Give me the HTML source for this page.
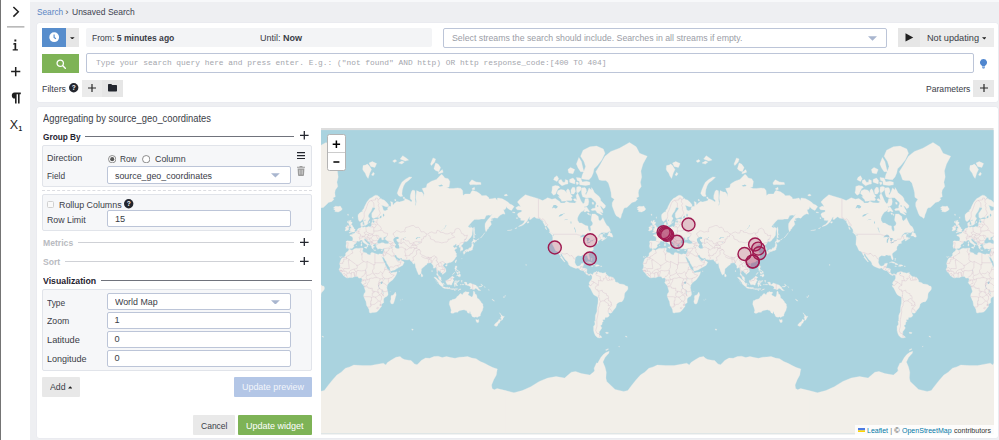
<!DOCTYPE html>
<html lang="en"><head><meta charset="utf-8"><title>Unsaved Search</title>
<style>
*{box-sizing:border-box;margin:0;padding:0}
html,body{width:999px;height:440px;overflow:hidden;background:#eeeff2;font-family:"Liberation Sans",sans-serif;color:#252d47}
.a{position:absolute}
.t{position:absolute;white-space:nowrap;line-height:1;font-size:9.6px;color:#3a3d47}
.b{font-weight:bold}
.panel{position:absolute;background:#fff;border-radius:2.500px;box-shadow:0 0 0 0.500px #e6e8ed}
.box{position:absolute;background:#f6f7f9;border:1px solid #e1e4ea;border-radius:2px}
.inp{position:absolute;background:#fff;border:1px solid #bcc5d8;border-radius:2px}
.btn{position:absolute;background:#e8e8e8;border-radius:1px}
.hr{position:absolute;height:1px;background:#70737c}
.hrl{position:absolute;height:1px;background:#cfd1d6}
</style></head>
<body>
<div class="a" style="left:0;top:0;width:1px;height:440px;background:#747474"></div>
<div class="a" style="left:1px;top:0;width:29.100px;height:440px;background:#fff"></div>
<div class="a" style="left:30.2px;top:0;width:969px;height:1.6px;background:#f7f8fa"></div>
<svg class="a" style="left:0;top:0" width="31" height="130" viewBox="0 0 31 130"><path d="M13.4 7 L18.3 11.8 L13.4 16.6" fill="none" stroke="#1f1f1f" stroke-width="1.5"/><rect x="7" y="26.4" width="17.4" height="1" fill="#8d8d8d"/><path d="M13.8 43h2.4v6.2h1.7v1.4h-5.2v-1.4h1.8v-4.8h-1.6z M14.4 39.6h1.9v2h-1.9z" fill="#1f1f1f"/><path d="M11.1 71.6h9.200 M15.7 67v9.200" stroke="#1f1f1f" stroke-width="1.5" fill="none"/><path d="M14.6 92.600h6.200v1.600h-1.200v9.200h-1.600v-9.200h-1.400v9.200h-1.600v-4.800a3 3 0 0 1-.4-6z" fill="#1f1f1f"/></svg>
<div class="t " style="left:9.8px;top:119.12px;font-size:12.5px;color:#1f1f1f;">X</div>
<div class="t b" style="left:18.4px;top:125.60px;font-size:6.5px;color:#1f1f1f;">1</div>
<div class="t " style="left:36.8px;top:7.40px;font-size:9.8px;color:#5b86c4;transform:scaleX(0.844);transform-origin:0 0;">Search</div>
<div class="t " style="left:65.2px;top:7.00px;font-size:9.8px;color:#555;">&rsaquo;</div>
<div class="t " style="left:71.7px;top:7.40px;font-size:9.8px;color:#3d4250;transform:scaleX(0.867);transform-origin:0 0;">Unsaved Search</div>
<div class="panel" style="left:36.600px;top:22.700px;width:961px;height:79.500px"></div>
<div class="a" style="left:42px;top:28px;width:24.2px;height:19px;background:#578dcc"></div>
<svg class="a" style="left:49px;top:32.4px" width="10.4" height="10.4" viewBox="0 0 20 20"><circle cx="10" cy="10" r="9.4" fill="#fff"/><path d="M9.8 4.6v5.9l3.6 2.6" stroke="#578dcc" stroke-width="2.2" fill="none"/></svg>
<div class="a" style="left:66.2px;top:28px;width:12.8px;height:19px;background:#e6e6e6"></div>
<svg class="a" style="left:70.3px;top:36.6px" width="4.6" height="2.6" viewBox="0 0 10 5"><path d="M0 0h10l-5 5z" fill="#1f1f1f"/></svg>
<div class="a" style="left:86.4px;top:28px;width:345.6px;height:19px;background:#f3f4f6;border-radius:2px"></div>
<div class="t " style="left:92px;top:33.37px;font-size:9.6px;transform:scaleX(0.893);transform-origin:0 0;">From: <b>5 minutes ago</b></div>
<div class="t " style="left:259.5px;top:33.37px;font-size:9.6px;transform:scaleX(0.938);transform-origin:0 0;">Until: <b>Now</b></div>
<div class="inp" style="left:442.8px;top:28px;width:444px;height:20px"></div>
<div class="t " style="left:451.8px;top:33.83px;font-size:9.3px;color:#9a9da6;transform:scaleX(0.942);transform-origin:0 0;">Select streams the search should include. Searches in all streams if empty.</div>
<svg class="a" style="left:868px;top:36px" width="9" height="4.8" viewBox="0 0 10 5"><path d="M0 0h10l-5 5z" fill="#a9b6cf"/></svg>
<div class="a" style="left:898px;top:28px;width:22px;height:19.4px;background:#e6e6e6"></div>
<svg class="a" style="left:905px;top:33.2px" width="8.6" height="8.8" viewBox="0 0 10 10"><path d="M0.6 0.2L9.6 5L0.6 9.8z" fill="#1f1f1f"/></svg>
<div class="a" style="left:920px;top:28px;width:73.8px;height:19.4px;background:#ececec"></div>
<div class="t " style="left:927.4px;top:33.37px;font-size:9.6px;transform:scaleX(0.956);transform-origin:0 0;">Not updating</div>
<svg class="a" style="left:981.6px;top:37px" width="4.6" height="2.6" viewBox="0 0 10 5"><path d="M0 0h10l-5 5z" fill="#1f1f1f"/></svg>
<div class="a" style="left:42px;top:54.2px;width:37px;height:19.2px;background:#7eb356"></div>
<svg class="a" style="left:55.6px;top:58.8px" width="10.6" height="10.6" viewBox="0 0 20 20"><circle cx="8" cy="8" r="6" fill="none" stroke="#fff" stroke-width="2.4"/><path d="M12.4 12.4L18.6 18.6" stroke="#fff" stroke-width="2.6"/></svg>
<div class="inp" style="left:86.4px;top:53.4px;width:887.2px;height:20px"></div>
<div class="t " style="left:96.3px;top:59.07px;font-size:7.87px;color:#a4a6ad;font-family:'Liberation Mono',monospace;transform:scaleX(1.002);transform-origin:0 0;">Type your search query here and press enter. E.g.: ("not found" AND http) OR http response_code:[400 TO 404]</div>
<svg class="a" style="left:979.6px;top:58.8px" width="7" height="10.4" viewBox="0 0 14 21"><path d="M7 0a7 7 0 0 0-4.2 12.6c.8.8 1.2 1.6 1.3 2.8h5.8c.1-1.2.5-2 1.3-2.8A7 7 0 0 0 7 0z M4.2 16.6h5.6v1.6H4.2z M5.2 19h3.6v1.6H5.2z" fill="#4f86cf"/></svg>
<div class="t " style="left:42.4px;top:83.57px;font-size:9.6px;transform:scaleX(0.919);transform-origin:0 0;">Filters</div>
<svg class="a" style="left:69.2px;top:83.4px" width="9.4" height="9.4" viewBox="0 0 20 20"><circle cx="10" cy="10" r="10" fill="#23262e"/><text x="10" y="15.2" font-size="14" font-weight="bold" text-anchor="middle" fill="#fff" font-family="Liberation Sans">?</text></svg>
<div class="a" style="left:82px;top:80px;width:20.4px;height:16.6px;background:#ebebeb"></div>
<div class="a" style="left:102.4px;top:80px;width:20.2px;height:16.6px;background:#e6e6e6"></div>
<svg class="a" style="left:88px;top:84px" width="8" height="8" viewBox="0 0 10 10"><path d="M0 5h10M5 0v10" stroke="#2a2a2a" stroke-width="1.5"/></svg>
<svg class="a" style="left:108px;top:84.2px" width="9" height="7.6" viewBox="0 0 18 15"><path d="M0 1.5A1.5 1.5 0 0 1 1.5 0h5l2 2h8A1.5 1.5 0 0 1 18 3.5v10A1.5 1.5 0 0 1 16.500 15h-15A1.500 1.500 0 0 1 0 13.500z" fill="#23262e"/></svg>
<div class="t " style="left:925.6px;top:83.57px;font-size:9.6px;transform:scaleX(0.895);transform-origin:0 0;">Parameters</div>
<div class="a" style="left:973.3px;top:80px;width:20.5px;height:16.8px;background:#e8e8e8"></div>
<svg class="a" style="left:979.6px;top:84.2px" width="8" height="8" viewBox="0 0 10 10"><path d="M0 5h10M5 0v10" stroke="#2a2a2a" stroke-width="1.5"/></svg>
<div class="panel" style="left:36.600px;top:107.300px;width:961px;height:331px"></div>
<div class="t " style="left:43px;top:114.10px;font-size:10.4px;transform:scaleX(0.900);transform-origin:0 0;">Aggregating by source_geo_coordinates</div>
<div class="t b" style="left:42.6px;top:132.00px;font-size:9.8px;color:#1f2330;transform:scaleX(0.842);transform-origin:0 0;">Group By</div>
<div class="hr" style="left:85.3px;top:135.9px;width:208.5px"></div>
<svg class="a" style="left:300px;top:131.4px" width="8.6" height="8.6" viewBox="0 0 10 10"><path d="M0 5h10M5 0v10" stroke="#23262e" stroke-width="1.5"/></svg>
<div class="box" style="left:42.4px;top:144.6px;width:269.4px;height:42.2px"></div>
<div class="t " style="left:47.3px;top:153.37px;font-size:9.6px;transform:scaleX(0.930);transform-origin:0 0;">Direction</div>
<svg class="a" style="left:107.6px;top:154.8px" width="8.4" height="8.4" viewBox="0 0 16 16"><circle cx="8" cy="8" r="7" fill="#fff" stroke="#767676" stroke-width="1.6"/><circle cx="8" cy="8" r="4" fill="#5a5a5a"/></svg>
<div class="t " style="left:119.7px;top:153.77px;font-size:9.6px;transform:scaleX(0.864);transform-origin:0 0;">Row</div>
<svg class="a" style="left:142px;top:154.8px" width="8.4" height="8.4" viewBox="0 0 16 16"><circle cx="8" cy="8" r="7" fill="#fff" stroke="#767676" stroke-width="1.6"/></svg>
<div class="t " style="left:154.6px;top:153.77px;font-size:9.6px;transform:scaleX(0.926);transform-origin:0 0;">Column</div>
<svg class="a" style="left:296.6px;top:152px" width="8.4" height="7.4" viewBox="0 0 16 14"><path d="M0 1.300h16M0 7h16M0 12.700h16" stroke="#23262e" stroke-width="2.4"/></svg>
<svg class="a" style="left:297px;top:165.600px" width="8" height="10" viewBox="0 0 16 20"><path d="M5.500 0h5l.8 1.600H16v2H0v-2h4.700z M1.200 5h13.600l-.9 13.400a1.700 1.700 0 0 1-1.700 1.600H3.800a1.700 1.700 0 0 1-1.700-1.600z" fill="#9b9b9b"/><path d="M5 7.500v9.500M8 7.500v9.500M11 7.500v9.500" stroke="#ddd" stroke-width="1.200"/></svg>
<div class="t " style="left:47.3px;top:170.77px;font-size:9.6px;transform:scaleX(0.866);transform-origin:0 0;">Field</div>
<div class="inp" style="left:107.2px;top:166.4px;width:183.4px;height:17.2px"></div>
<div class="t " style="left:114.6px;top:170.57px;font-size:9.6px;transform:scaleX(0.923);transform-origin:0 0;">source_geo_coordinates</div>
<svg class="a" style="left:271.4px;top:173.4px" width="8.800" height="4.800" viewBox="0 0 10 5"><path d="M0 0h10l-5 5z" fill="#a9b6cf"/></svg>
<div class="a" style="left:42.4px;top:190px;width:269.4px;height:0;border-top:1px dashed #dcdde2"></div>
<div class="box" style="left:42.4px;top:194.4px;width:269.4px;height:36.2px"></div>
<div class="a" style="left:47.3px;top:200.800px;width:7.200px;height:7.200px;border:1px solid #d0d0d0;border-radius:1.500px;background:#fafafa"></div>
<div class="t " style="left:58.8px;top:199.97px;font-size:9.6px;transform:scaleX(0.924);transform-origin:0 0;">Rollup Columns</div>
<svg class="a" style="left:124.2px;top:199.300px" width="9.400" height="9.400" viewBox="0 0 20 20"><circle cx="10" cy="10" r="10" fill="#23262e"/><text x="10" y="15.200" font-size="14" font-weight="bold" text-anchor="middle" fill="#fff" font-family="Liberation Sans">?</text></svg>
<div class="t " style="left:47.3px;top:214.57px;font-size:9.6px;transform:scaleX(0.916);transform-origin:0 0;">Row Limit</div>
<div class="inp" style="left:107.2px;top:210.200px;width:183.4px;height:16.400px"></div>
<div class="t " style="left:115px;top:214.51px;font-size:9.2px;">15</div>
<div class="t b" style="left:42.6px;top:237.80px;font-size:9.8px;color:#b9bbc1;transform:scaleX(0.880);transform-origin:0 0;">Metrics</div>
<div class="hrl" style="left:77.800px;top:241.900px;width:216px"></div>
<svg class="a" style="left:300px;top:237.600px" width="8.600" height="8.600" viewBox="0 0 10 10"><path d="M0 5h10M5 0v10" stroke="#23262e" stroke-width="1.500"/></svg>
<div class="t b" style="left:42.6px;top:256.70px;font-size:9.8px;color:#b9bbc1;transform:scaleX(0.877);transform-origin:0 0;">Sort</div>
<div class="hrl" style="left:65.300px;top:261.200px;width:228.500px"></div>
<svg class="a" style="left:300px;top:256.800px" width="8.600" height="8.600" viewBox="0 0 10 10"><path d="M0 5h10M5 0v10" stroke="#23262e" stroke-width="1.500"/></svg>
<div class="t b" style="left:42.6px;top:276.00px;font-size:9.8px;color:#1f2330;transform:scaleX(0.891);transform-origin:0 0;">Visualization</div>
<div class="hr" style="left:100.800px;top:280.100px;width:210.800px"></div>
<div class="box" style="left:42.4px;top:288.800px;width:269.400px;height:81.800px"></div>
<div class="t " style="left:47.3px;top:297.67px;font-size:9.6px;transform:scaleX(0.874);transform-origin:0 0;">Type</div>
<div class="inp" style="left:107.2px;top:292.8px;width:183.400px;height:17px"></div>
<div class="t " style="left:114.6px;top:297.37px;font-size:9.6px;transform:scaleX(0.922);transform-origin:0 0;">World Map</div>
<div class="t " style="left:47.3px;top:316.37px;font-size:9.6px;transform:scaleX(0.905);transform-origin:0 0;">Zoom</div>
<div class="inp" style="left:107.2px;top:311.7px;width:183.400px;height:17px"></div>
<div class="t " style="left:114.6px;top:316.41px;font-size:9.2px;">1</div>
<div class="t " style="left:47.3px;top:335.17px;font-size:9.6px;transform:scaleX(0.961);transform-origin:0 0;">Latitude</div>
<div class="inp" style="left:107.2px;top:330.5px;width:183.400px;height:17px"></div>
<div class="t " style="left:114.6px;top:335.21px;font-size:9.2px;">0</div>
<div class="t " style="left:47.3px;top:354.37px;font-size:9.6px;transform:scaleX(0.939);transform-origin:0 0;">Longitude</div>
<div class="inp" style="left:107.2px;top:349.5px;width:183.400px;height:17px"></div>
<div class="t " style="left:114.6px;top:354.41px;font-size:9.2px;">0</div>
<svg class="a" style="left:271.400px;top:299.600px" width="8.800" height="4.800" viewBox="0 0 10 5"><path d="M0 0h10l-5 5z" fill="#a9b6cf"/></svg>
<div class="btn" style="left:42px;top:376.800px;width:38px;height:20px;background:#e8e8e8"></div>
<div class="t " style="left:50px;top:382.37px;font-size:9.6px;transform:scaleX(0.913);transform-origin:0 0;">Add</div>
<svg class="a" style="left:68px;top:386px" width="4.400" height="2.600" viewBox="0 0 10 5"><path d="M0 5h10l-5-5z" fill="#1f1f1f"/></svg>
<div class="btn" style="left:233.600px;top:376.800px;width:78.200px;height:20px;background:#b3c6e6"></div>
<div class="t " style="left:241.6px;top:382.37px;font-size:9.6px;color:#f2f5fb;transform:scaleX(0.930);transform-origin:0 0;">Update preview</div>
<div class="btn" style="left:193.400px;top:415.200px;width:42.100px;height:19.800px;background:#e9e9e9"></div>
<div class="t " style="left:201px;top:420.97px;font-size:9.6px;transform:scaleX(0.887);transform-origin:0 0;">Cancel</div>
<div class="btn" style="left:238.200px;top:415.200px;width:73.600px;height:19.800px;background:#7eb356"></div>
<div class="t " style="left:246px;top:420.97px;font-size:9.6px;color:#fff;transform:scaleX(0.939);transform-origin:0 0;">Update widget</div>
<svg class="a" style="left:321.0px;top:128.2px" width="672.6" height="306.4" viewBox="0 0 672.6 306.4">
<rect x="0" y="0" width="672.6" height="306.4" fill="#ddd"/>
<rect x="0" y="2.1" width="672.6" height="303.5" fill="#aad3df"/>
<path fill="#f2efe9" stroke="#f2efe9" stroke-width="0.3" stroke-linejoin="round" d="M-4.3 90.5L-6.0 89.0L-8.1 87.9L-9.4 85.8L-10.6 82.6L-12.3 78.0L-12.3 74.7L-10.2 71.2L-13.1 69.2L-13.4 64.8L-14.4 60.5L-16.1 54.9L-18.6 52.5L-22.8 52.5L-25.4 51.8L-27.1 47.0L-28.7 43.7L-24.5 37.1L-22.0 32.6L-19.5 28.2L-13.6 23.4L-5.1 20.2L5.0 14.5L11.7 18.8L15.1 25.3L22.7 28.2L18.5 36.1L16.4 42.9L17.2 48.9L15.9 54.2L16.8 58.4L14.3 62.0L13.8 64.8L14.3 68.7L11.7 70.0L13.0 71.2L10.9 73.5L7.5 74.5L5.0 76.9L2.4 79.4L0.3 79.8L-0.9 81.0L-1.8 83.9L-3.0 86.7L-3.5 89.3ZM12.3 80.0L14.3 78.2L17.6 78.6L19.3 78.0L20.5 80.0L21.3 81.0L20.2 82.4L17.2 84.1L15.5 83.8L13.7 83.4L14.3 82.2L12.6 81.2L14.3 80.2ZM-32.4 146.6L-31.9 147.0L-30.9 144.8L-30.3 144.4L-28.7 144.0L-27.5 143.3L-27.6 144.5L-26.2 143.6L-24.8 144.6L-22.8 144.8L-21.6 145.2L-19.5 144.7L-18.6 145.8L-17.8 146.6L-16.5 147.9L-15.3 148.7L-13.6 148.8L-11.5 149.4L-10.6 150.2L-9.4 152.3L-9.4 153.8L-8.1 154.2L-6.8 154.4L-4.7 155.9L-2.2 156.2L-0.1 156.8L1.4 157.9L3.0 158.3L3.5 160.1L3.1 161.8L1.6 163.6L0.3 164.9L-0.1 167.0L-0.2 169.2L-0.9 171.3L-1.8 172.8L-2.6 173.7L-4.7 173.9L-6.4 174.7L-7.9 176.2L-8.2 177.9L-8.9 179.7L-10.2 181.3L-11.3 182.6L-12.3 184.3L-13.6 185.2L-15.3 184.9L-16.4 184.3L-15.5 186.4L-15.0 186.9L-15.8 188.5L-16.9 189.2L-19.5 189.6L-19.7 191.5L-22.0 191.8L-21.2 193.5L-22.3 194.6L-22.4 196.4L-24.1 197.8L-22.8 199.4L-22.8 200.3L-24.3 202.6L-25.4 203.9L-24.9 205.8L-25.8 206.0L-24.8 207.1L-22.4 209.3L-24.9 210.0L-27.1 209.6L-29.2 207.4L-30.2 205.3L-30.9 202.6L-30.9 200.0L-31.0 198.4L-29.6 196.4L-29.6 194.6L-28.7 192.9L-29.3 191.8L-29.2 190.1L-29.2 187.6L-28.6 185.9L-27.6 183.8L-27.5 180.3L-27.1 177.5L-26.6 175.6L-26.5 174.0L-26.4 171.0L-26.6 169.5L-27.5 168.6L-29.2 167.7L-30.9 166.6L-31.5 165.5L-32.3 164.0L-33.4 161.8L-34.4 159.7L-35.5 158.9L-35.7 157.6L-34.9 156.6L-34.6 155.9L-35.5 155.7L-35.3 154.6L-34.6 153.4L-34.5 153.0L-33.6 152.5L-32.5 150.6L-32.4 149.2L-32.5 147.9L-32.9 147.6ZM27.8 121.4L28.3 121.3L30.3 122.0L31.1 122.2L32.8 121.3L33.6 120.7L35.3 120.3L37.0 120.4L39.1 120.2L41.1 119.9L42.1 120.2L41.7 120.8L41.9 121.7L41.4 123.0L42.1 123.8L43.3 124.4L45.6 124.9L46.1 126.0L48.0 126.8L49.2 126.9L49.7 125.8L49.7 125.0L50.9 124.4L52.4 124.8L53.9 125.6L55.6 126.0L57.2 126.4L58.9 125.8L60.0 126.1L61.6 126.0L62.2 127.8L61.6 129.4L60.9 128.7L60.3 127.4L60.4 128.2L61.0 129.4L61.5 130.6L62.3 132.5L62.9 133.9L64.0 135.2L64.2 137.0L65.3 138.4L65.9 140.5L67.4 141.7L68.6 142.7L69.3 143.2L69.3 144.0L70.3 144.9L72.4 144.3L74.1 144.2L76.0 143.7L75.8 144.9L75.4 146.2L74.5 147.9L73.3 149.8L71.6 151.9L69.5 153.5L68.2 154.6L67.4 155.5L66.5 156.8L66.1 158.0L65.7 159.3L66.1 161.0L66.5 162.7L66.9 164.4L67.1 166.6L66.1 168.2L64.0 169.2L62.7 170.8L62.6 172.8L62.7 174.7L60.6 176.0L60.5 176.5L60.5 178.4L59.4 179.8L58.1 181.6L56.8 183.1L55.6 184.0L54.5 184.3L52.6 184.4L51.3 184.5L49.7 185.1L48.4 184.6L48.2 183.1L48.1 181.8L47.4 180.3L46.7 179.0L45.6 177.5L45.3 175.6L45.0 173.6L44.2 171.9L43.3 169.7L42.7 168.5L42.7 167.0L43.3 165.3L44.2 164.3L44.4 163.1L43.9 161.4L43.2 158.9L43.1 158.4L42.7 157.6L42.1 156.9L41.0 155.7L40.2 154.4L40.8 153.4L40.8 152.8L41.1 151.9L41.0 150.8L40.8 150.4L40.1 149.9L38.7 150.1L37.9 150.2L37.0 149.1L36.6 148.5L34.9 148.4L33.8 148.6L32.6 149.1L31.1 149.7L30.1 149.5L28.6 149.4L26.5 150.1L25.0 149.4L23.7 148.5L22.3 147.5L21.7 146.6L21.3 145.8L20.2 144.6L18.7 143.3L18.6 142.4L18.0 141.3L18.9 140.1L19.1 138.4L19.1 137.2L18.5 135.7L19.3 133.2L20.2 131.1L21.8 129.4L23.1 128.9L24.4 127.8L24.6 126.8L24.5 125.8L25.0 124.8L26.1 123.8L27.1 123.3L27.7 122.1ZM74.4 164.0L75.2 167.0L75.0 167.5L74.5 168.8L73.9 171.0L73.1 173.7L72.4 175.6L71.2 176.0L69.9 175.4L69.3 173.3L70.1 171.0L69.9 169.2L70.3 167.6L71.8 167.2L72.8 166.4L73.7 165.1ZM24.8 118.4L25.4 115.8L25.0 113.6L26.1 112.8L28.2 112.9L29.8 113.0L31.3 113.1L31.8 111.8L31.9 110.0L30.9 108.6L29.0 107.7L28.8 107.0L30.3 106.5L31.5 106.8L31.4 105.4L31.8 105.8L33.0 105.6L34.1 104.7L34.2 103.8L35.8 103.1L36.3 102.0L36.8 100.9L37.9 100.2L38.7 100.1L40.0 99.8L40.2 98.3L39.7 97.3L39.7 95.0L41.1 94.3L41.7 93.9L41.6 95.8L41.9 96.6L41.2 97.8L41.1 98.3L41.9 99.5L43.1 99.1L44.2 98.8L44.9 99.6L46.3 99.1L48.2 98.3L48.6 98.9L49.5 98.9L49.7 98.2L50.5 97.6L50.5 95.3L50.9 94.3L51.8 93.9L52.4 95.0L53.0 94.9L53.4 93.6L53.3 93.0L52.6 92.3L52.6 91.5L53.6 91.0L55.6 91.0L56.4 91.0L58.3 90.4L57.0 89.3L54.7 89.5L53.8 90.0L52.2 90.5L50.9 89.3L50.8 87.6L50.8 85.3L51.8 83.9L53.5 81.6L54.2 80.8L53.5 79.6L51.5 79.6L50.8 81.6L49.9 83.6L48.4 85.4L47.4 87.2L47.3 89.0L48.4 89.8L48.6 90.9L48.1 91.4L46.9 93.8L46.6 95.5L46.0 96.4L44.9 97.3L43.8 97.5L43.6 96.6L43.3 95.2L42.8 93.9L42.2 91.8L41.7 91.4L41.8 90.4L41.1 91.8L39.7 93.3L38.7 93.5L37.6 92.2L37.2 90.2L37.0 88.5L37.1 86.7L38.3 85.3L40.0 83.9L41.6 83.4L41.2 82.6L42.9 80.4L43.6 78.4L45.0 75.8L45.9 74.0L47.1 72.4L48.8 70.5L50.9 69.5L52.6 68.2L54.5 67.2L56.4 67.4L58.1 68.7L58.9 69.2L58.1 70.7L60.2 70.5L61.0 71.4L63.1 72.1L65.3 74.0L67.4 76.5L67.6 78.4L66.5 78.8L64.8 78.8L62.3 77.7L60.6 77.3L60.2 76.7L61.5 79.0L62.3 82.0L64.0 83.0L63.6 83.2L64.8 82.4L66.5 81.8L66.9 82.0L66.5 80.0L68.2 78.2L69.9 78.6L70.1 75.8L69.5 73.5L71.6 74.2L72.0 77.3L73.3 75.6L75.8 73.5L78.3 74.0L80.9 73.3L83.4 72.4L83.8 70.5L86.8 71.7L88.4 72.4L89.7 73.5L90.5 74.0L91.0 72.4L89.3 70.7L89.3 67.4L90.5 63.4L91.8 62.0L93.9 62.8L94.2 67.4L94.0 71.2L94.6 74.7L93.9 77.7L94.8 77.1L95.4 73.5L94.8 70.0L95.6 62.6L98.6 64.0L100.7 64.0L102.4 66.1L102.8 68.7L103.2 65.3L101.1 60.5L105.3 59.6L106.1 55.9L110.4 53.2L115.4 51.4L120.5 46.2L122.2 47.7L123.8 50.0L127.2 50.7L128.9 53.5L128.1 59.0L125.5 59.3L128.5 60.5L132.3 60.5L136.5 59.9L139.9 60.5L141.6 62.6L142.0 67.4L144.1 66.1L146.6 65.9L149.1 66.1L150.8 63.1L151.7 62.6L155.9 63.7L159.3 65.9L160.9 67.7L165.2 67.4L167.7 69.5L168.1 70.9L171.1 70.7L174.4 70.0L176.1 72.4L176.5 70.0L178.6 70.2L181.2 70.7L184.5 72.6L187.1 74.2L188.8 76.0L191.3 76.9L193.2 78.8L192.1 80.0L190.5 82.4L188.3 81.4L186.2 80.0L185.4 78.6L184.5 81.0L183.3 81.8L182.4 81.6L183.7 84.9L184.1 86.2L182.0 85.8L179.5 87.1L177.8 88.5L176.4 90.2L173.6 89.7L171.9 90.2L170.6 90.5L170.2 92.7L169.4 93.5L169.8 94.3L170.4 96.3L169.2 98.0L167.7 99.5L167.5 100.6L166.4 101.1L166.0 102.6L164.9 103.7L164.3 101.6L164.0 98.8L164.1 95.8L165.2 93.8L167.3 91.0L169.0 89.3L170.2 87.6L171.5 85.8L169.4 87.4L167.7 87.1L165.2 87.6L163.5 91.0L160.1 91.0L158.0 91.4L155.5 91.4L153.4 91.4L150.8 93.9L149.1 96.1L147.0 98.5L148.3 99.5L149.1 99.8L150.4 99.2L151.9 100.5L151.4 102.7L151.2 105.0L151.1 106.9L149.6 109.4L147.9 111.2L146.6 113.0L144.9 113.8L144.1 113.3L143.0 114.3L142.2 115.3L142.1 116.1L140.4 117.2L140.3 117.8L141.1 118.9L141.9 120.2L141.9 121.7L141.6 122.2L140.5 122.6L139.4 122.9L139.4 121.5L139.6 120.2L139.2 119.4L138.4 119.3L137.9 118.9L138.4 117.6L137.7 116.9L136.1 117.5L135.1 118.3L135.4 117.5L135.7 116.4L134.8 116.0L133.5 117.2L132.3 117.8L132.0 118.6L133.0 119.3L133.3 120.0L134.6 119.3L136.1 119.8L135.9 120.3L134.4 121.1L133.4 122.3L134.2 123.1L134.7 124.6L135.5 125.5L135.6 126.4L134.6 127.0L135.7 127.5L135.4 128.7L134.6 129.4L133.7 131.1L133.1 131.8L132.4 132.6L131.4 133.4L130.6 134.0L129.2 134.5L128.5 134.6L127.2 135.1L126.0 135.5L125.8 136.3L125.4 135.3L124.3 135.1L123.4 135.4L122.8 136.0L122.0 137.5L122.6 138.6L123.6 139.7L124.1 140.1L124.7 141.4L125.0 142.9L124.7 144.0L123.4 145.0L122.8 145.6L121.5 146.5L121.2 145.5L120.9 145.0L120.1 144.8L119.5 143.8L118.8 143.3L117.9 143.0L117.9 142.4L117.4 142.3L117.1 142.7L116.9 143.8L116.4 145.1L116.5 145.9L117.1 146.6L117.4 147.7L118.4 148.1L119.2 148.7L119.9 149.6L120.1 150.4L120.0 151.4L120.6 152.6L120.1 152.7L119.0 151.9L118.2 151.3L117.5 149.7L117.4 148.7L116.9 148.1L116.3 147.2L115.7 147.0L115.8 145.5L116.0 144.5L115.8 143.2L115.6 141.9L115.2 140.6L115.2 139.7L114.6 139.3L113.9 139.7L113.1 140.3L112.3 140.1L112.5 138.8L112.2 137.7L111.6 136.8L110.6 135.7L110.2 134.5L109.1 134.8L107.8 135.1L106.1 135.2L106.0 136.1L105.6 136.7L104.5 137.3L103.2 138.5L102.1 139.6L101.1 140.3L100.4 141.0L100.4 142.7L100.1 144.0L100.1 145.1L99.4 145.9L98.7 146.4L98.1 146.9L97.3 146.2L96.9 144.9L96.2 143.6L95.7 142.3L95.4 141.0L94.7 139.7L94.3 137.6L94.1 136.1L94.0 135.2L93.9 134.6L93.5 135.5L92.5 135.9L91.1 134.6L92.0 133.9L90.8 133.7L89.7 133.1L89.3 132.2L88.9 131.6L87.2 131.8L84.9 131.9L83.0 131.6L81.3 131.4L80.9 130.3L80.3 130.0L78.7 130.5L77.5 130.1L76.2 129.3L75.6 128.2L75.0 127.1L73.9 127.0L73.3 127.8L73.7 128.9L74.4 129.9L75.1 130.5L75.1 131.5L75.6 132.2L76.0 131.0L76.3 131.8L76.2 132.5L77.1 132.8L78.6 132.7L79.4 131.7L80.1 131.0L80.3 132.0L80.9 132.9L82.2 133.3L83.2 134.3L82.4 135.9L81.5 137.5L80.9 137.7L79.6 138.5L78.3 139.3L76.8 140.1L75.0 141.1L73.7 141.9L71.6 142.6L70.7 142.9L69.5 143.0L69.2 142.3L68.9 141.0L68.8 139.7L67.5 137.9L66.5 136.3L65.8 135.2L65.3 133.4L64.2 132.2L63.8 131.1L62.7 129.7L62.3 129.0L62.2 127.8L61.6 126.0L61.9 125.7L62.3 124.5L62.7 123.4L63.1 122.1L63.1 121.2L63.3 120.5L62.6 120.6L61.5 120.9L60.2 121.1L58.6 120.4L57.7 121.0L56.4 120.5L55.8 119.7L55.1 118.6L55.6 117.5L54.9 116.9L56.0 116.4L57.2 116.2L57.3 115.6L58.9 115.6L60.6 114.7L62.3 114.7L63.6 115.5L64.8 115.8L66.5 115.8L67.9 115.2L67.8 113.9L66.5 113.0L64.8 111.8L64.0 111.0L64.8 109.4L65.9 108.6L64.4 108.8L62.7 109.4L62.3 110.0L62.7 110.9L63.5 111.1L62.3 111.5L61.2 111.9L60.3 110.7L61.1 109.9L59.8 109.4L58.8 109.4L57.8 110.9L57.0 112.2L56.4 113.2L56.2 114.1L56.6 115.2L57.2 115.6L56.4 115.8L55.6 116.2L54.9 116.6L54.7 116.0L53.5 116.0L52.9 116.7L52.1 116.4L51.9 117.5L52.4 118.0L53.0 118.9L53.0 119.4L52.4 119.2L52.2 119.8L52.2 120.7L51.8 120.8L51.1 120.4L50.7 119.3L50.8 118.8L50.3 118.1L49.8 117.4L49.2 116.5L49.2 115.3L49.0 114.7L48.4 114.3L47.1 113.6L45.9 112.5L45.3 111.2L44.8 110.9L44.3 111.3L44.3 110.6L44.3 110.4L43.3 110.7L43.2 112.1L44.2 112.9L44.8 114.1L46.1 114.8L46.3 115.4L47.1 115.7L48.4 116.7L48.3 117.2L47.1 116.4L46.8 117.3L47.2 118.0L46.7 118.8L46.0 119.1L46.3 118.4L46.3 117.5L45.7 116.8L45.0 116.2L43.8 115.5L43.1 114.9L42.1 114.3L41.7 113.6L41.4 112.5L40.3 111.9L39.1 112.6L38.0 113.5L36.8 113.1L35.8 113.2L35.4 114.1L35.5 114.8L34.7 115.4L33.5 116.1L32.5 117.5L33.0 118.3L32.2 119.4L31.1 120.4L29.1 120.5L28.2 121.1L27.6 120.7L27.0 120.0L26.1 120.2L25.3 120.2L25.4 118.7ZM28.0 104.8L29.3 103.4L30.3 103.4L30.5 103.0L30.1 103.1L29.3 102.8L28.4 102.6L29.3 101.9L29.3 101.2L28.9 101.2L29.1 100.5L30.2 100.5L30.3 99.6L29.9 98.8L29.8 98.2L28.7 98.5L28.8 97.3L28.1 97.5L28.1 96.1L27.6 95.5L27.9 94.3L28.4 93.0L28.6 92.5L30.2 92.5L29.4 93.9L31.1 93.9L31.1 94.9L30.5 96.1L30.0 96.6L31.1 96.9L31.5 98.0L31.8 98.6L32.7 99.4L32.9 100.1L33.1 100.9L33.9 101.1L34.2 101.6L33.8 102.6L33.4 103.0L34.0 103.3L33.6 103.8L33.0 104.1L31.7 104.1L30.7 104.2L29.8 104.5L29.7 104.7L29.3 104.6L28.5 105.0ZM27.4 102.0L27.7 100.5L27.6 99.5L28.2 98.9L27.9 98.5L27.7 97.8L26.6 97.6L25.8 97.9L25.6 98.8L24.4 99.2L24.5 100.4L25.2 100.6L24.8 101.3L24.0 102.2L24.2 102.7L24.8 103.0L25.8 102.6L26.9 102.2ZM152.1 115.4L152.4 116.9L152.5 117.5L152.1 118.8L151.7 120.2L151.3 120.9L151.6 121.5L150.8 122.3L150.6 122.0L150.1 122.2L149.9 122.7L149.3 122.7L148.3 122.7L148.2 122.3L148.1 123.0L147.3 123.8L146.7 123.0L145.8 122.7L144.9 123.0L144.3 123.1L143.2 123.3L143.8 123.7L144.0 124.1L143.9 125.0L143.6 125.9L143.0 126.3L142.6 126.0L142.6 124.8L142.1 124.3L142.2 123.8L142.7 123.7L143.2 123.3L143.7 122.7L144.5 121.9L145.2 121.6L146.0 121.6L146.9 121.5L147.5 121.5L147.5 120.9L148.1 119.9L148.6 119.7L148.3 120.4L149.3 120.0L149.8 119.3L150.7 118.3L150.8 117.3L150.8 116.3L151.1 115.6L151.7 116.0ZM146.3 123.1L146.4 123.5L145.9 124.0L145.3 123.8L144.9 124.6L144.4 124.3L144.4 123.7L144.8 123.3L145.3 123.3ZM150.8 115.4L151.8 114.9L151.1 114.4L151.7 114.3L152.4 114.0L153.5 114.7L154.5 113.6L155.7 113.1L155.3 112.1L154.5 112.4L153.4 111.7L152.5 110.6L152.3 111.0L152.3 112.1L151.9 113.2L151.2 113.2L151.1 113.8L150.7 114.5ZM153.1 98.9L153.6 101.6L153.5 103.7L153.6 105.8L154.8 106.8L153.4 106.0L153.3 108.4L153.8 109.0L153.7 110.0L153.1 109.3L152.5 110.1L152.5 108.2L152.7 106.3L152.5 103.7L152.3 101.6L152.3 100.4ZM135.2 131.7L135.7 132.0L135.3 132.9L135.1 134.0L134.6 134.9L134.1 134.0L134.1 133.3L134.6 132.4ZM126.1 136.5L126.4 136.9L126.0 137.7L125.2 138.2L124.4 137.8L124.4 137.2L125.1 136.7ZM100.2 145.5L101.3 146.5L101.8 147.6L101.7 148.4L100.8 148.8L100.2 148.6L100.1 147.7L100.1 146.9ZM134.5 137.9L135.8 137.9L135.9 139.3L135.3 140.1L135.3 141.0L135.5 141.7L136.5 141.9L137.3 142.7L137.4 143.1L136.7 142.7L136.1 142.3L135.4 142.0L134.6 142.1L134.5 141.6L134.7 141.4L134.1 141.2L133.8 139.9L134.2 139.6L134.3 138.8ZM138.6 145.5L139.3 146.6L139.5 147.6L139.2 148.5L138.8 148.1L138.5 149.1L137.5 148.6L137.3 147.9L136.7 147.5L135.7 148.0L135.9 147.1L136.5 146.6L137.2 146.9L137.9 146.6L138.6 146.2ZM137.6 143.2L138.4 143.2L138.9 144.3L138.4 145.2L138.0 145.2L137.7 144.2ZM135.7 143.7L136.6 144.0L136.9 144.6L136.7 145.9L136.2 145.8L136.0 145.0L135.6 144.9ZM137.3 144.3L137.4 145.2L136.8 145.8L137.0 144.9ZM131.6 146.7L132.7 145.8L133.5 144.8L133.7 144.1L133.3 144.5L132.6 145.3L131.6 146.3ZM134.3 142.3L135.0 142.4L135.2 143.1L135.0 143.4L134.6 142.9ZM125.2 152.1L125.8 152.4L126.7 151.8L128.1 151.1L128.9 150.0L129.8 149.6L130.6 148.7L131.2 148.0L132.0 148.5L132.4 148.9L133.3 149.3L132.7 150.0L132.1 150.3L131.9 150.8L132.3 151.9L133.0 153.0L132.1 153.1L131.9 154.2L131.3 154.9L131.0 155.7L130.8 156.8L129.8 157.2L129.4 156.7L128.1 156.6L127.1 156.8L125.8 156.3L125.6 155.3L124.9 154.2L124.9 153.8L124.7 153.0ZM113.1 149.1L115.0 149.4L115.7 150.3L116.7 151.1L117.5 151.9L118.4 152.3L119.6 153.2L120.1 154.2L120.9 155.1L121.3 155.7L122.2 156.3L122.2 158.0L122.0 158.7L121.6 158.7L120.9 158.6L120.1 157.9L119.0 157.1L117.9 155.9L117.4 154.6L116.4 153.4L116.0 152.4L115.0 151.5L114.2 150.7L113.3 149.7ZM121.5 159.5L122.2 158.8L122.8 159.0L124.1 159.1L124.4 159.5L126.0 159.6L126.4 159.2L127.8 159.9L129.2 160.4L129.3 161.2L128.1 160.8L126.4 160.8L125.1 160.4L123.8 160.4L122.6 160.1ZM129.4 160.7L130.3 160.7L131.2 160.8L131.9 160.7L133.0 160.8L133.1 161.1L134.0 160.8L135.7 160.8L136.5 160.7L136.3 161.2L134.8 161.3L133.8 161.2L133.0 161.3L131.4 161.4L130.6 161.3L129.9 161.2ZM133.1 161.8L134.1 161.8L134.6 162.3L134.0 162.5L133.3 162.2ZM136.9 162.5L137.8 161.6L138.6 161.1L139.9 160.9L140.1 161.0L139.4 161.4L138.2 162.0L137.3 162.5ZM133.8 153.1L134.7 152.7L136.5 153.0L138.0 152.5L138.4 152.6L137.8 153.5L136.5 153.5L134.8 153.4L134.1 153.5L134.0 154.5L134.4 154.6L135.2 154.6L136.7 154.5L136.8 154.6L135.9 155.2L135.2 155.5L135.5 156.2L136.1 156.8L136.7 157.6L136.3 157.9L136.1 157.3L135.7 157.9L135.2 157.3L134.7 156.3L134.3 156.3L134.3 157.6L134.2 158.4L133.5 158.5L133.5 158.1L133.5 156.8L133.0 156.1L133.4 155.1L133.8 154.0ZM140.3 152.0L140.7 152.5L141.3 152.5L140.7 153.1L141.3 153.5L140.6 153.6L140.9 154.5L140.5 154.1L140.3 153.1ZM140.6 156.5L141.6 156.2L143.1 156.4L142.9 156.9L141.6 156.8L140.7 156.8ZM139.0 156.5L139.9 156.4L140.0 156.8L139.4 157.1L139.0 156.8ZM143.2 154.5L144.5 154.1L145.8 154.5L145.9 155.1L146.0 156.2L147.0 156.6L148.3 155.5L149.0 155.1L150.0 155.5L151.4 156.0L153.4 156.7L154.6 157.0L155.7 158.2L156.7 158.9L157.4 159.5L156.7 159.5L157.6 160.7L158.8 161.8L159.9 162.5L158.8 162.6L157.6 162.4L156.8 161.8L155.9 160.7L154.6 160.3L153.8 160.8L153.4 161.6L151.7 161.5L150.4 160.7L149.1 160.9L149.6 159.9L149.7 159.3L149.1 158.4L147.9 157.8L146.6 157.4L145.3 157.0L144.8 157.2L144.1 156.2L145.3 155.9L144.3 155.7L143.2 155.0ZM157.8 158.5L159.3 158.4L160.5 158.0L161.1 157.3L161.3 158.0L160.1 158.9L158.8 159.1L157.8 158.8ZM159.9 156.0L160.9 156.5L161.8 157.4L161.6 157.8L160.8 156.8L159.8 156.2ZM163.5 158.4L164.3 159.3L163.9 159.5L163.2 158.7ZM167.3 161.7L168.4 162.1L167.9 162.2L167.4 161.9ZM152.9 162.9L153.8 164.4L154.0 166.0L155.3 166.6L155.9 168.3L156.1 169.9L158.0 171.2L158.7 172.2L159.8 173.5L160.1 174.5L161.8 175.9L161.9 177.8L162.3 179.1L161.8 180.8L161.4 182.6L160.3 184.2L159.4 186.4L159.3 187.9L157.6 188.4L156.1 189.6L155.0 188.8L153.8 189.3L152.1 188.9L151.2 188.5L150.6 187.3L150.3 186.1L149.6 185.9L149.6 185.1L149.1 183.5L149.0 182.9L148.6 184.3L148.3 185.5L147.5 185.1L146.8 184.9L145.9 183.3L145.4 182.5L144.1 182.3L143.2 181.8L141.6 181.9L139.0 182.6L137.3 183.3L136.9 184.2L135.6 184.2L134.0 184.3L132.3 185.3L130.6 185.2L129.8 184.7L129.8 183.9L130.3 182.3L129.8 180.8L129.4 179.2L128.9 177.9L128.3 176.5L128.4 174.7L128.7 173.4L129.0 172.6L130.2 172.4L131.4 171.6L132.8 171.3L134.0 170.9L135.2 170.1L135.8 169.2L136.1 168.3L136.9 168.6L137.3 167.7L138.2 166.8L139.0 165.7L139.9 165.6L140.9 166.4L142.0 166.5L142.2 165.3L143.1 164.3L144.1 164.2L144.5 163.5L145.8 164.0L147.0 164.1L148.1 164.2L148.0 165.3L147.4 165.7L147.0 166.6L147.9 167.4L149.1 168.0L150.2 168.8L150.8 169.0L151.6 168.3L152.1 167.0L152.3 165.3L152.3 164.4L152.7 163.1ZM154.8 191.4L156.3 191.9L157.6 191.5L157.8 192.9L157.6 194.3L156.7 194.6L155.9 194.6L155.3 193.5L154.8 192.0ZM178.4 184.7L179.1 185.3L179.9 186.4L180.2 187.3L180.8 186.9L181.2 188.1L182.4 188.4L183.3 188.2L182.9 189.2L182.0 189.9L182.0 190.7L181.4 191.8L180.6 192.4L180.1 192.1L180.4 191.2L180.3 190.5L179.3 190.0L180.0 189.2L180.2 188.5L180.1 187.7L179.7 186.8L178.9 185.5ZM178.4 191.2L178.7 192.0L179.7 191.8L179.7 192.7L179.2 193.3L178.5 194.4L178.7 195.0L177.6 195.3L177.2 195.7L176.6 197.5L175.7 198.3L174.7 198.3L174.0 197.8L173.2 197.3L173.6 196.4L174.4 195.4L175.3 194.8L176.1 194.0L177.1 193.3L177.5 192.5L177.9 191.5ZM171.1 171.1L172.3 171.9L173.6 173.1L173.2 173.1L171.9 172.4L171.1 171.5ZM182.3 168.7L183.4 168.9L183.3 169.4L182.3 169.3ZM183.5 168.0L184.5 167.6L184.4 168.2L183.5 168.3ZM76.2 65.3L77.5 61.4L79.2 57.5L80.9 54.2L84.2 51.4L88.4 48.9L91.0 49.3L87.6 52.5L84.2 54.9L82.5 58.1L81.3 62.0L80.9 66.1L81.7 68.2L79.2 68.5L77.5 67.4ZM41.7 41.2L42.1 37.6L44.6 37.1L46.3 36.1L48.0 37.6L50.5 41.6L48.8 45.0L47.1 50.4L45.4 48.1L44.2 45.0L42.5 42.9ZM48.0 35.1L51.3 33.6L55.6 35.6L53.9 39.4L49.7 38.5ZM50.5 47.0L52.2 44.2L53.5 45.8L52.2 47.7ZM71.6 33.1L74.1 31.5L75.8 33.1L73.3 34.6ZM77.5 35.1L80.9 33.1L83.4 34.1L80.9 36.1ZM79.2 31.0L81.7 27.7L85.1 29.9L87.6 32.1L84.2 33.1ZM112.9 40.8L114.6 35.1L117.1 36.1L119.6 39.4L117.9 43.7L114.6 42.5ZM117.1 45.0L121.3 41.6L122.2 44.2L117.9 45.8ZM109.5 36.1L112.0 29.9L114.6 31.0L113.7 34.1L110.4 37.6ZM148.3 54.9L150.8 51.8L155.0 53.9L159.3 55.2L155.9 56.8L152.5 56.5L149.1 56.8ZM150.8 60.8L153.4 59.3L153.8 61.4L151.7 61.7ZM155.9 54.2L159.7 54.5L160.1 56.5L156.7 56.2ZM183.3 66.9L185.4 66.1L186.7 67.4L185.0 68.0L183.5 67.7ZM73.5 71.7L74.5 71.2L75.1 72.4L74.1 73.1ZM82.1 69.2L83.4 69.0L83.6 70.5L82.5 70.7ZM0.8 208.1L2.4 208.5L2.6 209.3L1.2 208.7ZM40.7 113.6L40.8 114.7L40.6 115.4L40.1 114.8L40.1 114.0ZM40.6 115.6L41.1 116.4L40.9 117.8L40.3 118.1L39.9 117.7L39.9 116.3ZM43.3 119.1L44.1 118.9L46.0 118.8L45.6 119.9L45.5 120.5L44.9 120.3L43.4 119.5ZM52.6 121.6L53.5 121.9L55.0 122.0L54.9 122.3L53.6 122.4L52.6 122.1ZM60.0 122.2L61.0 121.9L62.0 121.5L61.5 122.3L60.6 122.7L60.1 122.5ZM34.8 117.4L35.5 117.1L35.7 117.4L35.3 117.7ZM52.2 118.1L53.2 118.5L53.5 119.1L53.0 118.9ZM56.2 121.0L56.6 120.8L56.4 121.3ZM54.6 117.7L55.2 117.7L55.0 118.0ZM42.2 96.9L43.4 96.4L43.3 97.8L42.2 97.8ZM41.1 97.3L41.9 97.3L41.8 98.0L41.2 97.9ZM48.1 93.6L48.9 93.6L48.6 94.7L48.1 95.0ZM46.6 96.3L47.2 94.6L47.0 95.6ZM51.2 92.7L52.4 92.5L52.0 93.1L51.3 93.5ZM51.4 91.8L52.2 91.8L51.9 92.3ZM26.6 86.2L27.4 86.2L27.2 87.6L26.7 87.1ZM31.5 89.2L32.0 88.8L31.9 90.4L31.5 90.0ZM26.7 93.0L27.6 92.8L27.1 93.9L26.6 94.9L26.5 94.1ZM27.2 94.3L27.7 94.1L28.0 94.7L27.5 95.0ZM18.6 128.8L19.2 128.6L19.0 129.2L19.8 129.0L19.8 129.4L19.5 129.5ZM20.6 128.5L21.2 128.5L20.7 129.2ZM77.7 143.1L78.7 143.1L78.6 143.3L77.8 143.3ZM65.8 158.6L66.2 158.9L66.0 159.3ZM79.3 171.8L79.8 171.9L79.6 172.3ZM81.1 171.0L81.5 171.2L81.3 171.5ZM90.7 200.9L92.2 201.3L92.0 202.2L91.0 202.1ZM69.2 163.5L69.5 163.8L69.3 164.0ZM111.0 142.3L111.3 143.2L111.0 144.0L110.8 143.2ZM142.7 126.9L143.0 127.0L142.8 127.1ZM140.5 130.9L141.0 130.3L140.7 130.8ZM139.2 123.9L139.8 123.8L139.5 124.1ZM155.9 111.8L158.2 110.5L157.2 111.5ZM159.3 109.8L160.9 108.6L162.6 106.3L163.9 104.6L162.6 106.5L160.5 109.3ZM170.5 92.7L171.3 91.5L171.7 92.2ZM149.1 98.3L149.6 97.8L148.7 97.9ZM121.6 155.2L122.3 155.1L122.8 155.9L122.8 156.3L122.0 155.7ZM123.5 156.0L124.1 156.2L123.7 156.5ZM114.7 152.6L115.3 153.0L115.2 153.3ZM115.9 154.6L116.5 155.2L116.3 155.3ZM127.8 159.6L128.9 159.6L128.8 159.9L127.9 159.9ZM-119.0 262.6L-110.5 264.7L-102.1 262.6L-93.7 258.7L-85.2 253.4L-76.8 250.1L-68.4 248.6L-59.9 250.1L-53.2 244.2L-49.0 243.4L-43.1 245.6L-34.6 247.1L-30.4 243.6L-27.9 237.6L-26.2 234.1L-23.7 229.6L-21.2 226.6L-18.6 224.6L-15.3 223.3L-15.7 225.2L-17.8 227.6L-19.5 229.6L-21.6 234.1L-19.5 238.9L-18.2 244.2L-18.6 250.1L-17.8 253.4L-9.4 261.4L-0.9 263.4L3.3 262.6L7.5 256.9L11.7 251.7L15.9 247.1L20.2 244.2L24.4 240.2L28.6 238.9L32.8 237.1L41.2 237.6L49.7 237.6L58.1 235.9L62.3 235.2L64.8 236.9L66.5 234.5L70.7 231.8L75.0 229.2L79.2 228.6L80.9 230.3L83.4 231.6L87.6 232.2L90.1 232.5L91.8 234.3L93.5 235.9L96.0 236.7L97.7 235.2L100.2 232.5L104.5 230.1L108.7 230.3L112.9 228.6L117.1 228.2L121.3 229.6L125.5 228.6L129.8 229.6L134.0 230.3L138.2 229.2L142.4 229.0L146.6 228.6L150.8 230.1L155.0 230.7L159.3 233.6L163.5 235.2L167.7 237.6L171.9 239.6L176.3 240.9L175.7 244.2L175.3 247.1L172.7 251.7L170.6 256.9L171.1 260.6L173.3 261.8L176.1 260.6L184.5 262.6L184.5 305.5L-119.0 305.5ZM194.7 79.8L197.6 78.0L199.7 78.8L198.5 76.7L196.4 74.0L198.9 71.2L204.4 66.7L208.2 68.0L214.1 69.7L217.4 70.7L221.6 72.6L224.2 71.2L226.7 69.7L230.9 71.2L234.3 70.5L239.3 74.0L239.3 75.1L243.6 74.9L245.2 73.3L248.6 74.7L253.7 75.1L255.4 74.0L255.8 71.2L255.1 67.4L256.6 65.1L258.3 68.7L259.6 71.9L260.4 73.5L262.1 75.8L263.4 74.7L264.2 70.7L267.2 70.5L267.8 73.5L267.2 76.9L265.1 78.6L263.4 78.6L263.8 81.0L262.1 83.0L260.0 83.9L258.3 86.2L257.1 88.5L256.5 90.2L256.6 92.3L258.3 95.0L260.4 95.0L264.6 97.6L266.9 97.9L267.2 100.9L268.4 103.3L269.7 103.0L269.9 100.9L269.3 98.5L271.4 97.0L271.8 95.0L270.1 92.3L270.5 88.8L271.0 86.0L274.2 86.0L277.3 88.5L277.7 91.8L279.0 93.0L281.1 91.0L281.9 89.7L284.0 94.3L285.7 97.3L287.8 98.8L289.1 101.6L289.3 103.0L288.7 103.0L286.6 104.6L285.7 104.7L282.3 104.6L280.2 104.7L278.1 106.7L276.4 108.9L277.7 108.2L279.8 106.3L282.1 106.5L281.5 107.8L281.8 109.4L282.8 110.0L284.5 110.4L285.7 109.4L285.0 110.6L282.8 111.8L281.1 113.0L280.5 112.1L281.9 110.9L279.8 111.2L278.1 112.4L276.9 113.2L276.7 114.7L277.3 115.1L276.0 115.4L273.9 116.3L273.7 117.5L272.6 118.6L272.2 120.2L272.5 121.7L271.0 123.1L269.3 124.3L268.0 125.3L267.7 126.8L268.4 129.0L268.8 131.1L268.4 131.8L267.8 131.8L267.3 130.9L266.6 129.4L266.5 128.0L265.5 127.3L264.2 127.5L262.5 126.9L260.8 127.1L261.0 128.0L259.6 127.9L257.2 127.6L256.2 128.0L254.4 129.5L254.2 131.3L253.8 134.3L254.5 136.1L255.4 137.5L256.6 138.2L258.7 137.8L259.8 137.0L260.1 135.7L262.1 135.2L263.0 135.2L262.5 137.0L261.9 138.4L261.4 140.1L263.8 140.3L266.1 141.0L265.7 143.2L265.8 144.6L267.2 146.2L268.0 146.4L269.3 145.8L270.5 145.9L271.1 146.6L270.6 147.6L270.3 146.9L269.3 146.3L268.6 147.6L267.4 147.3L266.3 146.8L265.7 146.4L264.6 145.3L264.0 144.6L262.5 142.7L260.8 142.4L259.2 141.9L257.1 140.0L254.9 140.4L252.2 139.4L249.0 138.1L247.4 136.2L247.4 135.2L246.5 133.6L244.2 131.4L243.1 129.7L241.5 127.8L240.9 126.1L239.5 125.6L239.6 127.3L241.3 129.7L242.7 132.0L244.0 133.7L243.4 133.9L241.7 132.0L240.0 129.9L239.3 129.2L240.0 128.6L238.5 126.8L237.6 124.8L236.4 123.3L234.6 122.8L233.5 120.6L233.0 119.3L231.9 117.2L231.4 116.5L231.6 113.6L231.8 109.8L231.2 107.0L233.0 108.2L232.6 106.3L230.9 105.0L228.8 103.7L228.4 101.6L226.4 98.8L225.3 97.3L223.8 94.3L222.1 92.7L220.4 92.2L218.5 90.5L215.3 90.2L213.2 88.8L211.1 90.2L209.8 91.4L208.4 91.4L209.0 88.5L209.9 88.1L208.2 89.3L206.9 91.4L206.2 93.1L204.4 95.0L202.7 96.6L200.6 97.8L198.9 98.3L197.4 98.6L199.3 97.2L201.0 96.4L203.1 94.3L203.8 92.3L202.4 92.5L199.7 92.3L199.7 90.2L197.6 89.3L196.8 87.6L196.4 86.3L197.4 84.9L200.6 83.8L200.6 82.0L198.9 82.0L196.1 81.8ZM299.2 90.5L297.5 89.0L295.4 87.9L294.1 85.8L292.9 82.6L291.2 78.0L291.2 74.7L293.3 71.2L290.4 69.2L290.1 64.8L289.1 60.5L287.4 54.9L284.9 52.5L280.7 52.5L278.1 51.8L276.4 47.0L274.8 43.7L279.0 37.1L281.5 32.6L284.0 28.2L289.9 23.4L298.4 20.2L308.5 14.5L315.2 18.8L318.6 25.3L326.2 28.2L322.0 36.1L319.9 42.9L320.7 48.9L319.4 54.2L320.3 58.4L317.8 62.0L317.3 64.8L317.8 68.7L315.2 70.0L316.5 71.2L314.4 73.5L311.0 74.5L308.5 76.9L305.9 79.4L303.8 79.8L302.6 81.0L301.7 83.9L300.5 86.7L300.0 89.3ZM315.8 80.0L317.8 78.2L321.1 78.6L322.8 78.0L324.0 80.0L324.8 81.0L323.7 82.4L320.7 84.1L319.0 83.8L317.2 83.4L317.8 82.2L316.1 81.2L317.8 80.2ZM271.1 146.6L271.6 147.0L272.6 144.8L273.2 144.4L274.8 144.0L276.0 143.3L275.9 144.5L277.3 143.6L278.7 144.6L280.7 144.8L281.9 145.2L284.0 144.7L284.9 145.8L285.7 146.6L287.0 147.9L288.2 148.7L289.9 148.8L292.0 149.4L292.9 150.2L294.1 152.3L294.1 153.8L295.4 154.2L296.7 154.4L298.8 155.9L301.3 156.2L303.4 156.8L304.9 157.9L306.5 158.3L307.0 160.1L306.6 161.8L305.1 163.6L303.8 164.9L303.4 167.0L303.3 169.2L302.6 171.3L301.7 172.8L300.9 173.7L298.8 173.9L297.1 174.7L295.6 176.2L295.3 177.9L294.6 179.7L293.3 181.3L292.2 182.6L291.2 184.3L289.9 185.2L288.2 184.9L287.1 184.3L288.0 186.4L288.5 186.9L287.7 188.5L286.6 189.2L284.0 189.6L283.8 191.5L281.5 191.8L282.3 193.5L281.2 194.6L281.1 196.4L279.4 197.8L280.7 199.4L280.7 200.3L279.2 202.6L278.1 203.9L278.6 205.8L277.7 206.0L278.7 207.1L281.1 209.3L278.6 210.0L276.4 209.6L274.3 207.4L273.3 205.3L272.6 202.6L272.6 200.0L272.5 198.4L273.9 196.4L273.9 194.6L274.8 192.9L274.2 191.8L274.3 190.1L274.3 187.6L274.9 185.9L275.9 183.8L276.0 180.3L276.4 177.5L276.9 175.6L277.0 174.0L277.1 171.0L276.9 169.5L276.0 168.6L274.3 167.7L272.6 166.6L272.0 165.5L271.2 164.0L270.1 161.8L269.1 159.7L268.0 158.9L267.8 157.6L268.6 156.6L268.9 155.9L268.0 155.7L268.2 154.6L268.9 153.4L269.0 153.0L269.9 152.5L271.0 150.6L271.1 149.2L271.0 147.9L270.6 147.6ZM331.3 121.4L331.8 121.3L333.8 122.0L334.6 122.2L336.3 121.3L337.1 120.7L338.8 120.3L340.5 120.4L342.6 120.2L344.6 119.9L345.6 120.2L345.2 120.8L345.4 121.7L344.9 123.0L345.6 123.8L346.8 124.4L349.1 124.9L349.6 126.0L351.5 126.8L352.7 126.9L353.2 125.8L353.2 125.0L354.4 124.4L355.9 124.8L357.4 125.6L359.1 126.0L360.7 126.4L362.4 125.8L363.5 126.1L365.1 126.0L365.7 127.8L365.1 129.4L364.4 128.7L363.8 127.4L363.9 128.2L364.5 129.4L365.0 130.6L365.8 132.5L366.4 133.9L367.5 135.2L367.7 137.0L368.8 138.4L369.4 140.5L370.9 141.7L372.1 142.7L372.8 143.2L372.8 144.0L373.8 144.9L375.9 144.3L377.6 144.2L379.5 143.7L379.3 144.9L378.9 146.2L378.0 147.9L376.8 149.8L375.1 151.9L373.0 153.5L371.7 154.6L370.9 155.5L370.0 156.8L369.6 158.0L369.2 159.3L369.6 161.0L370.0 162.7L370.4 164.4L370.6 166.6L369.6 168.2L367.5 169.2L366.2 170.8L366.1 172.8L366.2 174.7L364.1 176.0L364.0 176.5L364.0 178.4L362.9 179.8L361.6 181.6L360.3 183.1L359.1 184.0L358.0 184.3L356.1 184.4L354.8 184.5L353.2 185.1L351.9 184.6L351.7 183.1L351.6 181.8L350.9 180.3L350.2 179.0L349.1 177.5L348.8 175.6L348.5 173.6L347.7 171.9L346.8 169.7L346.2 168.5L346.2 167.0L346.8 165.3L347.7 164.3L347.9 163.1L347.4 161.4L346.7 158.9L346.6 158.4L346.2 157.6L345.6 156.9L344.5 155.7L343.7 154.4L344.3 153.4L344.3 152.8L344.6 151.9L344.5 150.8L344.3 150.4L343.6 149.9L342.2 150.1L341.4 150.2L340.5 149.1L340.1 148.5L338.4 148.4L337.3 148.6L336.1 149.1L334.6 149.7L333.6 149.5L332.1 149.4L330.0 150.1L328.5 149.4L327.2 148.5L325.8 147.5L325.2 146.6L324.8 145.8L323.7 144.6L322.2 143.3L322.1 142.4L321.5 141.3L322.4 140.1L322.6 138.4L322.6 137.2L322.0 135.7L322.8 133.2L323.7 131.1L325.3 129.4L326.6 128.9L327.9 127.8L328.1 126.8L328.0 125.8L328.5 124.8L329.6 123.8L330.6 123.3L331.2 122.1ZM377.9 164.0L378.7 167.0L378.5 167.5L378.0 168.8L377.4 171.0L376.6 173.7L375.9 175.6L374.7 176.0L373.4 175.4L372.8 173.3L373.6 171.0L373.4 169.2L373.8 167.6L375.3 167.2L376.3 166.4L377.2 165.1ZM328.3 118.4L328.9 115.8L328.5 113.6L329.6 112.8L331.7 112.9L333.3 113.0L334.8 113.1L335.3 111.8L335.4 110.0L334.4 108.6L332.5 107.7L332.3 107.0L333.8 106.5L335.0 106.8L334.9 105.4L335.3 105.8L336.5 105.6L337.6 104.7L337.7 103.8L339.3 103.1L339.8 102.0L340.3 100.9L341.4 100.2L342.2 100.1L343.5 99.8L343.7 98.3L343.2 97.3L343.2 95.0L344.6 94.3L345.2 93.9L345.1 95.8L345.4 96.6L344.7 97.8L344.6 98.3L345.4 99.5L346.6 99.1L347.7 98.8L348.4 99.6L349.8 99.1L351.7 98.3L352.1 98.9L353.0 98.9L353.2 98.2L354.0 97.6L354.0 95.3L354.4 94.3L355.3 93.9L355.9 95.0L356.5 94.9L356.9 93.6L356.8 93.0L356.1 92.3L356.1 91.5L357.1 91.0L359.1 91.0L359.9 91.0L361.8 90.4L360.5 89.3L358.2 89.5L357.3 90.0L355.7 90.5L354.4 89.3L354.3 87.6L354.3 85.3L355.3 83.9L357.0 81.6L357.7 80.8L357.0 79.6L355.0 79.6L354.3 81.6L353.4 83.6L351.9 85.4L350.9 87.2L350.8 89.0L351.9 89.8L352.1 90.9L351.6 91.4L350.4 93.8L350.1 95.5L349.5 96.4L348.4 97.3L347.3 97.5L347.1 96.6L346.8 95.2L346.3 93.9L345.7 91.8L345.2 91.4L345.3 90.4L344.6 91.8L343.2 93.3L342.2 93.5L341.1 92.2L340.7 90.2L340.5 88.5L340.6 86.7L341.8 85.3L343.5 83.9L345.1 83.4L344.7 82.6L346.4 80.4L347.1 78.4L348.5 75.8L349.4 74.0L350.6 72.4L352.3 70.5L354.4 69.5L356.1 68.2L358.0 67.2L359.9 67.4L361.6 68.7L362.4 69.2L361.6 70.7L363.7 70.5L364.5 71.4L366.6 72.1L368.8 74.0L370.9 76.5L371.1 78.4L370.0 78.8L368.3 78.8L365.8 77.7L364.1 77.3L363.7 76.7L365.0 79.0L365.8 82.0L367.5 83.0L367.1 83.2L368.3 82.4L370.0 81.8L370.4 82.0L370.0 80.0L371.7 78.2L373.4 78.6L373.6 75.8L373.0 73.5L375.1 74.2L375.5 77.3L376.8 75.6L379.3 73.5L381.8 74.0L384.4 73.3L386.9 72.4L387.3 70.5L390.3 71.7L391.9 72.4L393.2 73.5L394.0 74.0L394.5 72.4L392.8 70.7L392.8 67.4L394.0 63.4L395.3 62.0L397.4 62.8L397.7 67.4L397.5 71.2L398.1 74.7L397.4 77.7L398.3 77.1L398.9 73.5L398.3 70.0L399.1 62.6L402.1 64.0L404.2 64.0L405.9 66.1L406.3 68.7L406.7 65.3L404.6 60.5L408.8 59.6L409.6 55.9L413.9 53.2L418.9 51.4L424.0 46.2L425.7 47.7L427.3 50.0L430.7 50.7L432.4 53.5L431.6 59.0L429.0 59.3L432.0 60.5L435.8 60.5L440.0 59.9L443.4 60.5L445.1 62.6L445.5 67.4L447.6 66.1L450.1 65.9L452.6 66.1L454.3 63.1L455.2 62.6L459.4 63.7L462.8 65.9L464.4 67.7L468.7 67.4L471.2 69.5L471.6 70.9L474.6 70.7L477.9 70.0L479.6 72.4L480.0 70.0L482.1 70.2L484.7 70.7L488.0 72.6L490.6 74.2L492.3 76.0L494.8 76.9L496.7 78.8L495.6 80.0L494.0 82.4L491.8 81.4L489.7 80.0L488.9 78.6L488.0 81.0L486.8 81.8L485.9 81.6L487.2 84.9L487.6 86.2L485.5 85.8L483.0 87.1L481.3 88.5L479.9 90.2L477.1 89.7L475.4 90.2L474.1 90.5L473.7 92.7L472.9 93.5L473.3 94.3L473.9 96.3L472.7 98.0L471.2 99.5L471.0 100.6L469.9 101.1L469.5 102.6L468.4 103.7L467.8 101.6L467.5 98.8L467.6 95.8L468.7 93.8L470.8 91.0L472.5 89.3L473.7 87.6L475.0 85.8L472.9 87.4L471.2 87.1L468.7 87.6L467.0 91.0L463.6 91.0L461.5 91.4L459.0 91.4L456.9 91.4L454.3 93.9L452.6 96.1L450.5 98.5L451.8 99.5L452.6 99.8L453.9 99.2L455.4 100.5L454.9 102.7L454.7 105.0L454.6 106.9L453.1 109.4L451.4 111.2L450.1 113.0L448.4 113.8L447.6 113.3L446.5 114.3L445.7 115.3L445.6 116.1L443.9 117.2L443.8 117.8L444.6 118.9L445.4 120.2L445.4 121.7L445.1 122.2L444.0 122.6L442.9 122.9L442.9 121.5L443.1 120.2L442.7 119.4L441.9 119.3L441.4 118.9L441.9 117.6L441.2 116.9L439.6 117.5L438.6 118.3L438.9 117.5L439.2 116.4L438.3 116.0L437.0 117.2L435.8 117.8L435.5 118.6L436.5 119.3L436.8 120.0L438.1 119.3L439.6 119.8L439.4 120.3L437.9 121.1L436.9 122.3L437.7 123.1L438.2 124.6L439.0 125.5L439.1 126.4L438.1 127.0L439.2 127.5L438.9 128.7L438.1 129.4L437.2 131.1L436.6 131.8L435.9 132.6L434.9 133.4L434.1 134.0L432.7 134.5L432.0 134.6L430.7 135.1L429.5 135.5L429.3 136.3L428.9 135.3L427.8 135.1L426.9 135.4L426.3 136.0L425.5 137.5L426.1 138.6L427.1 139.7L427.6 140.1L428.2 141.4L428.5 142.9L428.2 144.0L426.9 145.0L426.3 145.6L425.0 146.5L424.7 145.5L424.4 145.0L423.6 144.8L423.0 143.8L422.3 143.3L421.4 143.0L421.4 142.4L420.9 142.3L420.6 142.7L420.4 143.8L419.9 145.1L420.0 145.9L420.6 146.6L420.9 147.7L421.9 148.1L422.7 148.7L423.4 149.6L423.6 150.4L423.5 151.4L424.1 152.6L423.6 152.7L422.5 151.9L421.7 151.3L421.0 149.7L420.9 148.7L420.4 148.1L419.8 147.2L419.2 147.0L419.3 145.5L419.5 144.5L419.3 143.2L419.1 141.9L418.7 140.6L418.7 139.7L418.1 139.3L417.4 139.7L416.6 140.3L415.8 140.1L416.0 138.8L415.7 137.7L415.1 136.8L414.1 135.7L413.7 134.5L412.6 134.8L411.3 135.1L409.6 135.2L409.5 136.1L409.1 136.7L408.0 137.3L406.7 138.5L405.6 139.6L404.6 140.3L403.9 141.0L403.9 142.7L403.6 144.0L403.6 145.1L402.9 145.9L402.2 146.4L401.6 146.9L400.8 146.2L400.4 144.9L399.7 143.6L399.2 142.3L398.9 141.0L398.2 139.7L397.8 137.6L397.6 136.1L397.5 135.2L397.4 134.6L397.0 135.5L396.0 135.9L394.6 134.6L395.5 133.9L394.3 133.7L393.2 133.1L392.8 132.2L392.4 131.6L390.7 131.8L388.4 131.9L386.5 131.6L384.8 131.4L384.4 130.3L383.8 130.0L382.2 130.5L381.0 130.1L379.7 129.3L379.1 128.2L378.5 127.1L377.4 127.0L376.8 127.8L377.2 128.9L377.9 129.9L378.6 130.5L378.6 131.5L379.1 132.2L379.5 131.0L379.8 131.8L379.7 132.5L380.6 132.8L382.1 132.7L382.9 131.7L383.6 131.0L383.8 132.0L384.4 132.9L385.7 133.3L386.7 134.3L385.9 135.9L385.0 137.5L384.4 137.7L383.1 138.5L381.8 139.3L380.3 140.1L378.5 141.1L377.2 141.9L375.1 142.6L374.2 142.9L373.0 143.0L372.7 142.3L372.4 141.0L372.3 139.7L371.0 137.9L370.0 136.3L369.3 135.2L368.8 133.4L367.7 132.2L367.3 131.1L366.2 129.7L365.8 129.0L365.7 127.8L365.1 126.0L365.4 125.7L365.8 124.5L366.2 123.4L366.6 122.1L366.6 121.2L366.8 120.5L366.1 120.6L365.0 120.9L363.7 121.1L362.1 120.4L361.2 121.0L359.9 120.5L359.3 119.7L358.6 118.6L359.1 117.5L358.4 116.9L359.5 116.4L360.7 116.2L360.8 115.6L362.4 115.6L364.1 114.7L365.8 114.7L367.1 115.5L368.3 115.8L370.0 115.8L371.4 115.2L371.3 113.9L370.0 113.0L368.3 111.8L367.5 111.0L368.3 109.4L369.4 108.6L367.9 108.8L366.2 109.4L365.8 110.0L366.2 110.9L367.0 111.1L365.8 111.5L364.7 111.9L363.8 110.7L364.6 109.9L363.3 109.4L362.3 109.4L361.3 110.9L360.5 112.2L359.9 113.2L359.7 114.1L360.1 115.2L360.7 115.6L359.9 115.8L359.1 116.2L358.4 116.6L358.2 116.0L357.0 116.0L356.4 116.7L355.6 116.4L355.4 117.5L355.9 118.0L356.5 118.9L356.5 119.4L355.9 119.2L355.7 119.8L355.7 120.7L355.3 120.8L354.6 120.4L354.2 119.3L354.3 118.8L353.8 118.1L353.3 117.4L352.7 116.5L352.7 115.3L352.5 114.7L351.9 114.3L350.6 113.6L349.4 112.5L348.8 111.2L348.3 110.9L347.8 111.3L347.8 110.6L347.8 110.4L346.8 110.7L346.7 112.1L347.7 112.9L348.3 114.1L349.6 114.8L349.8 115.4L350.6 115.7L351.9 116.7L351.8 117.2L350.6 116.4L350.3 117.3L350.7 118.0L350.2 118.8L349.5 119.1L349.8 118.4L349.8 117.5L349.2 116.8L348.5 116.2L347.3 115.5L346.6 114.9L345.6 114.3L345.2 113.6L344.9 112.5L343.8 111.9L342.6 112.6L341.5 113.5L340.3 113.1L339.3 113.2L338.9 114.1L339.0 114.8L338.2 115.4L337.0 116.1L336.0 117.5L336.5 118.3L335.7 119.4L334.6 120.4L332.6 120.5L331.7 121.1L331.1 120.7L330.5 120.0L329.6 120.2L328.8 120.2L328.9 118.7ZM331.5 104.8L332.8 103.4L333.8 103.4L334.0 103.0L333.6 103.1L332.8 102.8L331.9 102.6L332.8 101.9L332.8 101.2L332.4 101.2L332.6 100.5L333.7 100.5L333.8 99.6L333.4 98.8L333.3 98.2L332.2 98.5L332.3 97.3L331.6 97.5L331.6 96.1L331.1 95.5L331.4 94.3L331.9 93.0L332.1 92.5L333.7 92.5L332.9 93.9L334.6 93.9L334.6 94.9L334.0 96.1L333.5 96.6L334.6 96.9L335.0 98.0L335.3 98.6L336.2 99.4L336.4 100.1L336.6 100.9L337.4 101.1L337.7 101.6L337.3 102.6L336.9 103.0L337.5 103.3L337.1 103.8L336.5 104.1L335.2 104.1L334.2 104.2L333.3 104.5L333.2 104.7L332.8 104.6L332.0 105.0ZM330.9 102.0L331.2 100.5L331.1 99.5L331.7 98.9L331.4 98.5L331.2 97.8L330.1 97.6L329.3 97.9L329.1 98.8L327.9 99.2L328.0 100.4L328.7 100.6L328.3 101.3L327.5 102.2L327.7 102.7L328.3 103.0L329.3 102.6L330.4 102.2ZM455.6 115.4L455.9 116.9L456.0 117.5L455.6 118.8L455.2 120.2L454.8 120.9L455.1 121.5L454.3 122.3L454.1 122.0L453.6 122.2L453.4 122.7L452.8 122.7L451.8 122.7L451.7 122.3L451.6 123.0L450.8 123.8L450.2 123.0L449.3 122.7L448.4 123.0L447.8 123.1L446.7 123.3L447.3 123.7L447.5 124.1L447.4 125.0L447.1 125.9L446.5 126.3L446.1 126.0L446.1 124.8L445.6 124.3L445.7 123.8L446.2 123.7L446.7 123.3L447.2 122.7L448.0 121.9L448.7 121.6L449.5 121.6L450.4 121.5L451.0 121.5L451.0 120.9L451.6 119.9L452.1 119.7L451.8 120.4L452.8 120.0L453.3 119.3L454.2 118.3L454.3 117.3L454.3 116.3L454.6 115.6L455.2 116.0ZM449.8 123.1L449.9 123.5L449.4 124.0L448.8 123.8L448.4 124.6L447.9 124.3L447.9 123.7L448.3 123.3L448.8 123.3ZM454.3 115.4L455.3 114.9L454.6 114.4L455.2 114.3L455.9 114.0L457.0 114.7L458.0 113.6L459.2 113.1L458.8 112.1L458.0 112.4L456.9 111.7L456.0 110.6L455.8 111.0L455.8 112.1L455.4 113.2L454.7 113.2L454.6 113.8L454.2 114.5ZM456.6 98.9L457.1 101.6L457.0 103.7L457.1 105.8L458.3 106.8L456.9 106.0L456.8 108.4L457.3 109.0L457.2 110.0L456.6 109.3L456.0 110.1L456.0 108.2L456.2 106.3L456.0 103.7L455.8 101.6L455.8 100.4ZM438.7 131.7L439.2 132.0L438.8 132.9L438.6 134.0L438.1 134.9L437.6 134.0L437.6 133.3L438.1 132.4ZM429.6 136.5L429.9 136.9L429.5 137.7L428.7 138.2L427.9 137.8L427.9 137.2L428.6 136.7ZM403.7 145.5L404.8 146.5L405.3 147.6L405.2 148.4L404.3 148.8L403.7 148.6L403.6 147.7L403.6 146.9ZM438.0 137.9L439.3 137.9L439.4 139.3L438.8 140.1L438.8 141.0L439.0 141.7L440.0 141.9L440.8 142.7L440.9 143.1L440.2 142.7L439.6 142.3L438.9 142.0L438.1 142.1L438.0 141.6L438.2 141.4L437.6 141.2L437.3 139.9L437.7 139.6L437.8 138.8ZM442.1 145.5L442.8 146.6L443.0 147.6L442.7 148.5L442.3 148.1L442.0 149.1L441.0 148.6L440.8 147.9L440.2 147.5L439.2 148.0L439.4 147.1L440.0 146.6L440.7 146.9L441.4 146.6L442.1 146.2ZM441.1 143.2L441.9 143.2L442.4 144.3L441.9 145.2L441.5 145.2L441.2 144.2ZM439.2 143.7L440.1 144.0L440.4 144.6L440.2 145.9L439.7 145.8L439.5 145.0L439.1 144.9ZM440.8 144.3L440.9 145.2L440.3 145.8L440.5 144.9ZM435.1 146.7L436.2 145.8L437.0 144.8L437.2 144.1L436.8 144.5L436.1 145.3L435.1 146.3ZM437.8 142.3L438.5 142.4L438.7 143.1L438.5 143.4L438.1 142.9ZM428.7 152.1L429.3 152.4L430.2 151.8L431.6 151.1L432.4 150.0L433.3 149.6L434.1 148.7L434.7 148.0L435.5 148.5L435.9 148.9L436.8 149.3L436.2 150.0L435.6 150.3L435.4 150.8L435.8 151.9L436.5 153.0L435.6 153.1L435.4 154.2L434.8 154.9L434.5 155.7L434.3 156.8L433.3 157.2L432.9 156.7L431.6 156.6L430.6 156.8L429.3 156.3L429.1 155.3L428.4 154.2L428.4 153.8L428.2 153.0ZM416.6 149.1L418.5 149.4L419.2 150.3L420.2 151.1L421.0 151.9L421.9 152.3L423.1 153.2L423.6 154.2L424.4 155.1L424.8 155.7L425.7 156.3L425.7 158.0L425.5 158.7L425.1 158.7L424.4 158.6L423.6 157.9L422.5 157.1L421.4 155.9L420.9 154.6L419.9 153.4L419.5 152.4L418.5 151.5L417.7 150.7L416.8 149.7ZM425.0 159.5L425.7 158.8L426.3 159.0L427.6 159.1L427.9 159.5L429.5 159.6L429.9 159.2L431.3 159.9L432.7 160.4L432.8 161.2L431.6 160.8L429.9 160.8L428.6 160.4L427.3 160.4L426.1 160.1ZM432.9 160.7L433.8 160.7L434.7 160.8L435.4 160.7L436.5 160.8L436.6 161.1L437.5 160.8L439.2 160.8L440.0 160.7L439.8 161.2L438.3 161.3L437.3 161.2L436.5 161.3L434.9 161.4L434.1 161.3L433.4 161.2ZM436.6 161.8L437.6 161.8L438.1 162.3L437.5 162.5L436.8 162.2ZM440.4 162.5L441.3 161.6L442.1 161.1L443.4 160.9L443.6 161.0L442.9 161.4L441.7 162.0L440.8 162.5ZM437.3 153.1L438.2 152.7L440.0 153.0L441.5 152.5L441.9 152.6L441.3 153.5L440.0 153.5L438.3 153.4L437.6 153.5L437.5 154.5L437.9 154.6L438.7 154.6L440.2 154.5L440.3 154.6L439.4 155.2L438.7 155.5L439.0 156.2L439.6 156.8L440.2 157.6L439.8 157.9L439.6 157.3L439.2 157.9L438.7 157.3L438.2 156.3L437.8 156.3L437.8 157.6L437.7 158.4L437.0 158.5L437.0 158.1L437.0 156.8L436.5 156.1L436.9 155.1L437.3 154.0ZM443.8 152.0L444.2 152.5L444.8 152.5L444.2 153.1L444.8 153.5L444.1 153.6L444.4 154.5L444.0 154.1L443.8 153.1ZM444.1 156.5L445.1 156.2L446.6 156.4L446.4 156.9L445.1 156.8L444.2 156.8ZM442.5 156.5L443.4 156.4L443.5 156.8L442.9 157.1L442.5 156.8ZM446.7 154.5L448.0 154.1L449.3 154.5L449.4 155.1L449.5 156.2L450.5 156.6L451.8 155.5L452.5 155.1L453.5 155.5L454.9 156.0L456.9 156.7L458.1 157.0L459.2 158.2L460.2 158.9L460.9 159.5L460.2 159.5L461.1 160.7L462.3 161.8L463.4 162.5L462.3 162.6L461.1 162.4L460.3 161.8L459.4 160.7L458.1 160.3L457.3 160.8L456.9 161.6L455.2 161.5L453.9 160.7L452.6 160.9L453.1 159.9L453.2 159.3L452.6 158.4L451.4 157.8L450.1 157.4L448.8 157.0L448.3 157.2L447.6 156.2L448.8 155.9L447.8 155.7L446.7 155.0ZM461.3 158.5L462.8 158.4L464.0 158.0L464.6 157.3L464.8 158.0L463.6 158.9L462.3 159.1L461.3 158.8ZM463.4 156.0L464.4 156.5L465.3 157.4L465.1 157.8L464.3 156.8L463.3 156.2ZM467.0 158.4L467.8 159.3L467.4 159.5L466.7 158.7ZM470.8 161.7L471.9 162.1L471.4 162.2L470.9 161.9ZM456.4 162.9L457.3 164.4L457.5 166.0L458.8 166.6L459.4 168.3L459.6 169.9L461.5 171.2L462.2 172.2L463.3 173.5L463.6 174.5L465.3 175.9L465.4 177.8L465.8 179.1L465.3 180.8L464.9 182.6L463.8 184.2L462.9 186.4L462.8 187.9L461.1 188.4L459.6 189.6L458.5 188.8L457.3 189.3L455.6 188.9L454.7 188.5L454.1 187.3L453.8 186.1L453.1 185.9L453.1 185.1L452.6 183.5L452.5 182.9L452.1 184.3L451.8 185.5L451.0 185.1L450.3 184.9L449.4 183.3L448.9 182.5L447.6 182.3L446.7 181.8L445.1 181.9L442.5 182.6L440.8 183.3L440.4 184.2L439.1 184.2L437.5 184.3L435.8 185.3L434.1 185.2L433.3 184.7L433.3 183.9L433.8 182.3L433.3 180.8L432.9 179.2L432.4 177.9L431.8 176.5L431.9 174.7L432.2 173.4L432.5 172.6L433.7 172.4L434.9 171.6L436.3 171.3L437.5 170.9L438.7 170.1L439.3 169.2L439.6 168.3L440.4 168.6L440.8 167.7L441.7 166.8L442.5 165.7L443.4 165.6L444.4 166.4L445.5 166.5L445.7 165.3L446.6 164.3L447.6 164.2L448.0 163.5L449.3 164.0L450.5 164.1L451.6 164.2L451.5 165.3L450.9 165.7L450.5 166.6L451.4 167.4L452.6 168.0L453.7 168.8L454.3 169.0L455.1 168.3L455.6 167.0L455.8 165.3L455.8 164.4L456.2 163.1ZM458.3 191.4L459.8 191.9L461.1 191.5L461.3 192.9L461.1 194.3L460.2 194.6L459.4 194.6L458.8 193.5L458.3 192.0ZM481.9 184.7L482.6 185.3L483.4 186.4L483.7 187.3L484.3 186.9L484.7 188.1L485.9 188.4L486.8 188.2L486.4 189.2L485.5 189.9L485.5 190.7L484.9 191.8L484.1 192.4L483.6 192.1L483.9 191.2L483.8 190.5L482.8 190.0L483.5 189.2L483.7 188.5L483.6 187.7L483.2 186.8L482.4 185.5ZM481.9 191.2L482.2 192.0L483.2 191.8L483.2 192.7L482.7 193.3L482.0 194.4L482.2 195.0L481.1 195.3L480.7 195.7L480.1 197.5L479.2 198.3L478.2 198.3L477.5 197.8L476.7 197.3L477.1 196.4L477.9 195.4L478.8 194.8L479.6 194.0L480.6 193.3L481.0 192.5L481.4 191.5ZM474.6 171.1L475.8 171.9L477.1 173.1L476.7 173.1L475.4 172.4L474.6 171.5ZM485.8 168.7L486.9 168.9L486.8 169.4L485.8 169.3ZM487.0 168.0L488.0 167.6L487.9 168.2L487.0 168.3ZM379.7 65.3L381.0 61.4L382.7 57.5L384.4 54.2L387.7 51.4L391.9 48.9L394.5 49.3L391.1 52.5L387.7 54.9L386.0 58.1L384.8 62.0L384.4 66.1L385.2 68.2L382.7 68.5L381.0 67.4ZM345.2 41.2L345.6 37.6L348.1 37.1L349.8 36.1L351.5 37.6L354.0 41.6L352.3 45.0L350.6 50.4L348.9 48.1L347.7 45.0L346.0 42.9ZM351.5 35.1L354.8 33.6L359.1 35.6L357.4 39.4L353.2 38.5ZM354.0 47.0L355.7 44.2L357.0 45.8L355.7 47.7ZM375.1 33.1L377.6 31.5L379.3 33.1L376.8 34.6ZM381.0 35.1L384.4 33.1L386.9 34.1L384.4 36.1ZM382.7 31.0L385.2 27.7L388.6 29.9L391.1 32.1L387.7 33.1ZM416.4 40.8L418.1 35.1L420.6 36.1L423.1 39.4L421.4 43.7L418.1 42.5ZM420.6 45.0L424.8 41.6L425.7 44.2L421.4 45.8ZM413.0 36.1L415.5 29.9L418.1 31.0L417.2 34.1L413.9 37.6ZM451.8 54.9L454.3 51.8L458.5 53.9L462.8 55.2L459.4 56.8L456.0 56.5L452.6 56.8ZM454.3 60.8L456.9 59.3L457.3 61.4L455.2 61.7ZM459.4 54.2L463.2 54.5L463.6 56.5L460.2 56.2ZM486.8 66.9L488.9 66.1L490.2 67.4L488.5 68.0L487.0 67.7ZM377.0 71.7L378.0 71.2L378.6 72.4L377.6 73.1ZM385.6 69.2L386.9 69.0L387.1 70.5L386.0 70.7ZM286.3 108.1L287.0 106.9L287.4 105.6L288.2 103.9L289.4 102.8L289.1 104.3L288.7 105.0L289.5 105.1L290.8 105.6L291.2 106.7L291.9 108.2L291.4 109.3L290.6 108.9L289.5 108.9L289.3 108.1L287.8 108.1ZM264.7 134.9L266.3 133.9L266.8 133.7L268.4 133.8L269.7 134.3L271.0 135.0L272.2 135.5L273.7 136.4L272.6 136.7L270.8 136.7L271.2 136.0L270.1 135.3L268.4 135.0L267.3 134.6L266.5 134.3L265.9 134.6ZM273.6 138.0L274.8 137.8L275.3 137.8L274.9 137.2L274.4 136.9L275.6 136.7L276.9 136.8L277.4 136.9L278.0 137.2L278.6 137.8L278.1 138.0L277.3 138.1L276.3 138.2L275.9 138.6L274.9 138.3ZM270.3 138.0L271.4 137.9L272.1 138.4L271.4 138.5L270.3 138.3ZM279.6 137.9L280.9 138.0L280.8 138.4L279.6 138.4ZM284.2 144.7L284.9 144.6L284.9 145.2L284.2 145.2ZM270.3 130.4L271.2 130.5L271.2 130.9L270.5 131.8L270.3 132.5L270.7 132.7L270.8 131.8ZM228.1 103.9L229.2 104.2L230.7 105.0L231.9 106.0L232.4 107.0L231.3 106.9L230.2 106.3L229.4 105.2L228.4 104.6ZM224.2 99.2L225.2 99.5L225.7 101.9L225.0 101.2L224.3 100.2ZM206.0 94.1L207.7 93.5L208.0 94.4L206.6 95.3ZM221.6 93.5L223.3 93.5L224.6 96.6L225.4 98.0L224.2 98.3L222.9 95.8ZM191.5 83.9L193.8 84.3L194.0 84.9L191.7 84.5ZM195.3 89.8L196.5 89.7L196.6 90.4L195.5 90.5ZM282.0 105.2L284.0 105.9L284.2 106.1L282.8 105.9ZM282.1 108.9L284.0 109.5L283.6 110.0L282.3 109.5ZM284.7 204.3L286.1 204.3L287.6 204.8L287.0 205.6L285.3 205.6L284.7 205.0ZM304.3 208.1L305.9 208.5L306.1 209.3L304.7 208.7ZM273.7 192.7L274.4 192.8L274.3 194.5L273.6 194.3ZM204.8 136.4L205.6 136.8L205.1 137.5L204.8 136.9ZM344.2 113.6L344.3 114.7L344.1 115.4L343.6 114.8L343.6 114.0ZM344.1 115.6L344.6 116.4L344.4 117.8L343.8 118.1L343.4 117.7L343.4 116.3ZM346.8 119.1L347.6 118.9L349.5 118.8L349.1 119.9L349.0 120.5L348.4 120.3L346.9 119.5ZM356.1 121.6L357.0 121.9L358.5 122.0L358.4 122.3L357.1 122.4L356.1 122.1ZM363.5 122.2L364.5 121.9L365.5 121.5L365.0 122.3L364.1 122.7L363.6 122.5ZM338.3 117.4L339.0 117.1L339.2 117.4L338.8 117.7ZM355.7 118.1L356.7 118.5L357.0 119.1L356.5 118.9ZM359.7 121.0L360.1 120.8L359.9 121.3ZM358.1 117.7L358.7 117.7L358.5 118.0ZM345.7 96.9L346.9 96.4L346.8 97.8L345.7 97.8ZM344.6 97.3L345.4 97.3L345.3 98.0L344.7 97.9ZM351.6 93.6L352.4 93.6L352.1 94.7L351.6 95.0ZM350.1 96.3L350.7 94.6L350.5 95.6ZM354.7 92.7L355.9 92.5L355.5 93.1L354.8 93.5ZM354.9 91.8L355.7 91.8L355.4 92.3ZM330.1 86.2L330.9 86.2L330.7 87.6L330.2 87.1ZM335.0 89.2L335.5 88.8L335.4 90.4L335.0 90.0ZM330.2 93.0L331.1 92.8L330.6 93.9L330.1 94.9L330.0 94.1ZM330.7 94.3L331.2 94.1L331.5 94.7L331.0 95.0ZM322.1 128.8L322.7 128.6L322.5 129.2L323.3 129.0L323.3 129.4L323.0 129.5ZM324.1 128.5L324.7 128.5L324.2 129.2ZM381.2 143.1L382.2 143.1L382.1 143.3L381.3 143.3ZM369.3 158.6L369.7 158.9L369.5 159.3ZM382.8 171.8L383.3 171.9L383.1 172.3ZM384.6 171.0L385.0 171.2L384.8 171.5ZM394.2 200.9L395.7 201.3L395.5 202.2L394.5 202.1ZM372.7 163.5L373.0 163.8L372.8 164.0ZM414.5 142.3L414.8 143.2L414.5 144.0L414.3 143.2ZM446.2 126.9L446.5 127.0L446.3 127.1ZM444.0 130.9L444.5 130.3L444.2 130.8ZM442.7 123.9L443.3 123.8L443.0 124.1ZM459.4 111.8L461.7 110.5L460.7 111.5ZM462.8 109.8L464.4 108.6L466.1 106.3L467.4 104.6L466.1 106.5L464.0 109.3ZM193.8 100.6L196.2 99.5L195.1 100.5ZM186.2 102.6L189.6 102.0L191.3 101.8L189.6 102.3ZM474.0 92.7L474.8 91.5L475.2 92.2ZM452.6 98.3L453.1 97.8L452.2 97.9ZM425.1 155.2L425.8 155.1L426.3 155.9L426.3 156.3L425.5 155.7ZM427.0 156.0L427.6 156.2L427.2 156.5ZM418.2 152.6L418.8 153.0L418.7 153.3ZM419.4 154.6L420.0 155.2L419.8 155.3ZM431.3 159.6L432.4 159.6L432.3 159.9L431.4 159.9ZM281.5 86.9L280.2 86.7L278.3 85.8L277.3 85.3L276.0 84.7L274.8 82.6L273.5 82.2L272.2 82.4L270.7 82.4L270.1 81.6L271.4 80.4L273.1 80.2L274.3 80.0L274.2 78.0L275.2 75.8L274.8 74.0L273.1 72.8L271.8 71.2L270.1 69.7L267.6 69.7L265.1 70.0L263.8 69.5L261.7 68.7L260.8 66.1L260.4 63.4L260.4 59.9L263.8 59.6L265.1 60.8L265.5 63.4L264.2 66.1L265.1 66.7L266.7 63.4L268.0 59.9L270.5 62.0L270.5 59.6L272.2 62.0L273.5 64.8L276.0 66.7L278.1 68.5L279.4 70.5L279.8 72.8L281.9 74.7L283.6 76.5L284.6 77.7L284.0 79.8L282.3 80.6L282.8 81.2L280.2 78.2L279.0 77.7L280.7 81.2L281.5 82.0L281.9 84.3L281.9 85.1L278.6 83.5L280.2 85.3ZM263.0 80.4L264.6 79.0L265.9 79.2L267.6 82.0L268.7 83.4L267.6 84.1L265.9 83.0L264.2 83.9L262.8 83.6L263.8 81.6ZM266.3 85.1L267.2 85.1L268.4 86.0L267.2 86.7ZM268.6 86.2L269.3 86.0L269.4 87.4L268.9 87.4ZM271.0 74.2L272.6 74.5L272.8 76.2L271.4 76.2ZM237.2 68.5L240.2 71.7L240.6 73.3L244.4 73.1L246.9 72.6L250.3 72.8L251.2 71.2L249.9 69.5L251.6 68.2L249.5 66.1L248.2 62.0L246.9 60.8L245.2 62.8L245.7 65.3L244.0 62.8L242.7 62.0L239.8 61.4L236.8 62.8L236.0 65.6L237.2 66.4L238.9 68.5ZM230.5 64.8L232.6 67.2L234.7 66.1L235.6 63.4L237.2 60.5L238.9 59.6L237.7 58.1L234.3 57.5L231.3 58.4L231.1 62.0ZM250.3 66.1L252.8 66.1L254.5 63.4L253.7 59.6L251.6 59.3L249.9 62.0ZM255.8 64.8L257.5 64.5L260.0 62.0L260.0 59.0L257.9 58.4L255.8 59.0L255.4 62.0ZM252.4 71.2L254.1 70.5L255.8 71.9L255.4 73.5L253.3 72.8ZM237.7 54.9L241.0 57.8L244.8 56.2L246.9 55.9L246.9 52.5L244.4 51.4L244.0 54.2L241.9 54.2L240.2 51.4L237.7 52.5ZM232.6 51.8L236.0 53.5L237.7 50.7L236.0 47.7L233.4 49.6ZM248.6 54.2L253.7 55.9L254.1 52.5L252.0 50.0L248.6 51.4ZM254.9 54.2L257.1 53.9L257.5 55.9L255.8 56.8ZM255.4 49.6L259.6 50.0L261.3 53.9L265.5 53.2L268.9 54.2L268.9 56.8L264.6 57.5L258.7 56.8L258.3 53.2L256.2 52.5ZM260.4 50.7L264.6 51.4L268.0 51.8L270.5 48.9L272.2 45.0L273.1 40.8L276.4 37.6L280.7 32.1L284.0 25.3L282.3 20.9L275.6 18.1L268.9 18.8L262.1 22.2L259.6 28.2L263.0 33.6L264.6 38.5L263.0 42.9L261.3 47.0ZM255.4 36.1L257.9 29.4L260.4 33.6L262.1 40.8L263.0 43.7L259.6 43.7L257.1 39.9ZM247.8 45.0L252.0 45.8L253.7 41.6L249.5 39.4L246.9 41.6ZM184.5 262.6L193.0 264.7L201.4 262.6L209.8 258.7L218.3 253.4L226.7 250.1L235.1 248.6L243.6 250.1L250.3 244.2L254.5 243.4L260.4 245.6L268.9 247.1L273.1 243.6L275.6 237.6L277.3 234.1L279.8 229.6L282.3 226.6L284.9 224.6L288.2 223.3L287.8 225.2L285.7 227.6L284.0 229.6L281.9 234.1L284.0 238.9L285.3 244.2L284.9 250.1L285.7 253.4L294.1 261.4L302.6 263.4L306.8 262.6L311.0 256.9L315.2 251.7L319.4 247.1L323.7 244.2L327.9 240.2L332.1 238.9L336.3 237.1L344.7 237.6L353.2 237.6L361.6 235.9L365.8 235.2L368.3 236.9L370.0 234.5L374.2 231.8L378.5 229.2L382.7 228.6L384.4 230.3L386.9 231.6L391.1 232.2L393.6 232.5L395.3 234.3L397.0 235.9L399.5 236.7L401.2 235.2L403.7 232.5L408.0 230.1L412.2 230.3L416.4 228.6L420.6 228.2L424.8 229.6L429.0 228.6L433.3 229.6L437.5 230.3L441.7 229.2L445.9 229.0L450.1 228.6L454.3 230.1L458.5 230.7L462.8 233.6L467.0 235.2L471.2 237.6L475.4 239.6L479.8 240.9L479.2 244.2L478.8 247.1L476.2 251.7L474.1 256.9L474.6 260.6L476.8 261.8L479.6 260.6L488.0 262.6L488.0 305.5L184.5 305.5ZM275.6 234.8L277.7 236.4L278.6 240.2L277.3 244.2L273.9 243.6L273.1 240.2L274.8 236.4ZM284.5 222.0L287.0 220.7L287.6 221.1L285.3 222.5ZM297.5 218.4L298.8 218.4L298.4 218.8ZM498.2 79.8L501.1 78.0L503.2 78.8L502.0 76.7L499.9 74.0L502.4 71.2L507.9 66.7L511.7 68.0L517.6 69.7L520.9 70.7L525.1 72.6L527.7 71.2L530.2 69.7L534.4 71.2L537.8 70.5L542.8 74.0L542.8 75.1L547.1 74.9L548.8 73.3L552.1 74.7L557.2 75.1L558.9 74.0L559.3 71.2L558.6 67.4L560.1 65.1L561.8 68.7L563.1 71.9L563.9 73.5L565.6 75.8L566.9 74.7L567.7 70.7L570.7 70.5L571.3 73.5L570.7 76.9L568.6 78.6L566.9 78.6L567.3 81.0L565.6 83.0L563.5 83.9L561.8 86.2L560.6 88.5L560.0 90.2L560.1 92.3L561.8 95.0L563.9 95.0L568.1 97.6L570.4 97.9L570.7 100.9L571.9 103.3L573.2 103.0L573.4 100.9L572.8 98.5L574.9 97.0L575.3 95.0L573.6 92.3L574.0 88.8L574.5 86.0L577.7 86.0L580.8 88.5L581.2 91.8L582.5 93.0L584.6 91.0L585.4 89.7L587.5 94.3L589.2 97.3L591.3 98.8L592.6 101.6L592.8 103.0L592.2 103.0L590.1 104.6L589.2 104.7L585.8 104.6L583.7 104.7L581.6 106.7L579.9 108.9L581.2 108.2L583.3 106.3L585.6 106.5L585.0 107.8L585.3 109.4L586.3 110.0L588.0 110.4L589.2 109.4L588.5 110.6L586.3 111.8L584.6 113.0L584.0 112.1L585.4 110.9L583.3 111.2L581.6 112.4L580.4 113.2L580.2 114.7L580.8 115.1L579.5 115.4L577.4 116.3L577.2 117.5L576.1 118.6L575.7 120.2L576.0 121.7L574.5 123.1L572.8 124.3L571.5 125.3L571.2 126.8L571.9 129.0L572.3 131.1L571.9 131.8L571.3 131.8L570.8 130.9L570.1 129.4L570.0 128.0L569.0 127.3L567.7 127.5L566.0 126.9L564.3 127.1L564.5 128.0L563.1 127.9L560.7 127.6L559.7 128.0L557.9 129.5L557.7 131.3L557.3 134.3L558.0 136.1L558.9 137.5L560.1 138.2L562.2 137.8L563.3 137.0L563.6 135.7L565.6 135.2L566.5 135.2L566.0 137.0L565.4 138.4L564.9 140.1L567.3 140.3L569.6 141.0L569.2 143.2L569.3 144.6L570.7 146.2L571.5 146.4L572.8 145.8L574.0 145.9L574.6 146.6L574.1 147.6L573.8 146.9L572.8 146.3L572.1 147.6L570.9 147.3L569.8 146.8L569.2 146.4L568.1 145.3L567.5 144.6L566.0 142.7L564.3 142.4L562.7 141.9L560.6 140.0L558.4 140.4L555.7 139.4L552.5 138.1L550.9 136.2L550.9 135.2L550.0 133.6L547.7 131.4L546.6 129.7L545.0 127.8L544.4 126.1L543.0 125.6L543.1 127.3L544.8 129.7L546.2 132.0L547.5 133.7L546.9 133.9L545.2 132.0L543.5 129.9L542.8 129.2L543.5 128.6L542.0 126.8L541.1 124.8L539.9 123.3L538.1 122.8L537.0 120.6L536.5 119.3L535.4 117.2L534.9 116.5L535.1 113.6L535.3 109.8L534.7 107.0L536.5 108.2L536.1 106.3L534.4 105.0L532.3 103.7L531.9 101.6L529.9 98.8L528.8 97.3L527.3 94.3L525.6 92.7L523.9 92.2L522.0 90.5L518.8 90.2L516.7 88.8L514.6 90.2L513.3 91.4L511.9 91.4L512.5 88.5L513.4 88.1L511.7 89.3L510.4 91.4L509.7 93.1L507.9 95.0L506.2 96.6L504.1 97.8L502.4 98.3L500.9 98.6L502.8 97.2L504.5 96.4L506.6 94.3L507.3 92.3L505.9 92.5L503.2 92.3L503.2 90.2L501.1 89.3L500.3 87.6L499.9 86.3L500.9 84.9L504.1 83.8L504.1 82.0L502.4 82.0L499.6 81.8ZM602.7 90.5L601.0 89.0L598.9 87.9L597.6 85.8L596.4 82.6L594.7 78.0L594.7 74.7L596.8 71.2L593.9 69.2L593.6 64.8L592.6 60.5L590.9 54.9L588.4 52.5L584.2 52.5L581.6 51.8L579.9 47.0L578.3 43.7L582.5 37.1L585.0 32.6L587.5 28.2L593.4 23.4L601.9 20.2L612.0 14.5L618.7 18.8L622.1 25.3L629.7 28.2L625.5 36.1L623.4 42.9L624.2 48.9L622.9 54.2L623.8 58.4L621.3 62.0L620.8 64.8L621.3 68.7L618.7 70.0L620.0 71.2L617.9 73.5L614.5 74.5L612.0 76.9L609.4 79.4L607.3 79.8L606.1 81.0L605.2 83.9L604.0 86.7L603.5 89.3ZM619.3 80.0L621.3 78.2L624.6 78.6L626.3 78.0L627.5 80.0L628.3 81.0L627.2 82.4L624.2 84.1L622.5 83.8L620.7 83.4L621.3 82.2L619.6 81.2L621.3 80.2ZM574.6 146.6L575.1 147.0L576.1 144.8L576.7 144.4L578.3 144.0L579.5 143.3L579.4 144.5L580.8 143.6L582.2 144.6L584.2 144.8L585.4 145.2L587.5 144.7L588.4 145.8L589.2 146.6L590.5 147.9L591.7 148.7L593.4 148.8L595.5 149.4L596.4 150.2L597.6 152.3L597.6 153.8L598.9 154.2L600.2 154.4L602.3 155.9L604.8 156.2L606.9 156.8L608.4 157.9L610.0 158.3L610.5 160.1L610.1 161.8L608.6 163.6L607.3 164.9L606.9 167.0L606.8 169.2L606.1 171.3L605.2 172.8L604.4 173.7L602.3 173.9L600.6 174.7L599.1 176.2L598.8 177.9L598.1 179.7L596.8 181.3L595.7 182.6L594.7 184.3L593.4 185.2L591.7 184.9L590.6 184.3L591.5 186.4L592.0 186.9L591.2 188.5L590.1 189.2L587.5 189.6L587.3 191.5L585.0 191.8L585.8 193.5L584.7 194.6L584.6 196.4L582.9 197.8L584.2 199.4L584.2 200.3L582.7 202.6L581.6 203.9L582.1 205.8L581.2 206.0L582.2 207.1L584.6 209.3L582.1 210.0L579.9 209.6L577.8 207.4L576.8 205.3L576.1 202.6L576.1 200.0L576.0 198.4L577.4 196.4L577.4 194.6L578.3 192.9L577.7 191.8L577.8 190.1L577.8 187.6L578.4 185.9L579.4 183.8L579.5 180.3L579.9 177.5L580.4 175.6L580.5 174.0L580.6 171.0L580.4 169.5L579.5 168.6L577.8 167.7L576.1 166.6L575.5 165.5L574.7 164.0L573.6 161.8L572.6 159.7L571.5 158.9L571.3 157.6L572.1 156.6L572.4 155.9L571.5 155.7L571.7 154.6L572.4 153.4L572.5 153.0L573.4 152.5L574.5 150.6L574.6 149.2L574.5 147.9L574.1 147.6ZM634.8 121.4L635.3 121.3L637.3 122.0L638.1 122.2L639.8 121.3L640.6 120.7L642.3 120.3L644.0 120.4L646.1 120.2L648.1 119.9L649.1 120.2L648.7 120.8L648.9 121.7L648.4 123.0L649.1 123.8L650.3 124.4L652.6 124.9L653.1 126.0L655.0 126.8L656.2 126.9L656.7 125.8L656.7 125.0L657.9 124.4L659.4 124.8L660.9 125.6L662.6 126.0L664.2 126.4L665.9 125.8L667.0 126.1L668.6 126.0L669.2 127.8L668.6 129.4L667.9 128.7L667.3 127.4L667.4 128.2L668.0 129.4L668.5 130.6L669.3 132.5L669.9 133.9L671.0 135.2L671.2 137.0L672.3 138.4L672.9 140.5L674.4 141.7L675.6 142.7L676.3 143.2L676.3 144.0L677.3 144.9L679.4 144.3L681.1 144.2L683.0 143.7L682.8 144.9L682.4 146.2L681.5 147.9L680.3 149.8L678.6 151.9L676.5 153.5L675.2 154.6L674.4 155.5L673.5 156.8L673.1 158.0L672.7 159.3L673.1 161.0L673.5 162.7L673.9 164.4L674.1 166.6L673.1 168.2L671.0 169.2L669.7 170.8L669.6 172.8L669.7 174.7L667.6 176.0L667.5 176.5L667.5 178.4L666.4 179.8L665.1 181.6L663.8 183.1L662.6 184.0L661.5 184.3L659.6 184.4L658.3 184.5L656.7 185.1L655.4 184.6L655.2 183.1L655.1 181.8L654.4 180.3L653.7 179.0L652.6 177.5L652.3 175.6L652.0 173.6L651.2 171.9L650.3 169.7L649.7 168.5L649.7 167.0L650.3 165.3L651.2 164.3L651.4 163.1L650.9 161.4L650.2 158.9L650.1 158.4L649.7 157.6L649.1 156.9L648.0 155.7L647.2 154.4L647.8 153.4L647.8 152.8L648.1 151.9L648.0 150.8L647.8 150.4L647.1 149.9L645.7 150.1L644.9 150.2L644.0 149.1L643.6 148.5L641.9 148.4L640.8 148.6L639.6 149.1L638.1 149.7L637.1 149.5L635.6 149.4L633.5 150.1L632.0 149.4L630.7 148.5L629.3 147.5L628.7 146.6L628.3 145.8L627.2 144.6L625.7 143.3L625.6 142.4L625.0 141.3L625.9 140.1L626.1 138.4L626.1 137.2L625.5 135.7L626.3 133.2L627.2 131.1L628.8 129.4L630.1 128.9L631.4 127.8L631.6 126.8L631.5 125.8L632.0 124.8L633.1 123.8L634.1 123.3L634.7 122.1ZM631.8 118.4L632.4 115.8L632.0 113.6L633.1 112.8L635.2 112.9L636.8 113.0L638.3 113.1L638.8 111.8L638.9 110.0L637.9 108.6L636.0 107.7L635.8 107.0L637.3 106.5L638.5 106.8L638.4 105.4L638.8 105.8L640.0 105.6L641.1 104.7L641.2 103.8L642.8 103.1L643.3 102.0L643.8 100.9L644.9 100.2L645.7 100.1L647.0 99.8L647.2 98.3L646.7 97.3L646.7 95.0L648.1 94.3L648.7 93.9L648.6 95.8L648.9 96.6L648.2 97.8L648.1 98.3L648.9 99.5L650.1 99.1L651.2 98.8L651.9 99.6L653.3 99.1L655.2 98.3L655.6 98.9L656.5 98.9L656.7 98.2L657.5 97.6L657.5 95.3L657.9 94.3L658.8 93.9L659.4 95.0L660.0 94.9L660.4 93.6L660.3 93.0L659.6 92.3L659.6 91.5L660.6 91.0L662.6 91.0L663.4 91.0L665.3 90.4L664.0 89.3L661.7 89.5L660.8 90.0L659.2 90.5L657.9 89.3L657.8 87.6L657.8 85.3L658.8 83.9L660.5 81.6L661.2 80.8L660.5 79.6L658.5 79.6L657.8 81.6L656.9 83.6L655.4 85.4L654.4 87.2L654.3 89.0L655.4 89.8L655.6 90.9L655.1 91.4L653.9 93.8L653.6 95.5L653.0 96.4L651.9 97.3L650.8 97.5L650.6 96.6L650.3 95.2L649.8 93.9L649.2 91.8L648.7 91.4L648.8 90.4L648.1 91.8L646.7 93.3L645.7 93.5L644.6 92.2L644.2 90.2L644.0 88.5L644.1 86.7L645.3 85.3L647.0 83.9L648.6 83.4L648.2 82.6L649.9 80.4L650.6 78.4L652.0 75.8L652.9 74.0L654.1 72.4L655.8 70.5L657.9 69.5L659.6 68.2L661.5 67.2L663.4 67.4L665.1 68.7L665.9 69.2L665.1 70.7L667.2 70.5L668.0 71.4L670.1 72.1L672.3 74.0L674.4 76.5L674.6 78.4L673.5 78.8L671.8 78.8L669.3 77.7L667.6 77.3L667.2 76.7L668.5 79.0L669.3 82.0L671.0 83.0L670.6 83.2L671.8 82.4L673.5 81.8L673.9 82.0L673.5 80.0L675.2 78.2L676.9 78.6L677.1 75.8L676.5 73.5L678.6 74.2L679.0 77.3L680.3 75.6L682.8 73.5L685.3 74.0L687.9 73.3L690.4 72.4L690.8 70.5L693.8 71.7L695.4 72.4L696.7 73.5L697.5 74.0L698.0 72.4L696.3 70.7L696.3 67.4L697.5 63.4L698.8 62.0L700.9 62.8L701.2 67.4L701.0 71.2L701.6 74.7L700.9 77.7L701.8 77.1L702.4 73.5L701.8 70.0L702.6 62.6L705.6 64.0L707.7 64.0L709.4 66.1L709.8 68.7L710.2 65.3L708.1 60.5L712.3 59.6L713.1 55.9L717.4 53.2L722.4 51.4L727.5 46.2L729.2 47.7L730.8 50.0L734.2 50.7L735.9 53.5L735.1 59.0L732.5 59.3L735.5 60.5L739.3 60.5L743.5 59.9L746.9 60.5L748.6 62.6L749.0 67.4L751.1 66.1L753.6 65.9L756.1 66.1L757.8 63.1L758.7 62.6L762.9 63.7L766.3 65.9L767.9 67.7L772.2 67.4L774.7 69.5L775.1 70.9L778.1 70.7L781.4 70.0L783.1 72.4L783.5 70.0L785.6 70.2L788.2 70.7L791.5 72.6L794.1 74.2L795.8 76.0L798.3 76.9L800.2 78.8L799.1 80.0L797.5 82.4L795.3 81.4L793.2 80.0L792.4 78.6L791.5 81.0L790.3 81.8L789.4 81.6L790.7 84.9L791.1 86.2L789.0 85.8L786.5 87.1L784.8 88.5L783.4 90.2L780.6 89.7L778.9 90.2L777.6 90.5L777.2 92.7L776.4 93.5L776.8 94.3L777.4 96.3L776.2 98.0L774.7 99.5L774.5 100.6L773.4 101.1L773.0 102.6L771.9 103.7L771.3 101.6L771.0 98.8L771.1 95.8L772.2 93.8L774.3 91.0L776.0 89.3L777.2 87.6L778.5 85.8L776.4 87.4L774.7 87.1L772.2 87.6L770.5 91.0L767.1 91.0L765.0 91.4L762.5 91.4L760.4 91.4L757.8 93.9L756.1 96.1L754.0 98.5L755.3 99.5L756.1 99.8L757.4 99.2L758.9 100.5L758.4 102.7L758.2 105.0L758.1 106.9L756.6 109.4L754.9 111.2L753.6 113.0L751.9 113.8L751.1 113.3L750.0 114.3L749.2 115.3L749.1 116.1L747.4 117.2L747.3 117.8L748.1 118.9L748.9 120.2L748.9 121.7L748.6 122.2L747.5 122.6L746.4 122.9L746.4 121.5L746.6 120.2L746.2 119.4L745.4 119.3L744.9 118.9L745.4 117.6L744.7 116.9L743.1 117.5L742.1 118.3L742.4 117.5L742.7 116.4L741.8 116.0L740.5 117.2L739.3 117.8L739.0 118.6L740.0 119.3L740.3 120.0L741.6 119.3L743.1 119.8L742.9 120.3L741.4 121.1L740.4 122.3L741.2 123.1L741.7 124.6L742.5 125.5L742.6 126.4L741.6 127.0L742.7 127.5L742.4 128.7L741.6 129.4L740.7 131.1L740.1 131.8L739.4 132.6L738.4 133.4L737.6 134.0L736.2 134.5L735.5 134.6L734.2 135.1L733.0 135.5L732.8 136.3L732.4 135.3L731.3 135.1L730.4 135.4L729.8 136.0L729.0 137.5L729.6 138.6L730.6 139.7L731.1 140.1L731.7 141.4L732.0 142.9L731.7 144.0L730.4 145.0L729.8 145.6L728.5 146.5L728.2 145.5L727.9 145.0L727.1 144.8L726.5 143.8L725.8 143.3L724.9 143.0L724.9 142.4L724.4 142.3L724.1 142.7L723.9 143.8L723.4 145.1L723.5 145.9L724.1 146.6L724.4 147.7L725.4 148.1L726.2 148.7L726.9 149.6L727.1 150.4L727.0 151.4L727.6 152.6L727.1 152.7L726.0 151.9L725.2 151.3L724.5 149.7L724.4 148.7L723.9 148.1L723.3 147.2L722.7 147.0L722.8 145.5L723.0 144.5L722.8 143.2L722.6 141.9L722.2 140.6L722.2 139.7L721.6 139.3L720.9 139.7L720.1 140.3L719.3 140.1L719.5 138.8L719.2 137.7L718.6 136.8L717.6 135.7L717.2 134.5L716.1 134.8L714.8 135.1L713.1 135.2L713.0 136.1L712.6 136.7L711.5 137.3L710.2 138.5L709.1 139.6L708.1 140.3L707.4 141.0L707.4 142.7L707.1 144.0L707.1 145.1L706.4 145.9L705.7 146.4L705.1 146.9L704.3 146.2L703.9 144.9L703.2 143.6L702.7 142.3L702.4 141.0L701.7 139.7L701.3 137.6L701.1 136.1L701.0 135.2L700.9 134.6L700.5 135.5L699.5 135.9L698.1 134.6L699.0 133.9L697.8 133.7L696.7 133.1L696.3 132.2L695.9 131.6L694.2 131.8L691.9 131.9L690.0 131.6L688.3 131.4L687.9 130.3L687.3 130.0L685.7 130.5L684.5 130.1L683.2 129.3L682.6 128.2L682.0 127.1L680.9 127.0L680.3 127.8L680.7 128.9L681.4 129.9L682.1 130.5L682.1 131.5L682.6 132.2L683.0 131.0L683.3 131.8L683.2 132.5L684.1 132.8L685.6 132.7L686.4 131.7L687.1 131.0L687.3 132.0L687.9 132.9L689.2 133.3L690.2 134.3L689.4 135.9L688.5 137.5L687.9 137.7L686.6 138.5L685.3 139.3L683.8 140.1L682.0 141.1L680.7 141.9L678.6 142.6L677.7 142.9L676.5 143.0L676.2 142.3L675.9 141.0L675.8 139.7L674.5 137.9L673.5 136.3L672.8 135.2L672.3 133.4L671.2 132.2L670.8 131.1L669.7 129.7L669.3 129.0L669.2 127.8L668.6 126.0L668.9 125.7L669.3 124.5L669.7 123.4L670.1 122.1L670.1 121.2L670.3 120.5L669.6 120.6L668.5 120.9L667.2 121.1L665.6 120.4L664.7 121.0L663.4 120.5L662.8 119.7L662.1 118.6L662.6 117.5L661.9 116.9L663.0 116.4L664.2 116.2L664.3 115.6L665.9 115.6L667.6 114.7L669.3 114.7L670.6 115.5L671.8 115.8L673.5 115.8L674.9 115.2L674.8 113.9L673.5 113.0L671.8 111.8L671.0 111.0L671.8 109.4L672.9 108.6L671.4 108.8L669.7 109.4L669.3 110.0L669.7 110.9L670.5 111.1L669.3 111.5L668.2 111.9L667.3 110.7L668.1 109.9L666.8 109.4L665.8 109.4L664.8 110.9L664.0 112.2L663.4 113.2L663.2 114.1L663.6 115.2L664.2 115.6L663.4 115.8L662.6 116.2L661.9 116.6L661.7 116.0L660.5 116.0L659.9 116.7L659.1 116.4L658.9 117.5L659.4 118.0L660.0 118.9L660.0 119.4L659.4 119.2L659.2 119.8L659.2 120.7L658.8 120.8L658.1 120.4L657.7 119.3L657.8 118.8L657.3 118.1L656.8 117.4L656.2 116.5L656.2 115.3L656.0 114.7L655.4 114.3L654.1 113.6L652.9 112.5L652.3 111.2L651.8 110.9L651.3 111.3L651.3 110.6L651.3 110.4L650.3 110.7L650.2 112.1L651.2 112.9L651.8 114.1L653.1 114.8L653.3 115.4L654.1 115.7L655.4 116.7L655.3 117.2L654.1 116.4L653.8 117.3L654.2 118.0L653.7 118.8L653.0 119.1L653.3 118.4L653.3 117.5L652.7 116.8L652.0 116.2L650.8 115.5L650.1 114.9L649.1 114.3L648.7 113.6L648.4 112.5L647.3 111.9L646.1 112.6L645.0 113.5L643.8 113.1L642.8 113.2L642.4 114.1L642.5 114.8L641.7 115.4L640.5 116.1L639.5 117.5L640.0 118.3L639.2 119.4L638.1 120.4L636.1 120.5L635.2 121.1L634.6 120.7L634.0 120.0L633.1 120.2L632.3 120.2L632.4 118.7ZM635.0 104.8L636.3 103.4L637.3 103.4L637.5 103.0L637.1 103.1L636.3 102.8L635.4 102.6L636.3 101.9L636.3 101.2L635.9 101.2L636.1 100.5L637.2 100.5L637.3 99.6L636.9 98.8L636.8 98.2L635.7 98.5L635.8 97.3L635.1 97.5L635.1 96.1L634.6 95.5L634.9 94.3L635.4 93.0L635.6 92.5L637.2 92.5L636.4 93.9L638.1 93.9L638.1 94.9L637.5 96.1L637.0 96.6L638.1 96.9L638.5 98.0L638.8 98.6L639.7 99.4L639.9 100.1L640.1 100.9L640.9 101.1L641.2 101.6L640.8 102.6L640.4 103.0L641.0 103.3L640.6 103.8L640.0 104.1L638.7 104.1L637.7 104.2L636.8 104.5L636.7 104.7L636.3 104.6L635.5 105.0ZM634.4 102.0L634.7 100.5L634.6 99.5L635.2 98.9L634.9 98.5L634.7 97.8L633.6 97.6L632.8 97.9L632.6 98.8L631.4 99.2L631.5 100.4L632.2 100.6L631.8 101.3L631.0 102.2L631.2 102.7L631.8 103.0L632.8 102.6L633.9 102.2ZM648.7 41.2L649.1 37.6L651.6 37.1L653.3 36.1L655.0 37.6L657.5 41.6L655.8 45.0L654.1 50.4L652.4 48.1L651.2 45.0L649.5 42.9ZM655.0 35.1L658.3 33.6L662.6 35.6L660.9 39.4L656.7 38.5ZM657.5 47.0L659.2 44.2L660.5 45.8L659.2 47.7ZM589.8 108.1L590.5 106.9L590.9 105.6L591.7 103.9L592.9 102.8L592.6 104.3L592.2 105.0L593.0 105.1L594.3 105.6L594.7 106.7L595.4 108.2L594.9 109.3L594.1 108.9L593.0 108.9L592.8 108.1L591.3 108.1ZM568.2 134.9L569.8 133.9L570.3 133.7L571.9 133.8L573.2 134.3L574.5 135.0L575.7 135.5L577.2 136.4L576.1 136.7L574.3 136.7L574.7 136.0L573.6 135.3L571.9 135.0L570.8 134.6L570.0 134.3L569.4 134.6ZM577.1 138.0L578.3 137.8L578.8 137.8L578.4 137.2L577.9 136.9L579.1 136.7L580.4 136.8L580.9 136.9L581.5 137.2L582.1 137.8L581.6 138.0L580.8 138.1L579.8 138.2L579.4 138.6L578.4 138.3ZM573.8 138.0L574.9 137.9L575.6 138.4L574.9 138.5L573.8 138.3ZM583.1 137.9L584.4 138.0L584.3 138.4L583.1 138.4ZM587.7 144.7L588.4 144.6L588.4 145.2L587.7 145.2ZM573.8 130.4L574.7 130.5L574.7 130.9L574.0 131.8L573.8 132.5L574.2 132.7L574.3 131.8ZM531.6 103.9L532.7 104.2L534.2 105.0L535.4 106.0L535.9 107.0L534.8 106.9L533.7 106.3L532.9 105.2L531.9 104.6ZM527.7 99.2L528.7 99.5L529.2 101.9L528.5 101.2L527.8 100.2ZM509.5 94.1L511.2 93.5L511.5 94.4L510.1 95.3ZM525.1 93.5L526.8 93.5L528.1 96.6L528.9 98.0L527.7 98.3L526.4 95.8ZM495.0 83.9L497.3 84.3L497.5 84.9L495.2 84.5ZM498.8 89.8L500.0 89.7L500.1 90.4L499.0 90.5ZM585.5 105.2L587.5 105.9L587.7 106.1L586.3 105.9ZM585.6 108.9L587.5 109.5L587.1 110.0L585.8 109.5ZM588.2 204.3L589.6 204.3L591.1 204.8L590.5 205.6L588.8 205.6L588.2 205.0ZM607.8 208.1L609.4 208.5L609.6 209.3L608.2 208.7ZM577.2 192.7L577.9 192.8L577.8 194.5L577.1 194.3ZM508.3 136.4L509.1 136.8L508.6 137.5L508.3 136.9ZM647.7 113.6L647.8 114.7L647.6 115.4L647.1 114.8L647.1 114.0ZM647.6 115.6L648.1 116.4L647.9 117.8L647.3 118.1L646.9 117.7L646.9 116.3ZM650.3 119.1L651.1 118.9L653.0 118.8L652.6 119.9L652.5 120.5L651.9 120.3L650.4 119.5ZM659.6 121.6L660.5 121.9L662.0 122.0L661.9 122.3L660.6 122.4L659.6 122.1ZM667.0 122.2L668.0 121.9L669.0 121.5L668.5 122.3L667.6 122.7L667.1 122.5ZM641.8 117.4L642.5 117.1L642.7 117.4L642.3 117.7ZM659.2 118.1L660.2 118.5L660.5 119.1L660.0 118.9ZM663.2 121.0L663.6 120.8L663.4 121.3ZM661.6 117.7L662.2 117.7L662.0 118.0ZM649.2 96.9L650.4 96.4L650.3 97.8L649.2 97.8ZM648.1 97.3L648.9 97.3L648.8 98.0L648.2 97.9ZM655.1 93.6L655.9 93.6L655.6 94.7L655.1 95.0ZM653.6 96.3L654.2 94.6L654.0 95.6ZM658.2 92.7L659.4 92.5L659.0 93.1L658.3 93.5ZM658.4 91.8L659.2 91.8L658.9 92.3ZM633.6 86.2L634.4 86.2L634.2 87.6L633.7 87.1ZM638.5 89.2L639.0 88.8L638.9 90.4L638.5 90.0ZM633.7 93.0L634.6 92.8L634.1 93.9L633.6 94.9L633.5 94.1ZM634.2 94.3L634.7 94.1L635.0 94.7L634.5 95.0ZM625.6 128.8L626.2 128.6L626.0 129.2L626.8 129.0L626.8 129.4L626.5 129.5ZM627.6 128.5L628.2 128.5L627.7 129.2ZM672.8 158.6L673.2 158.9L673.0 159.3ZM497.3 100.6L499.7 99.5L498.6 100.5ZM489.7 102.6L493.1 102.0L494.8 101.8L493.1 102.3ZM585.0 86.9L583.7 86.7L581.8 85.8L580.8 85.3L579.5 84.7L578.3 82.6L577.0 82.2L575.7 82.4L574.2 82.4L573.6 81.6L574.9 80.4L576.6 80.2L577.8 80.0L577.7 78.0L578.7 75.8L578.3 74.0L576.6 72.8L575.3 71.2L573.6 69.7L571.1 69.7L568.6 70.0L567.3 69.5L565.2 68.7L564.3 66.1L563.9 63.4L563.9 59.9L567.3 59.6L568.6 60.8L569.0 63.4L567.7 66.1L568.6 66.7L570.2 63.4L571.5 59.9L574.0 62.0L574.0 59.6L575.7 62.0L577.0 64.8L579.5 66.7L581.6 68.5L582.9 70.5L583.3 72.8L585.4 74.7L587.1 76.5L588.1 77.7L587.5 79.8L585.8 80.6L586.3 81.2L583.7 78.2L582.5 77.7L584.2 81.2L585.0 82.0L585.4 84.3L585.4 85.1L582.1 83.5L583.7 85.3ZM566.5 80.4L568.1 79.0L569.4 79.2L571.1 82.0L572.2 83.4L571.1 84.1L569.4 83.0L567.7 83.9L566.3 83.6L567.3 81.6ZM569.8 85.1L570.7 85.1L571.9 86.0L570.7 86.7ZM572.1 86.2L572.8 86.0L572.9 87.4L572.4 87.4ZM574.5 74.2L576.1 74.5L576.3 76.2L574.9 76.2ZM540.7 68.5L543.7 71.7L544.1 73.3L547.9 73.1L550.4 72.6L553.8 72.8L554.7 71.2L553.4 69.5L555.1 68.2L553.0 66.1L551.7 62.0L550.4 60.8L548.8 62.8L549.2 65.3L547.5 62.8L546.2 62.0L543.3 61.4L540.3 62.8L539.5 65.6L540.7 66.4L542.4 68.5ZM534.0 64.8L536.1 67.2L538.2 66.1L539.1 63.4L540.7 60.5L542.4 59.6L541.2 58.1L537.8 57.5L534.8 58.4L534.6 62.0ZM553.8 66.1L556.3 66.1L558.0 63.4L557.2 59.6L555.1 59.3L553.4 62.0ZM559.3 64.8L561.0 64.5L563.5 62.0L563.5 59.0L561.4 58.4L559.3 59.0L558.9 62.0ZM555.9 71.2L557.6 70.5L559.3 71.9L558.9 73.5L556.8 72.8ZM541.2 54.9L544.5 57.8L548.3 56.2L550.4 55.9L550.4 52.5L547.9 51.4L547.5 54.2L545.4 54.2L543.7 51.4L541.2 52.5ZM536.1 51.8L539.5 53.5L541.2 50.7L539.5 47.7L536.9 49.6ZM552.1 54.2L557.2 55.9L557.6 52.5L555.5 50.0L552.1 51.4ZM558.4 54.2L560.6 53.9L561.0 55.9L559.3 56.8ZM558.9 49.6L563.1 50.0L564.8 53.9L569.0 53.2L572.4 54.2L572.4 56.8L568.1 57.5L562.2 56.8L561.8 53.2L559.7 52.5ZM563.9 50.7L568.1 51.4L571.5 51.8L574.0 48.9L575.7 45.0L576.6 40.8L579.9 37.6L584.2 32.1L587.5 25.3L585.8 20.9L579.1 18.1L572.4 18.8L565.6 22.2L563.1 28.2L566.5 33.6L568.1 38.5L566.5 42.9L564.8 47.0ZM558.9 36.1L561.4 29.4L563.9 33.6L565.6 40.8L566.5 43.7L563.1 43.7L560.6 39.9ZM551.3 45.0L555.5 45.8L557.2 41.6L553.0 39.4L550.4 41.6ZM488.0 262.6L496.5 264.7L504.9 262.6L513.3 258.7L521.8 253.4L530.2 250.1L538.6 248.6L547.1 250.1L553.8 244.2L558.0 243.4L563.9 245.6L572.4 247.1L576.6 243.6L579.1 237.6L580.8 234.1L583.3 229.6L585.8 226.6L588.4 224.6L591.7 223.3L591.3 225.2L589.2 227.6L587.5 229.6L585.4 234.1L587.5 238.9L588.8 244.2L588.4 250.1L589.2 253.4L597.6 261.4L606.1 263.4L610.3 262.6L614.5 256.9L618.7 251.7L622.9 247.1L627.2 244.2L631.4 240.2L635.6 238.9L639.8 237.1L648.2 237.6L656.7 237.6L665.1 235.9L669.3 235.2L671.8 236.9L673.5 234.5L677.7 231.8L682.0 229.2L686.2 228.6L687.9 230.3L690.4 231.6L694.6 232.2L697.1 232.5L698.8 234.3L700.5 235.9L703.0 236.7L704.7 235.2L707.2 232.5L711.5 230.1L715.7 230.3L719.9 228.6L724.1 228.2L728.3 229.6L732.5 228.6L736.8 229.6L741.0 230.3L745.2 229.2L749.4 229.0L753.6 228.6L757.8 230.1L762.0 230.7L766.3 233.6L770.5 235.2L774.7 237.6L778.9 239.6L783.3 240.9L782.7 244.2L782.3 247.1L779.7 251.7L777.6 256.9L778.1 260.6L780.3 261.8L783.1 260.6L791.5 262.6L791.5 305.5L488.0 305.5ZM579.1 234.8L581.2 236.4L582.1 240.2L580.8 244.2L577.4 243.6L576.6 240.2L578.3 236.4ZM588.0 222.0L590.5 220.7L591.1 221.1L588.8 222.5ZM601.0 218.4L602.3 218.4L601.9 218.8Z"/>
<path fill="#aad3df" d="M72.8 110.4L72.3 111.8L72.8 113.6L73.7 114.9L74.5 116.3L75.2 116.5L74.4 117.5L74.0 118.7L74.5 119.7L75.8 120.4L77.5 120.4L78.3 120.2L78.2 118.6L77.9 117.5L77.3 116.6L77.3 115.5L78.3 115.3L77.9 114.7L77.1 114.4L76.2 113.3L75.2 111.9L76.0 111.0L77.5 110.9L77.7 109.2L76.2 108.8L74.5 109.3L73.7 109.8ZM59.6 154.1L60.6 153.5L61.5 153.8L61.6 154.6L61.0 155.9L60.2 156.0L59.6 155.1ZM57.4 156.7L57.8 157.6L57.9 158.9L58.8 160.7L58.9 161.2L58.4 160.7L57.6 158.9L57.3 157.6ZM61.4 161.9L61.9 162.7L62.1 164.0L62.5 165.7L62.1 165.9L61.8 164.4L61.5 162.7ZM120.3 102.8L121.7 101.6L123.4 100.5L124.7 98.8L125.4 97.2L124.9 97.0L124.1 99.2L122.4 100.9L120.9 102.0L120.2 102.4ZM94.8 110.6L96.0 109.2L97.7 109.2L99.4 109.0L99.0 109.7L96.9 109.8L95.6 110.9L94.9 111.2ZM82.0 111.2L82.8 110.3L83.2 111.0L82.5 112.1ZM83.4 109.7L84.6 109.2L84.5 110.0L83.6 110.1ZM58.5 90.2L58.9 88.5L60.2 87.6L60.6 89.0L60.2 89.8L59.4 90.2ZM61.7 87.1L62.5 85.4L63.4 87.1L63.0 88.5L62.3 88.5ZM43.3 92.5L44.2 91.4L44.6 92.2L43.8 93.0ZM97.0 114.3L98.1 113.9L98.8 114.1L98.0 114.6ZM44.5 142.4L45.1 142.4L45.1 142.9L44.6 142.9ZM63.0 150.0L63.4 150.4L63.7 151.6L63.3 151.4ZM70.8 118.9L71.2 119.1L71.4 119.9L71.0 119.9ZM68.5 118.5L69.5 118.1L69.3 118.7L68.7 118.8ZM144.1 111.0L144.8 111.0L144.6 111.7L144.2 111.6ZM117.1 57.8L120.5 56.5L122.2 58.1L118.8 58.4ZM376.3 110.4L375.8 111.8L376.3 113.6L377.2 114.9L378.0 116.3L378.7 116.5L377.9 117.5L377.5 118.7L378.0 119.7L379.3 120.4L381.0 120.4L381.8 120.2L381.7 118.6L381.4 117.5L380.8 116.6L380.8 115.5L381.8 115.3L381.4 114.7L380.6 114.4L379.7 113.3L378.7 111.9L379.5 111.0L381.0 110.9L381.2 109.2L379.7 108.8L378.0 109.3L377.2 109.8ZM258.7 109.2L260.4 107.8L261.7 106.8L263.4 106.8L264.6 107.7L264.9 109.3L263.4 109.4L262.1 108.9L260.0 109.3ZM262.3 114.7L262.2 113.0L262.5 111.2L263.8 110.1L264.6 110.4L263.8 111.7L263.5 113.2L263.3 114.7ZM265.1 110.1L266.1 110.0L267.6 110.0L268.9 110.9L268.7 111.7L267.6 111.5L267.4 113.1L266.7 113.5L265.7 112.6L266.1 111.2ZM266.0 114.9L266.7 115.3L268.0 114.9L269.7 113.9L269.5 113.7L268.0 114.0L266.6 114.6ZM269.0 113.2L270.1 113.1L271.9 112.9L272.0 112.3L271.0 112.4L269.5 112.6ZM252.9 99.8L253.8 99.6L254.9 103.3L255.0 104.5L254.5 104.3L254.1 102.3ZM230.9 80.4L232.6 77.1L234.7 76.9L236.8 78.4L236.0 80.0L234.3 80.6L233.0 79.6ZM237.7 88.5L238.9 88.6L241.0 87.6L242.7 85.8L244.0 85.3L243.6 84.9L241.5 86.0L239.8 86.2L238.1 87.6ZM242.6 92.3L244.4 91.5L246.9 91.2L246.5 91.8L244.0 92.0ZM363.1 154.1L364.1 153.5L365.0 153.8L365.1 154.6L364.5 155.9L363.7 156.0L363.1 155.1ZM360.9 156.7L361.3 157.6L361.4 158.9L362.3 160.7L362.4 161.2L361.9 160.7L361.1 158.9L360.8 157.6ZM364.9 161.9L365.4 162.7L365.6 164.0L366.0 165.7L365.6 165.9L365.3 164.4L365.0 162.7ZM423.8 102.8L425.2 101.6L426.9 100.5L428.2 98.8L428.9 97.2L428.4 97.0L427.6 99.2L425.9 100.9L424.4 102.0L423.7 102.4ZM398.3 110.6L399.5 109.2L401.2 109.2L402.9 109.0L402.5 109.7L400.4 109.8L399.1 110.9L398.4 111.2ZM385.5 111.2L386.3 110.3L386.7 111.0L386.0 112.1ZM386.9 109.7L388.1 109.2L388.0 110.0L387.1 110.1ZM362.0 90.2L362.4 88.5L363.7 87.6L364.1 89.0L363.7 89.8L362.9 90.2ZM365.2 87.1L366.0 85.4L366.9 87.1L366.5 88.5L365.8 88.5ZM346.8 92.5L347.7 91.4L348.1 92.2L347.3 93.0ZM277.3 166.9L277.9 167.2L278.3 167.7L277.6 167.6ZM275.9 144.6L276.3 144.9L276.4 145.8L275.9 146.1L275.4 145.7L275.6 144.9ZM264.0 143.6L264.5 143.6L264.8 144.3L264.2 144.3ZM400.5 114.3L401.6 113.9L402.3 114.1L401.5 114.6ZM348.0 142.4L348.6 142.4L348.6 142.9L348.1 142.9ZM366.5 150.0L366.9 150.4L367.2 151.6L366.8 151.4ZM374.3 118.9L374.7 119.1L374.9 119.9L374.5 119.9ZM372.0 118.5L373.0 118.1L372.8 118.7L372.2 118.8ZM447.6 111.0L448.3 111.0L448.1 111.7L447.7 111.6ZM249.5 93.6L250.3 93.5L250.5 95.6L249.6 95.6ZM276.0 77.3L277.3 77.5L277.3 78.8L276.0 78.6ZM420.6 57.8L424.0 56.5L425.7 58.1L422.3 58.4ZM562.2 109.2L563.9 107.8L565.2 106.8L566.9 106.8L568.1 107.7L568.4 109.3L566.9 109.4L565.6 108.9L563.5 109.3ZM565.8 114.7L565.7 113.0L566.0 111.2L567.3 110.1L568.1 110.4L567.3 111.7L567.0 113.2L566.8 114.7ZM568.6 110.1L569.6 110.0L571.1 110.0L572.4 110.9L572.2 111.7L571.1 111.5L570.9 113.1L570.2 113.5L569.2 112.6L569.6 111.2ZM569.5 114.9L570.2 115.3L571.5 114.9L573.2 113.9L573.0 113.7L571.5 114.0L570.1 114.6ZM572.5 113.2L573.6 113.1L575.4 112.9L575.5 112.3L574.5 112.4L573.0 112.6ZM556.4 99.8L557.3 99.6L558.4 103.3L558.5 104.5L558.0 104.3L557.6 102.3ZM534.4 80.4L536.1 77.1L538.2 76.9L540.3 78.4L539.5 80.0L537.8 80.6L536.5 79.6ZM541.2 88.5L542.4 88.6L544.5 87.6L546.2 85.8L547.5 85.3L547.1 84.9L545.0 86.0L543.3 86.2L541.6 87.6ZM546.1 92.3L547.9 91.5L550.4 91.2L550.0 91.8L547.5 92.0ZM666.6 154.1L667.6 153.5L668.5 153.8L668.6 154.6L668.0 155.9L667.2 156.0L666.6 155.1ZM664.4 156.7L664.8 157.6L664.9 158.9L665.8 160.7L665.9 161.2L665.4 160.7L664.6 158.9L664.3 157.6ZM668.4 161.9L668.9 162.7L669.1 164.0L669.5 165.7L669.1 165.9L668.8 164.4L668.5 162.7ZM665.5 90.2L665.9 88.5L667.2 87.6L667.6 89.0L667.2 89.8L666.4 90.2ZM668.7 87.1L669.5 85.4L670.4 87.1L670.0 88.5L669.3 88.5ZM650.3 92.5L651.2 91.4L651.6 92.2L650.8 93.0ZM580.8 166.9L581.4 167.2L581.8 167.7L581.1 167.6ZM579.4 144.6L579.8 144.9L579.9 145.8L579.4 146.1L578.9 145.7L579.1 144.9ZM567.5 143.6L568.0 143.6L568.3 144.3L567.7 144.3ZM651.5 142.4L652.1 142.4L652.1 142.9L651.6 142.9ZM670.0 150.0L670.4 150.4L670.7 151.6L670.3 151.4ZM553.0 93.6L553.8 93.5L554.0 95.6L553.1 95.6ZM579.5 77.3L580.8 77.5L580.8 78.8L579.5 78.6Z"/>
<path fill="none" stroke="#c4a6bf" stroke-opacity="0.55" stroke-width="0.45" stroke-linejoin="round" d="M30.9 122.2L31.4 123.8L31.8 125.1L29.8 125.8L28.2 127.5L25.5 128.5L25.5 129.9M25.5 129.5L21.7 129.5M25.5 129.9L25.5 131.1L22.7 131.1L22.7 133.4L21.8 133.9L21.8 135.4L18.5 135.4M25.5 129.9L28.8 132.0L34.3 136.0L35.5 136.9L35.5 137.4L36.4 137.3L37.7 137.0L39.1 135.9L42.9 133.4M42.9 133.4L41.2 132.5L40.8 130.8L41.1 129.7L41.0 127.8L40.8 127.1M40.8 127.1L40.4 125.3L39.1 123.8L39.7 122.3L40.1 120.3M40.8 127.1L41.5 125.6L42.5 124.2M28.8 132.0L27.2 132.0L28.2 139.7L28.3 140.6L25.0 140.6L23.1 140.5L22.5 141.2M22.5 141.2L21.4 140.0L20.6 139.6L18.9 140.0M22.5 141.2L23.2 143.3M23.2 143.3L21.3 143.0L20.2 143.0L18.7 143.3M18.6 142.2L20.2 142.1L21.2 142.4L20.2 142.6L18.6 142.7M21.3 143.0L21.3 143.9L20.2 144.5M23.2 143.3L25.2 143.3L26.1 145.2M21.6 146.2L23.5 145.3L24.1 146.6L25.0 147.5L25.6 147.4M24.1 146.6L23.1 148.0M25.6 147.4L26.5 150.1M25.6 147.4L26.1 145.2M26.1 145.2L27.7 145.2L28.2 145.0L29.0 145.6L30.4 145.6M30.4 145.6L30.1 148.3L30.4 149.5M30.4 145.6L30.4 144.5L32.8 144.4M32.8 144.4L33.2 146.6L33.8 148.6M33.6 144.5L34.1 148.5M35.8 143.9L35.1 147.0L35.1 148.4M28.2 145.0L28.3 143.8L29.4 142.5L31.1 141.7L33.0 141.0M33.0 141.0L35.8 140.7L36.3 139.3L36.3 137.3M33.0 141.0L33.6 142.5L34.8 143.4L35.8 143.9M33.6 144.5L34.8 143.4M35.8 143.9L36.2 142.3L38.7 142.7L40.4 142.9L42.9 142.6L44.3 142.1M44.3 142.1L45.9 139.4L45.9 136.1L46.3 133.5M42.9 133.4L44.8 134.2L46.3 133.5M46.3 133.5L53.0 137.0M53.9 125.7L53.9 134.8M53.9 134.8L53.9 136.6L53.0 136.6L53.0 137.0M53.9 134.8L63.9 134.8M53.0 137.0L53.0 140.4L51.8 141.9L51.3 143.0L52.1 144.6M44.3 142.1L44.8 143.2L45.4 145.3L44.6 145.5L45.9 147.5M45.9 147.5L48.5 146.9L50.5 145.8L52.1 144.6M44.8 143.2L43.8 145.8L42.5 148.1L41.1 148.3L40.1 149.7M45.9 147.5L45.0 149.2L46.3 151.9M41.1 151.9L44.0 151.9L46.3 151.9M41.1 153.0L42.3 153.0L42.3 151.9M44.0 151.9L45.0 154.2L44.9 155.5L43.3 155.7L42.2 157.1M46.3 151.9L48.5 150.8M48.5 150.8L48.0 153.4L46.7 155.3L46.2 157.2L44.6 157.9L43.1 158.7M43.1 158.0L43.8 157.7M48.5 150.8L50.1 150.1L51.8 150.3L53.9 149.6L55.9 149.6M52.1 144.6L53.0 146.4L54.1 147.5L55.9 149.6M53.0 146.4L54.7 145.3L56.4 145.8L58.1 145.3L59.8 143.6L60.7 144.6L61.5 145.8M61.5 145.8L62.3 144.0L63.3 143.0L63.6 141.6L64.0 139.3L65.3 138.4M63.6 141.6L65.7 141.4L67.4 142.3L68.5 143.2M68.5 143.2L68.0 144.5L69.0 144.6L69.9 146.2L72.4 147.0L73.3 147.0L70.7 149.6L69.1 149.8L68.2 150.3M69.0 144.6L69.3 144.0M68.2 150.3L66.1 150.8L64.8 150.8L63.1 150.0L62.3 149.3M62.3 149.3L61.5 147.9L60.7 147.0L61.5 145.8M68.2 150.3L67.4 151.4L67.4 154.6L67.9 155.2M62.3 149.3L61.8 150.7L62.3 152.4L61.5 153.6L61.5 154.6M61.5 154.6L64.5 156.3L65.8 157.8M55.9 149.6L57.7 150.1L58.8 150.8L59.8 150.8L61.8 150.7M58.8 150.8L59.2 152.0L58.1 153.1L57.8 155.0M58.5 154.6L61.5 154.6M57.8 155.0L58.5 154.6L58.8 155.8L58.4 156.2L57.2 156.1M58.4 156.2L58.8 156.6L58.1 157.5L57.5 157.5M57.8 155.0L57.2 156.1L57.5 157.5L57.7 158.9L58.7 160.7M58.7 160.7L60.5 161.8L61.5 161.8L62.2 163.6L64.4 163.7L66.9 162.7M58.7 160.7L57.1 161.0L56.9 161.7L56.7 163.8L57.9 164.2L57.9 165.2L57.2 165.2L55.7 163.8L54.1 163.3L53.3 163.4L53.0 163.0M43.1 158.7L43.8 158.8L46.8 158.8L47.1 160.1L49.2 160.1L49.2 160.6L51.2 160.0L51.2 163.1L51.5 163.3L53.0 163.0M53.0 163.0L53.0 164.8L51.3 164.9L51.3 167.6L52.5 168.9M42.7 168.6L44.6 168.7L48.4 168.7L50.5 169.2L52.5 168.9L54.1 169.1M50.5 169.2L50.5 172.8L49.7 172.8L49.7 175.4M49.7 175.4L49.7 178.8L47.6 179.1L46.7 179.0M49.7 175.4L50.3 177.3L51.8 176.5L53.9 176.2L55.5 174.7L57.6 173.0M57.6 173.0L56.0 171.5L54.1 169.1M54.1 169.1L55.6 169.1L57.2 167.4L58.4 167.1M58.4 167.1L58.3 166.4L60.6 165.7L60.5 165.3L60.8 164.4L60.9 163.0L60.5 161.8M60.6 165.7L61.9 166.2L62.6 168.2L62.0 167.6L61.7 166.1M58.4 167.1L60.5 168.1L60.5 169.7L60.6 170.8L60.1 172.2L59.2 173.2M57.6 173.0L59.2 173.2M59.2 173.2L59.8 175.1L59.8 177.3L60.5 177.4M55.6 179.9L57.0 179.0L57.6 179.8L56.7 180.9L55.8 180.6L55.6 179.9M58.9 176.4L59.8 176.5L59.8 177.6L58.9 177.6L58.9 176.4M25.3 114.8L25.9 114.6L27.3 114.8L27.0 115.8L26.9 117.3L26.6 118.9L26.6 120.0M31.3 113.1L33.4 113.8L35.5 114.3M39.1 112.6L38.7 111.8L38.7 110.1M38.7 110.1L37.9 109.8L39.2 108.1M39.2 108.1L39.7 106.3M39.7 106.3L38.2 105.6L36.3 105.0L34.9 103.5M38.2 105.6L37.9 104.7L37.9 103.9M35.7 103.1L37.0 103.1L37.9 103.4L37.9 103.9M37.9 103.9L38.0 102.4L38.7 101.6L38.9 100.5M40.1 98.2L41.1 98.3M44.8 99.6L45.2 102.3L45.4 103.7M45.4 103.7L43.0 104.6L44.4 106.5M44.4 106.5L43.8 108.2L40.9 108.2M40.9 108.2L39.2 108.1M38.7 110.1L40.4 110.0L41.7 108.9L40.9 108.2M41.7 108.9L43.1 108.8L44.3 109.4M44.4 106.5L45.4 106.3L47.1 106.8L47.2 107.6L46.4 108.9L44.3 109.4M45.4 103.7L46.7 104.6L48.6 105.6L51.8 106.1M47.1 106.8L48.6 105.6M51.8 106.1L53.0 104.3L52.7 102.3L52.9 99.6L52.0 98.9M52.0 98.9L49.5 98.9M52.0 98.9L50.8 97.6M50.5 96.4L53.9 96.0L55.2 97.0M53.3 93.6L55.8 94.3M56.5 91.2L56.0 92.7L55.8 94.3L56.6 96.4L55.2 97.0L54.3 99.2L52.9 99.6M56.6 96.4L58.9 98.0L60.4 100.4L59.6 102.2M59.6 102.2L56.4 103.0L52.7 103.0M59.6 102.2L61.8 102.7L62.7 104.5L64.8 105.1L66.7 105.5L66.3 107.6L65.0 108.7M52.1 107.6L53.5 107.7L55.2 107.2L56.6 110.6L57.8 111.0M55.2 107.2L57.4 107.6L58.1 109.5M47.2 107.6L48.6 107.8L50.1 106.9L51.5 107.0L52.1 107.6M51.5 107.0L51.8 106.1M52.1 107.6L50.7 109.5L49.9 109.9M49.9 109.9L48.7 110.1L46.7 109.4L46.4 108.9M49.9 109.9L50.9 111.5L51.9 112.2L53.9 112.8L55.6 112.3L56.9 112.8M51.9 112.2L51.7 114.4L52.2 115.5L54.7 115.5L55.1 115.1L56.4 114.7M55.1 115.1L54.7 116.0M49.7 117.3L50.5 116.1L52.2 115.5M49.2 114.8L50.1 114.1L50.2 115.7L50.5 116.1M50.1 114.1L50.9 114.4L51.7 114.4M50.1 114.1L49.9 113.3L50.8 113.3L50.9 114.4M46.1 111.0L47.1 111.0L48.8 111.3L49.2 113.0L48.4 114.1M46.1 111.0L46.3 112.4L47.6 113.6M48.8 111.3L48.8 110.1M49.2 113.0L49.9 113.3M44.3 110.6L45.7 110.6L46.7 109.4M42.2 91.8L43.3 88.5L43.1 84.9L44.6 82.0L45.9 78.4L46.7 75.8L48.0 73.5L50.1 72.4M50.1 72.4L52.8 74.9L53.0 79.4M50.1 72.4L54.5 71.9L54.7 70.0L56.4 70.0L57.2 72.1M57.2 72.1L58.8 70.5M57.2 72.1L56.8 74.0L58.1 75.4L57.2 77.3L58.1 79.6L57.8 81.4L59.4 85.1L58.1 87.2L56.2 89.3M26.6 98.0L26.0 98.8L26.6 99.4L27.5 99.4M28.6 98.0L30.3 96.7M63.1 121.2L63.7 120.4L64.8 120.4L67.2 120.1L68.5 120.1L70.6 120.0L70.1 118.6L69.9 117.6L70.6 117.3M67.8 115.3L69.5 115.7L69.6 116.8L70.6 117.3M66.5 113.1L68.6 113.3L70.3 113.9L72.0 114.9L73.7 114.9M69.5 115.7L70.7 115.5L72.0 114.9M70.7 115.5L72.0 117.5L71.7 118.1M70.6 117.3L71.7 118.1L73.3 117.4L74.0 118.7M68.5 120.1L67.5 122.5L65.5 123.9M65.5 123.9L63.1 124.8M65.5 123.9L65.8 125.1L64.0 125.8L64.8 126.8L64.4 127.3L63.1 128.0L62.3 127.8M65.8 125.1L68.2 126.2L70.5 128.0L72.0 128.1M72.0 128.1L73.0 127.2L73.3 127.3M72.0 128.1L72.8 128.2L73.6 128.7M70.6 120.0L71.6 121.4L71.2 122.8L71.6 124.3L73.1 125.5L73.3 126.8L73.7 127.3M61.6 126.0L62.2 127.8M62.8 124.6L62.7 125.8L62.3 127.8M62.4 124.2L63.0 124.0L63.7 123.1L63.1 122.7M68.9 139.8L69.3 138.8L70.7 138.9L72.4 139.3L74.1 137.8L76.6 137.5M76.6 137.5L77.6 139.6M76.6 137.5L79.2 136.6L79.8 134.8M79.8 134.8L79.3 134.1L77.1 133.9L76.3 132.8M79.8 134.8L80.0 132.8L80.3 132.1M75.6 132.3L76.2 132.4M78.2 119.9L80.0 119.0L81.7 119.4L83.4 120.6L84.4 120.6L84.4 121.6M84.4 121.6L83.9 123.3L84.1 125.3L84.9 125.9L84.1 127.4M84.1 127.4L84.9 128.6L86.2 130.0L85.7 130.5L84.7 131.8M84.1 127.4L86.8 127.8L88.7 127.4L89.0 126.1L91.2 125.4L91.8 124.0L92.7 122.8L93.2 120.9L95.7 120.2M84.4 121.6L85.9 121.9L87.2 120.8L88.9 119.8L90.1 120.2L91.8 119.5L93.1 119.2L93.2 120.5L94.8 119.9L95.7 120.2M88.9 119.8L87.2 118.1L85.5 117.1L84.2 115.6L83.4 114.5L82.1 113.9L80.9 115.5L80.0 115.5L80.0 111.2L82.1 110.6M80.0 115.5L78.7 114.7L77.1 114.9M82.1 110.6L84.2 112.1L85.1 113.0L87.5 112.8L88.4 114.3L88.9 115.7L90.1 115.8L91.0 115.4L92.6 114.5M92.6 114.5L94.8 113.6L96.6 113.8L99.4 113.8L100.4 114.5M90.1 120.2L90.0 118.0L90.5 117.4L92.2 117.4L91.2 116.7L92.2 116.0L94.3 116.4L95.0 117.5M92.2 117.4L95.0 117.5M92.6 114.5L93.1 115.5L92.2 116.0M95.7 120.2L96.0 118.6L95.0 117.5M95.0 117.5L96.9 116.5L99.0 115.3L100.4 114.5M100.4 114.5L100.5 113.6L100.9 113.3L100.5 111.2L102.4 111.0L102.8 108.6L104.9 108.7L105.1 107.0L106.4 106.1M106.4 106.1L104.6 105.5L103.2 103.7L100.2 103.9L98.5 100.5L97.3 99.2L94.8 99.5L92.7 97.6L91.0 97.5L87.6 98.8L84.6 99.6L84.2 101.1L83.4 102.3L84.6 103.3L83.4 103.9L82.3 103.5L79.6 104.2L77.1 103.0L75.6 102.7L73.9 104.2L72.3 105.2L72.3 107.0L73.4 107.9L74.1 109.5M106.8 106.0L108.7 104.6L110.8 103.9L112.9 105.0L115.3 105.1L116.1 102.2L119.0 103.3L119.0 104.2L122.2 104.6L124.3 105.8L126.4 105.9L128.1 105.5L129.3 104.7L131.2 105.2M107.0 106.9L109.1 108.2L109.5 111.0L113.3 112.2L114.1 113.9L117.1 114.0L120.9 114.9L123.4 114.3L125.9 113.9L127.1 112.8L127.1 111.2L128.9 111.2L130.6 110.0L133.8 109.2L132.3 107.6L130.6 106.5L131.2 105.2M131.2 105.2L133.4 104.6L134.1 101.3L136.9 100.2L139.0 101.5L140.3 104.7L140.3 105.2L143.0 106.4L143.2 107.9L146.4 107.2L145.1 111.1L143.5 111.3L143.3 113.6L142.9 114.3M142.9 114.3L140.7 114.7L139.8 114.9L137.7 116.9M139.2 119.3L141.0 118.5M123.8 135.2L122.8 134.0L121.6 133.6L119.6 134.3L119.0 134.4M119.0 134.4L118.1 135.5M118.1 135.5L116.4 134.7L116.2 132.9L115.0 132.9L116.0 131.2L116.0 129.7L115.0 128.9M115.0 128.9L113.7 127.9L112.0 128.2L110.4 129.4L107.8 129.9L107.7 129.2L105.3 129.2L103.6 128.2L101.1 127.1L99.4 126.1L99.1 124.8L99.8 123.8L98.6 121.7L96.9 121.2L95.7 120.2M100.3 128.4L102.8 129.8L104.5 130.4L107.1 130.7L107.1 129.3M107.7 129.9L108.5 130.4L110.4 130.2L110.4 129.4M90.3 133.2L92.7 132.5L91.8 129.4L93.9 128.2L95.6 126.3L95.6 124.6L95.2 122.8L97.7 121.7L98.6 121.7M107.7 135.1L107.6 132.7L107.2 131.3L108.5 131.0L108.5 131.7L110.7 132.0L109.7 133.2L110.6 133.4L110.8 135.3M110.9 134.9L111.5 132.9L112.6 131.6L113.1 130.4L114.6 129.5L115.0 128.9M117.2 136.3L115.4 136.9L115.2 138.2L115.9 139.7L115.6 140.8L116.4 142.7L116.7 144.0L116.0 145.2M118.1 135.5L117.2 136.3M117.2 136.3L117.5 137.0L118.1 137.0L117.9 138.7L118.8 138.4L120.5 138.1L121.2 139.0L121.2 139.9L121.8 140.6L121.7 141.5M121.7 141.5L119.6 141.6L119.1 142.2L119.6 143.9M119.0 134.4L120.4 136.0L121.2 136.6L120.5 137.2L121.5 137.9L122.6 139.4L123.4 140.2L123.4 141.4M123.4 141.4L123.4 143.2L122.2 144.0L121.7 144.6L120.9 145.0M121.7 141.5L123.4 141.4M117.2 148.3L117.9 148.9L118.9 148.6M125.2 152.1L125.5 153.0L126.8 153.0L128.1 152.5L129.6 152.5L130.2 151.3L130.4 150.2L131.9 150.3M129.1 149.9L129.8 150.1L130.0 149.6M151.7 156.0L151.7 161.5M137.4 161.8L138.2 161.6L138.3 161.8M232.4 106.3L256.0 106.3L256.5 106.7L258.7 107.2L260.8 107.6L261.8 107.2L264.8 108.9L265.1 109.4L265.9 109.9L266.7 110.9L266.8 113.6L266.2 114.5L266.7 115.1L269.7 113.8L269.6 113.2L271.6 112.9L272.0 112.2L273.1 111.2L276.0 111.2L276.6 110.7L277.0 109.7L278.0 108.3L278.7 108.4L279.1 108.8L279.1 110.4L279.6 111.0L279.8 111.3M217.4 70.7L217.4 89.7L219.1 90.2L220.4 91.8L222.1 90.7L223.8 92.7L225.2 95.5L226.7 96.6L226.5 98.0M237.6 124.8L239.6 124.6L242.7 126.0L245.1 126.0L245.1 125.5L246.5 125.5L248.2 127.6L249.3 128.2L249.9 127.5L251.2 127.8L252.4 129.7L252.8 130.7L254.4 131.2M258.6 141.4L258.7 140.8L259.0 140.0L260.0 140.0L259.6 139.1L259.6 138.5L261.1 138.5L261.1 140.2M261.1 138.5L261.9 137.9M261.0 141.5L261.9 140.4M260.3 142.1L261.0 141.5L262.3 142.4M262.7 142.7L264.6 141.4L266.2 141.0M264.1 144.4L265.7 144.6M266.4 146.9L266.7 145.8M271.1 146.6L270.6 147.6M276.2 143.8L275.2 144.9L274.9 146.2L275.6 147.5L277.3 147.9L279.4 148.6L279.1 150.4L279.8 152.1L279.9 152.8M279.9 152.8L281.5 153.0L282.8 151.9L282.3 150.4L284.0 150.3L285.1 149.4M285.1 149.4L284.6 148.7L285.7 146.8M285.1 149.4L285.9 150.0L285.9 152.1L287.4 152.5L288.7 152.1M288.1 148.7L287.8 150.4L288.7 152.1M288.7 152.1L290.4 151.9L290.8 150.4L290.8 148.9M290.4 151.9L292.0 151.9L292.7 150.3M279.9 152.8L277.3 152.4L277.7 153.8L277.3 155.1L277.4 157.3M277.4 157.3L275.6 155.9L274.3 155.1L272.8 153.9M272.8 153.9L271.0 153.4L269.9 152.6M272.8 153.9L272.6 155.1L270.7 156.3L270.1 157.6L268.6 157.5L268.6 156.7M277.4 157.3L274.9 158.2L274.1 160.0L275.2 161.8L276.9 161.8L276.8 163.1L277.7 163.1M277.7 163.1L278.1 164.4L278.1 166.2L277.7 167.0L278.1 167.9L277.7 168.8M277.7 168.8L276.9 169.5M277.7 163.1L279.0 162.9L281.2 162.1L281.5 164.0L284.0 165.3L285.3 165.5L285.7 167.6L287.1 167.7L287.4 168.8L287.7 170.1L287.3 171.1M277.7 168.8L278.6 170.6L278.6 171.9L279.6 173.6M279.6 173.6L281.5 172.8L283.4 173.0M283.4 173.0L284.0 171.5L286.6 170.4L287.3 171.1M287.3 171.1L287.6 172.9L289.3 173.2L289.5 174.7L290.5 174.7L290.3 176.1M283.4 173.0L285.7 174.7L287.7 175.9L287.0 177.6L289.1 177.7L290.3 176.1M290.3 176.1L290.9 177.5L289.3 178.7L287.7 180.5M287.7 180.5L289.5 181.2L291.2 184.0M287.7 180.5L287.2 182.8L287.1 184.3M279.6 173.6L278.7 175.1L278.6 177.5L277.5 179.4L277.0 181.8L277.3 183.8L276.9 186.4L276.4 189.0L275.8 191.8L275.9 195.2L276.0 198.2L275.2 200.7L274.8 202.6L275.3 203.9L276.0 205.3L278.6 205.7M278.5 206.3L278.5 209.4M334.4 122.2L334.9 123.8L335.3 125.1L333.3 125.8L331.7 127.5L329.0 128.5L329.0 129.9M329.0 129.5L325.2 129.5M329.0 129.9L329.0 131.1L326.2 131.1L326.2 133.4L325.3 133.9L325.3 135.4L322.0 135.4M329.0 129.9L332.3 132.0L337.8 136.0L339.0 136.9L339.0 137.4L339.9 137.3L341.2 137.0L342.6 135.9L346.4 133.4M346.4 133.4L344.7 132.5L344.3 130.8L344.6 129.7L344.5 127.8L344.3 127.1M344.3 127.1L343.9 125.3L342.6 123.8L343.2 122.3L343.6 120.3M344.3 127.1L345.0 125.6L346.0 124.2M332.3 132.0L330.7 132.0L331.7 139.7L331.8 140.6L328.5 140.6L326.6 140.5L326.0 141.2M326.0 141.2L324.9 140.0L324.1 139.6L322.4 140.0M326.0 141.2L326.7 143.3M326.7 143.3L324.8 143.0L323.7 143.0L322.2 143.3M322.1 142.2L323.7 142.1L324.7 142.4L323.7 142.6L322.1 142.7M324.8 143.0L324.8 143.9L323.7 144.5M326.7 143.3L328.7 143.3L329.6 145.2M325.1 146.2L327.0 145.3L327.6 146.6L328.5 147.5L329.1 147.4M327.6 146.6L326.6 148.0M329.1 147.4L330.0 150.1M329.1 147.4L329.6 145.2M329.6 145.2L331.2 145.2L331.7 145.0L332.5 145.6L333.9 145.6M333.9 145.6L333.6 148.3L333.9 149.5M333.9 145.6L333.9 144.5L336.3 144.4M336.3 144.4L336.7 146.6L337.3 148.6M337.1 144.5L337.6 148.5M339.3 143.9L338.6 147.0L338.6 148.4M331.7 145.0L331.8 143.8L332.9 142.5L334.6 141.7L336.5 141.0M336.5 141.0L339.3 140.7L339.8 139.3L339.8 137.3M336.5 141.0L337.1 142.5L338.3 143.4L339.3 143.9M337.1 144.5L338.3 143.4M339.3 143.9L339.7 142.3L342.2 142.7L343.9 142.9L346.4 142.6L347.8 142.1M347.8 142.1L349.4 139.4L349.4 136.1L349.8 133.5M346.4 133.4L348.3 134.2L349.8 133.5M349.8 133.5L356.5 137.0M357.4 125.7L357.4 134.8M357.4 134.8L357.4 136.6L356.5 136.6L356.5 137.0M357.4 134.8L367.4 134.8M356.5 137.0L356.5 140.4L355.3 141.9L354.8 143.0L355.6 144.6M347.8 142.1L348.3 143.2L348.9 145.3L348.1 145.5L349.4 147.5M349.4 147.5L352.0 146.9L354.0 145.8L355.6 144.6M348.3 143.2L347.3 145.8L346.0 148.1L344.6 148.3L343.6 149.7M349.4 147.5L348.5 149.2L349.8 151.9M344.6 151.9L347.5 151.9L349.8 151.9M344.6 153.0L345.8 153.0L345.8 151.9M347.5 151.9L348.5 154.2L348.4 155.5L346.8 155.7L345.7 157.1M349.8 151.9L352.0 150.8M352.0 150.8L351.5 153.4L350.2 155.3L349.7 157.2L348.1 157.9L346.6 158.7M346.6 158.0L347.3 157.7M352.0 150.8L353.6 150.1L355.3 150.3L357.4 149.6L359.4 149.6M355.6 144.6L356.5 146.4L357.6 147.5L359.4 149.6M356.5 146.4L358.2 145.3L359.9 145.8L361.6 145.3L363.3 143.6L364.2 144.6L365.0 145.8M365.0 145.8L365.8 144.0L366.8 143.0L367.1 141.6L367.5 139.3L368.8 138.4M367.1 141.6L369.2 141.4L370.9 142.3L372.0 143.2M372.0 143.2L371.5 144.5L372.5 144.6L373.4 146.2L375.9 147.0L376.8 147.0L374.2 149.6L372.6 149.8L371.7 150.3M372.5 144.6L372.8 144.0M371.7 150.3L369.6 150.8L368.3 150.8L366.6 150.0L365.8 149.3M365.8 149.3L365.0 147.9L364.2 147.0L365.0 145.8M371.7 150.3L370.9 151.4L370.9 154.6L371.4 155.2M365.8 149.3L365.3 150.7L365.8 152.4L365.0 153.6L365.0 154.6M365.0 154.6L368.0 156.3L369.3 157.8M359.4 149.6L361.2 150.1L362.3 150.8L363.3 150.8L365.3 150.7M362.3 150.8L362.7 152.0L361.6 153.1L361.3 155.0M362.0 154.6L365.0 154.6M361.3 155.0L362.0 154.6L362.3 155.8L361.9 156.2L360.7 156.1M361.9 156.2L362.3 156.6L361.6 157.5L361.0 157.5M361.3 155.0L360.7 156.1L361.0 157.5L361.2 158.9L362.2 160.7M362.2 160.7L364.0 161.8L365.0 161.8L365.7 163.6L367.9 163.7L370.4 162.7M362.2 160.7L360.6 161.0L360.4 161.7L360.2 163.8L361.4 164.2L361.4 165.2L360.7 165.2L359.2 163.8L357.6 163.3L356.8 163.4L356.5 163.0M346.6 158.7L347.3 158.8L350.3 158.8L350.6 160.1L352.7 160.1L352.7 160.6L354.7 160.0L354.7 163.1L355.0 163.3L356.5 163.0M356.5 163.0L356.5 164.8L354.8 164.9L354.8 167.6L356.0 168.9M346.2 168.6L348.1 168.7L351.9 168.7L354.0 169.2L356.0 168.9L357.6 169.1M354.0 169.2L354.0 172.8L353.2 172.8L353.2 175.4M353.2 175.4L353.2 178.8L351.1 179.1L350.2 179.0M353.2 175.4L353.8 177.3L355.3 176.5L357.4 176.2L359.0 174.7L361.1 173.0M361.1 173.0L359.5 171.5L357.6 169.1M357.6 169.1L359.1 169.1L360.7 167.4L361.9 167.1M361.9 167.1L361.8 166.4L364.1 165.7L364.0 165.3L364.3 164.4L364.4 163.0L364.0 161.8M364.1 165.7L365.4 166.2L366.1 168.2L365.5 167.6L365.2 166.1M361.9 167.1L364.0 168.1L364.0 169.7L364.1 170.8L363.6 172.2L362.7 173.2M361.1 173.0L362.7 173.2M362.7 173.2L363.3 175.1L363.3 177.3L364.0 177.4M359.1 179.9L360.5 179.0L361.1 179.8L360.2 180.9L359.3 180.6L359.1 179.9M362.4 176.4L363.3 176.5L363.3 177.6L362.4 177.6L362.4 176.4M328.8 114.8L329.4 114.6L330.8 114.8L330.5 115.8L330.4 117.3L330.1 118.9L330.1 120.0M334.8 113.1L336.9 113.8L339.0 114.3M342.6 112.6L342.2 111.8L342.2 110.1M342.2 110.1L341.4 109.8L342.7 108.1M342.7 108.1L343.2 106.3M343.2 106.3L341.7 105.6L339.8 105.0L338.4 103.5M341.7 105.6L341.4 104.7L341.4 103.9M339.2 103.1L340.5 103.1L341.4 103.4L341.4 103.9M341.4 103.9L341.5 102.4L342.2 101.6L342.4 100.5M343.6 98.2L344.6 98.3M348.3 99.6L348.7 102.3L348.9 103.7M348.9 103.7L346.5 104.6L347.9 106.5M347.9 106.5L347.3 108.2L344.4 108.2M344.4 108.2L342.7 108.1M342.2 110.1L343.9 110.0L345.2 108.9L344.4 108.2M345.2 108.9L346.6 108.8L347.8 109.4M347.9 106.5L348.9 106.3L350.6 106.8L350.7 107.6L349.9 108.9L347.8 109.4M348.9 103.7L350.2 104.6L352.1 105.6L355.3 106.1M350.6 106.8L352.1 105.6M355.3 106.1L356.5 104.3L356.2 102.3L356.4 99.6L355.5 98.9M355.5 98.9L353.0 98.9M355.5 98.9L354.3 97.6M354.0 96.4L357.4 96.0L358.7 97.0M356.8 93.6L359.3 94.3M360.0 91.2L359.5 92.7L359.3 94.3L360.1 96.4L358.7 97.0L357.8 99.2L356.4 99.6M360.1 96.4L362.4 98.0L363.9 100.4L363.1 102.2M363.1 102.2L359.9 103.0L356.2 103.0M363.1 102.2L365.3 102.7L366.2 104.5L368.3 105.1L370.2 105.5L369.8 107.6L368.5 108.7M355.6 107.6L357.0 107.7L358.7 107.2L360.1 110.6L361.3 111.0M358.7 107.2L360.9 107.6L361.6 109.5M350.7 107.6L352.1 107.8L353.6 106.9L355.0 107.0L355.6 107.6M355.0 107.0L355.3 106.1M355.6 107.6L354.2 109.5L353.4 109.9M353.4 109.9L352.2 110.1L350.2 109.4L349.9 108.9M353.4 109.9L354.4 111.5L355.4 112.2L357.4 112.8L359.1 112.3L360.4 112.8M355.4 112.2L355.2 114.4L355.7 115.5L358.2 115.5L358.6 115.1L359.9 114.7M358.6 115.1L358.2 116.0M353.2 117.3L354.0 116.1L355.7 115.5M352.7 114.8L353.6 114.1L353.7 115.7L354.0 116.1M353.6 114.1L354.4 114.4L355.2 114.4M353.6 114.1L353.4 113.3L354.3 113.3L354.4 114.4M349.6 111.0L350.6 111.0L352.3 111.3L352.7 113.0L351.9 114.1M349.6 111.0L349.8 112.4L351.1 113.6M352.3 111.3L352.3 110.1M352.7 113.0L353.4 113.3M347.8 110.6L349.2 110.6L350.2 109.4M345.7 91.8L346.8 88.5L346.6 84.9L348.1 82.0L349.4 78.4L350.2 75.8L351.5 73.5L353.6 72.4M353.6 72.4L356.3 74.9L356.5 79.4M353.6 72.4L358.0 71.9L358.2 70.0L359.9 70.0L360.7 72.1M360.7 72.1L362.3 70.5M360.7 72.1L360.3 74.0L361.6 75.4L360.7 77.3L361.6 79.6L361.3 81.4L362.9 85.1L361.6 87.2L359.7 89.3M330.1 98.0L329.5 98.8L330.1 99.4L331.0 99.4M332.1 98.0L333.8 96.7M366.6 121.2L367.2 120.4L368.3 120.4L370.7 120.1L372.0 120.1L374.1 120.0L373.6 118.6L373.4 117.6L374.1 117.3M371.3 115.3L373.0 115.7L373.1 116.8L374.1 117.3M370.0 113.1L372.1 113.3L373.8 113.9L375.5 114.9L377.2 114.9M373.0 115.7L374.2 115.5L375.5 114.9M374.2 115.5L375.5 117.5L375.2 118.1M374.1 117.3L375.2 118.1L376.8 117.4L377.5 118.7M372.0 120.1L371.0 122.5L369.0 123.9M369.0 123.9L366.6 124.8M369.0 123.9L369.3 125.1L367.5 125.8L368.3 126.8L367.9 127.3L366.6 128.0L365.8 127.8M369.3 125.1L371.7 126.2L374.0 128.0L375.5 128.1M375.5 128.1L376.5 127.2L376.8 127.3M375.5 128.1L376.3 128.2L377.1 128.7M374.1 120.0L375.1 121.4L374.7 122.8L375.1 124.3L376.6 125.5L376.8 126.8L377.2 127.3M365.1 126.0L365.7 127.8M366.3 124.6L366.2 125.8L365.8 127.8M365.9 124.2L366.5 124.0L367.2 123.1L366.6 122.7M372.4 139.8L372.8 138.8L374.2 138.9L375.9 139.3L377.6 137.8L380.1 137.5M380.1 137.5L381.1 139.6M380.1 137.5L382.7 136.6L383.3 134.8M383.3 134.8L382.8 134.1L380.6 133.9L379.8 132.8M383.3 134.8L383.5 132.8L383.8 132.1M379.1 132.3L379.7 132.4M381.7 119.9L383.5 119.0L385.2 119.4L386.9 120.6L387.9 120.6L387.9 121.6M387.9 121.6L387.4 123.3L387.6 125.3L388.4 125.9L387.6 127.4M387.6 127.4L388.4 128.6L389.7 130.0L389.2 130.5L388.2 131.8M387.6 127.4L390.3 127.8L392.2 127.4L392.5 126.1L394.7 125.4L395.3 124.0L396.2 122.8L396.7 120.9L399.2 120.2M387.9 121.6L389.4 121.9L390.7 120.8L392.4 119.8L393.6 120.2L395.3 119.5L396.6 119.2L396.7 120.5L398.3 119.9L399.2 120.2M392.4 119.8L390.7 118.1L389.0 117.1L387.7 115.6L386.9 114.5L385.6 113.9L384.4 115.5L383.5 115.5L383.5 111.2L385.6 110.6M383.5 115.5L382.2 114.7L380.6 114.9M385.6 110.6L387.7 112.1L388.6 113.0L391.0 112.8L391.9 114.3L392.4 115.7L393.6 115.8L394.5 115.4L396.1 114.5M396.1 114.5L398.3 113.6L400.1 113.8L402.9 113.8L403.9 114.5M393.6 120.2L393.5 118.0L394.0 117.4L395.7 117.4L394.7 116.7L395.7 116.0L397.8 116.4L398.5 117.5M395.7 117.4L398.5 117.5M396.1 114.5L396.6 115.5L395.7 116.0M399.2 120.2L399.5 118.6L398.5 117.5M398.5 117.5L400.4 116.5L402.5 115.3L403.9 114.5M403.9 114.5L404.0 113.6L404.4 113.3L404.0 111.2L405.9 111.0L406.3 108.6L408.4 108.7L408.6 107.0L409.9 106.1M409.9 106.1L408.1 105.5L406.7 103.7L403.7 103.9L402.0 100.5L400.8 99.2L398.3 99.5L396.2 97.6L394.5 97.5L391.1 98.8L388.1 99.6L387.7 101.1L386.9 102.3L388.1 103.3L386.9 103.9L385.8 103.5L383.1 104.2L380.6 103.0L379.1 102.7L377.4 104.2L375.8 105.2L375.8 107.0L376.9 107.9L377.6 109.5M410.3 106.0L412.2 104.6L414.3 103.9L416.4 105.0L418.8 105.1L419.6 102.2L422.5 103.3L422.5 104.2L425.7 104.6L427.8 105.8L429.9 105.9L431.6 105.5L432.8 104.7L434.7 105.2M410.5 106.9L412.6 108.2L413.0 111.0L416.8 112.2L417.6 113.9L420.6 114.0L424.4 114.9L426.9 114.3L429.4 113.9L430.6 112.8L430.6 111.2L432.4 111.2L434.1 110.0L437.3 109.2L435.8 107.6L434.1 106.5L434.7 105.2M434.7 105.2L436.9 104.6L437.6 101.3L440.4 100.2L442.5 101.5L443.8 104.7L443.8 105.2L446.5 106.4L446.7 107.9L449.9 107.2L448.6 111.1L447.0 111.3L446.8 113.6L446.4 114.3M446.4 114.3L444.2 114.7L443.3 114.9L441.2 116.9M442.7 119.3L444.5 118.5M427.3 135.2L426.3 134.0L425.1 133.6L423.1 134.3L422.5 134.4M422.5 134.4L421.6 135.5M421.6 135.5L419.9 134.7L419.7 132.9L418.5 132.9L419.5 131.2L419.5 129.7L418.5 128.9M418.5 128.9L417.2 127.9L415.5 128.2L413.9 129.4L411.3 129.9L411.2 129.2L408.8 129.2L407.1 128.2L404.6 127.1L402.9 126.1L402.6 124.8L403.3 123.8L402.1 121.7L400.4 121.2L399.2 120.2M403.8 128.4L406.3 129.8L408.0 130.4L410.6 130.7L410.6 129.3M411.2 129.9L412.0 130.4L413.9 130.2L413.9 129.4M393.8 133.2L396.2 132.5L395.3 129.4L397.4 128.2L399.1 126.3L399.1 124.6L398.7 122.8L401.2 121.7L402.1 121.7M411.2 135.1L411.1 132.7L410.7 131.3L412.0 131.0L412.0 131.7L414.2 132.0L413.2 133.2L414.1 133.4L414.3 135.3M414.4 134.9L415.0 132.9L416.1 131.6L416.6 130.4L418.1 129.5L418.5 128.9M420.7 136.3L418.9 136.9L418.7 138.2L419.4 139.7L419.1 140.8L419.9 142.7L420.2 144.0L419.5 145.2M421.6 135.5L420.7 136.3M420.7 136.3L421.0 137.0L421.6 137.0L421.4 138.7L422.3 138.4L424.0 138.1L424.7 139.0L424.7 139.9L425.3 140.6L425.2 141.5M425.2 141.5L423.1 141.6L422.6 142.2L423.1 143.9M422.5 134.4L423.9 136.0L424.7 136.6L424.0 137.2L425.0 137.9L426.1 139.4L426.9 140.2L426.9 141.4M426.9 141.4L426.9 143.2L425.7 144.0L425.2 144.6L424.4 145.0M425.2 141.5L426.9 141.4M420.7 148.3L421.4 148.9L422.4 148.6M428.7 152.1L429.0 153.0L430.3 153.0L431.6 152.5L433.1 152.5L433.7 151.3L433.9 150.2L435.4 150.3M432.6 149.9L433.3 150.1L433.5 149.6M455.2 156.0L455.2 161.5M440.9 161.8L441.7 161.6L441.8 161.8M535.9 106.3L559.5 106.3L560.0 106.7L562.2 107.2L564.3 107.6L565.3 107.2L568.3 108.9L568.6 109.4L569.4 109.9L570.2 110.9L570.3 113.6L569.7 114.5L570.2 115.1L573.2 113.8L573.1 113.2L575.1 112.9L575.5 112.2L576.6 111.2L579.5 111.2L580.1 110.7L580.5 109.7L581.5 108.3L582.2 108.4L582.6 108.8L582.6 110.4L583.1 111.0L583.3 111.3M520.9 70.7L520.9 89.7L522.6 90.2L523.9 91.8L525.6 90.7L527.3 92.7L528.7 95.5L530.2 96.6L530.0 98.0M541.1 124.8L543.1 124.6L546.2 126.0L548.6 126.0L548.6 125.5L550.0 125.5L551.7 127.6L552.8 128.2L553.4 127.5L554.7 127.8L555.9 129.7L556.3 130.7L557.9 131.2M562.1 141.4L562.2 140.8L562.5 140.0L563.5 140.0L563.1 139.1L563.1 138.5L564.6 138.5L564.6 140.2M564.6 138.5L565.4 137.9M564.5 141.5L565.4 140.4M563.8 142.1L564.5 141.5L565.8 142.4M566.2 142.7L568.1 141.4L569.7 141.0M567.6 144.4L569.2 144.6M569.9 146.9L570.2 145.8M574.6 146.6L574.1 147.6M579.7 143.8L578.7 144.9L578.4 146.2L579.1 147.5L580.8 147.9L582.9 148.6L582.6 150.4L583.3 152.1L583.4 152.8M583.4 152.8L585.0 153.0L586.3 151.9L585.8 150.4L587.5 150.3L588.6 149.4M588.6 149.4L588.1 148.7L589.2 146.8M588.6 149.4L589.4 150.0L589.4 152.1L590.9 152.5L592.2 152.1M591.6 148.7L591.3 150.4L592.2 152.1M592.2 152.1L593.9 151.9L594.3 150.4L594.3 148.9M593.9 151.9L595.5 151.9L596.2 150.3M583.4 152.8L580.8 152.4L581.2 153.8L580.8 155.1L580.9 157.3M580.9 157.3L579.1 155.9L577.8 155.1L576.3 153.9M576.3 153.9L574.5 153.4L573.4 152.6M576.3 153.9L576.1 155.1L574.2 156.3L573.6 157.6L572.1 157.5L572.1 156.7M580.9 157.3L578.4 158.2L577.6 160.0L578.7 161.8L580.4 161.8L580.3 163.1L581.2 163.1M581.2 163.1L581.6 164.4L581.6 166.2L581.2 167.0L581.6 167.9L581.2 168.8M581.2 168.8L580.4 169.5M581.2 163.1L582.5 162.9L584.7 162.1L585.0 164.0L587.5 165.3L588.8 165.5L589.2 167.6L590.6 167.7L590.9 168.8L591.2 170.1L590.8 171.1M581.2 168.8L582.1 170.6L582.1 171.9L583.1 173.6M583.1 173.6L585.0 172.8L586.9 173.0M586.9 173.0L587.5 171.5L590.1 170.4L590.8 171.1M590.8 171.1L591.1 172.9L592.8 173.2L593.0 174.7L594.0 174.7L593.8 176.1M586.9 173.0L589.2 174.7L591.2 175.9L590.5 177.6L592.6 177.7L593.8 176.1M593.8 176.1L594.4 177.5L592.8 178.7L591.2 180.5M591.2 180.5L593.0 181.2L594.7 184.0M591.2 180.5L590.7 182.8L590.6 184.3M583.1 173.6L582.2 175.1L582.1 177.5L581.0 179.4L580.5 181.8L580.8 183.8L580.4 186.4L579.9 189.0L579.3 191.8L579.4 195.2L579.5 198.2L578.7 200.7L578.3 202.6L578.8 203.9L579.5 205.3L582.1 205.7M582.0 206.3L582.0 209.4M637.9 122.2L638.4 123.8L638.8 125.1L636.8 125.8L635.2 127.5L632.5 128.5L632.5 129.9M632.5 129.5L628.7 129.5M632.5 129.9L632.5 131.1L629.7 131.1L629.7 133.4L628.8 133.9L628.8 135.4L625.5 135.4M632.5 129.9L635.8 132.0L641.3 136.0L642.5 136.9L642.5 137.4L643.4 137.3L644.7 137.0L646.1 135.9L649.9 133.4M649.9 133.4L648.2 132.5L647.8 130.8L648.1 129.7L648.0 127.8L647.8 127.1M647.8 127.1L647.4 125.3L646.1 123.8L646.7 122.3L647.1 120.3M647.8 127.1L648.5 125.6L649.5 124.2M635.8 132.0L634.2 132.0L635.2 139.7L635.3 140.6L632.0 140.6L630.1 140.5L629.5 141.2M629.5 141.2L628.4 140.0L627.6 139.6L625.9 140.0M629.5 141.2L630.2 143.3M630.2 143.3L628.3 143.0L627.2 143.0L625.7 143.3M625.6 142.2L627.2 142.1L628.2 142.4L627.2 142.6L625.6 142.7M628.3 143.0L628.3 143.9L627.2 144.5M630.2 143.3L632.2 143.3L633.1 145.2M628.6 146.2L630.5 145.3L631.1 146.6L632.0 147.5L632.6 147.4M631.1 146.6L630.1 148.0M632.6 147.4L633.5 150.1M632.6 147.4L633.1 145.2M633.1 145.2L634.7 145.2L635.2 145.0L636.0 145.6L637.4 145.6M637.4 145.6L637.1 148.3L637.4 149.5M637.4 145.6L637.4 144.5L639.8 144.4M639.8 144.4L640.2 146.6L640.8 148.6M640.6 144.5L641.1 148.5M642.8 143.9L642.1 147.0L642.1 148.4M635.2 145.0L635.3 143.8L636.4 142.5L638.1 141.7L640.0 141.0M640.0 141.0L642.8 140.7L643.3 139.3L643.3 137.3M640.0 141.0L640.6 142.5L641.8 143.4L642.8 143.9M640.6 144.5L641.8 143.4M642.8 143.9L643.2 142.3L645.7 142.7L647.4 142.9L649.9 142.6L651.3 142.1M651.3 142.1L652.9 139.4L652.9 136.1L653.3 133.5M649.9 133.4L651.8 134.2L653.3 133.5M653.3 133.5L660.0 137.0M660.9 125.7L660.9 134.8M660.9 134.8L660.9 136.6L660.0 136.6L660.0 137.0M660.9 134.8L670.9 134.8M660.0 137.0L660.0 140.4L658.8 141.9L658.3 143.0L659.1 144.6M651.3 142.1L651.8 143.2L652.4 145.3L651.6 145.5L652.9 147.5M652.9 147.5L655.5 146.9L657.5 145.8L659.1 144.6M651.8 143.2L650.8 145.8L649.5 148.1L648.1 148.3L647.1 149.7M652.9 147.5L652.0 149.2L653.3 151.9M648.1 151.9L651.0 151.9L653.3 151.9M648.1 153.0L649.3 153.0L649.3 151.9M651.0 151.9L652.0 154.2L651.9 155.5L650.3 155.7L649.2 157.1M653.3 151.9L655.5 150.8M655.5 150.8L655.0 153.4L653.7 155.3L653.2 157.2L651.6 157.9L650.1 158.7M650.1 158.0L650.8 157.7M655.5 150.8L657.1 150.1L658.8 150.3L660.9 149.6L662.9 149.6M659.1 144.6L660.0 146.4L661.1 147.5L662.9 149.6M660.0 146.4L661.7 145.3L663.4 145.8L665.1 145.3L666.8 143.6L667.7 144.6L668.5 145.8M668.5 145.8L669.3 144.0L670.3 143.0L670.6 141.6L671.0 139.3L672.3 138.4M670.6 141.6L672.7 141.4L674.4 142.3L675.5 143.2M675.2 150.3L673.1 150.8L671.8 150.8L670.1 150.0L669.3 149.3M669.3 149.3L668.5 147.9L667.7 147.0L668.5 145.8M675.2 150.3L674.4 151.4L674.4 154.6L674.9 155.2M669.3 149.3L668.8 150.7L669.3 152.4L668.5 153.6L668.5 154.6M668.5 154.6L671.5 156.3L672.8 157.8M662.9 149.6L664.7 150.1L665.8 150.8L666.8 150.8L668.8 150.7M665.8 150.8L666.2 152.0L665.1 153.1L664.8 155.0M665.5 154.6L668.5 154.6M664.8 155.0L665.5 154.6L665.8 155.8L665.4 156.2L664.2 156.1M665.4 156.2L665.8 156.6L665.1 157.5L664.5 157.5M664.8 155.0L664.2 156.1L664.5 157.5L664.7 158.9L665.7 160.7M665.7 160.7L667.5 161.8L668.5 161.8L669.2 163.6L671.4 163.7L673.9 162.7M665.7 160.7L664.1 161.0L663.9 161.7L663.7 163.8L664.9 164.2L664.9 165.2L664.2 165.2L662.7 163.8L661.1 163.3L660.3 163.4L660.0 163.0M650.1 158.7L650.8 158.8L653.8 158.8L654.1 160.1L656.2 160.1L656.2 160.6L658.2 160.0L658.2 163.1L658.5 163.3L660.0 163.0M660.0 163.0L660.0 164.8L658.3 164.9L658.3 167.6L659.5 168.9M649.7 168.6L651.6 168.7L655.4 168.7L657.5 169.2L659.5 168.9L661.1 169.1M657.5 169.2L657.5 172.8L656.7 172.8L656.7 175.4M656.7 175.4L656.7 178.8L654.6 179.1L653.7 179.0M656.7 175.4L657.3 177.3L658.8 176.5L660.9 176.2L662.5 174.7L664.6 173.0M664.6 173.0L663.0 171.5L661.1 169.1M661.1 169.1L662.6 169.1L664.2 167.4L665.4 167.1M665.4 167.1L665.3 166.4L667.6 165.7L667.5 165.3L667.8 164.4L667.9 163.0L667.5 161.8M667.6 165.7L668.9 166.2L669.6 168.2L669.0 167.6L668.7 166.1M665.4 167.1L667.5 168.1L667.5 169.7L667.6 170.8L667.1 172.2L666.2 173.2M664.6 173.0L666.2 173.2M666.2 173.2L666.8 175.1L666.8 177.3L667.5 177.4M662.6 179.9L664.0 179.0L664.6 179.8L663.7 180.9L662.8 180.6L662.6 179.9M665.9 176.4L666.8 176.5L666.8 177.6L665.9 177.6L665.9 176.4M632.3 114.8L632.9 114.6L634.3 114.8L634.0 115.8L633.9 117.3L633.6 118.9L633.6 120.0M638.3 113.1L640.4 113.8L642.5 114.3M646.1 112.6L645.7 111.8L645.7 110.1M645.7 110.1L644.9 109.8L646.2 108.1M646.2 108.1L646.7 106.3M646.7 106.3L645.2 105.6L643.3 105.0L641.9 103.5M645.2 105.6L644.9 104.7L644.9 103.9M642.7 103.1L644.0 103.1L644.9 103.4L644.9 103.9M644.9 103.9L645.0 102.4L645.7 101.6L645.9 100.5M647.1 98.2L648.1 98.3M651.8 99.6L652.2 102.3L652.4 103.7M652.4 103.7L650.0 104.6L651.4 106.5M651.4 106.5L650.8 108.2L647.9 108.2M647.9 108.2L646.2 108.1M645.7 110.1L647.4 110.0L648.7 108.9L647.9 108.2M648.7 108.9L650.1 108.8L651.3 109.4M651.4 106.5L652.4 106.3L654.1 106.8L654.2 107.6L653.4 108.9L651.3 109.4M652.4 103.7L653.7 104.6L655.6 105.6L658.8 106.1M654.1 106.8L655.6 105.6M658.8 106.1L660.0 104.3L659.7 102.3L659.9 99.6L659.0 98.9M659.0 98.9L656.5 98.9M659.0 98.9L657.8 97.6M657.5 96.4L660.9 96.0L662.2 97.0M660.3 93.6L662.8 94.3M663.5 91.2L663.0 92.7L662.8 94.3L663.6 96.4L662.2 97.0L661.3 99.2L659.9 99.6M663.6 96.4L665.9 98.0L667.4 100.4L666.6 102.2M666.6 102.2L663.4 103.0L659.7 103.0M666.6 102.2L668.8 102.7L669.7 104.5L671.8 105.1L673.7 105.5L673.3 107.6L672.0 108.7M659.1 107.6L660.5 107.7L662.2 107.2L663.6 110.6L664.8 111.0M662.2 107.2L664.4 107.6L665.1 109.5M654.2 107.6L655.6 107.8L657.1 106.9L658.5 107.0L659.1 107.6M658.5 107.0L658.8 106.1M659.1 107.6L657.7 109.5L656.9 109.9M656.9 109.9L655.7 110.1L653.7 109.4L653.4 108.9M656.9 109.9L657.9 111.5L658.9 112.2L660.9 112.8L662.6 112.3L663.9 112.8M658.9 112.2L658.7 114.4L659.2 115.5L661.7 115.5L662.1 115.1L663.4 114.7M662.1 115.1L661.7 116.0M656.7 117.3L657.5 116.1L659.2 115.5M656.2 114.8L657.1 114.1L657.2 115.7L657.5 116.1M657.1 114.1L657.9 114.4L658.7 114.4M657.1 114.1L656.9 113.3L657.8 113.3L657.9 114.4M653.1 111.0L654.1 111.0L655.8 111.3L656.2 113.0L655.4 114.1M653.1 111.0L653.3 112.4L654.6 113.6M655.8 111.3L655.8 110.1M656.2 113.0L656.9 113.3M651.3 110.6L652.7 110.6L653.7 109.4M649.2 91.8L650.3 88.5L650.1 84.9L651.6 82.0L652.9 78.4L653.7 75.8L655.0 73.5L657.1 72.4M657.1 72.4L659.8 74.9L660.0 79.4M657.1 72.4L661.5 71.9L661.7 70.0L663.4 70.0L664.2 72.1M664.2 72.1L665.8 70.5M664.2 72.1L663.8 74.0L665.1 75.4L664.2 77.3L665.1 79.6L664.8 81.4L666.4 85.1L665.1 87.2L663.2 89.3M633.6 98.0L633.0 98.8L633.6 99.4L634.5 99.4M635.6 98.0L637.3 96.7M670.1 121.2L670.7 120.4L671.8 120.4L674.2 120.1L675.5 120.1L677.6 120.0L677.1 118.6L676.9 117.6L677.6 117.3M673.5 113.1L675.6 113.3L677.3 113.9L679.0 114.9L680.7 114.9M675.5 120.1L674.5 122.5L672.5 123.9M672.5 123.9L670.1 124.8M672.5 123.9L672.8 125.1L671.0 125.8L671.8 126.8L671.4 127.3L670.1 128.0L669.3 127.8M672.8 125.1L675.2 126.2L677.5 128.0L679.0 128.1M668.6 126.0L669.2 127.8M669.8 124.6L669.7 125.8L669.3 127.8M669.4 124.2L670.0 124.0L670.7 123.1L670.1 122.7"/>
<circle cx="233.8" cy="119.5" r="6.5" fill="#a3144e" fill-opacity="0.2" stroke="#9e1a50" stroke-width="1.4"/>
<circle cx="269.2" cy="112.3" r="6.5" fill="#a3144e" fill-opacity="0.2" stroke="#9e1a50" stroke-width="1.4"/>
<circle cx="268.8" cy="130.5" r="6.5" fill="#a3144e" fill-opacity="0.2" stroke="#9e1a50" stroke-width="1.4"/>
<circle cx="367.5" cy="96.5" r="6.5" fill="#a3144e" fill-opacity="0.2" stroke="#9e1a50" stroke-width="1.4"/>
<circle cx="342.6" cy="104.2" r="6.5" fill="#a3144e" fill-opacity="0.2" stroke="#9e1a50" stroke-width="1.4"/>
<circle cx="344.0" cy="105.2" r="6.5" fill="#a3144e" fill-opacity="0.2" stroke="#9e1a50" stroke-width="1.4"/>
<circle cx="345.0" cy="106.0" r="6.5" fill="#a3144e" fill-opacity="0.2" stroke="#9e1a50" stroke-width="1.4"/>
<circle cx="346.2" cy="106.8" r="6.5" fill="#a3144e" fill-opacity="0.2" stroke="#9e1a50" stroke-width="1.4"/>
<circle cx="356.0" cy="113.8" r="6.5" fill="#a3144e" fill-opacity="0.2" stroke="#9e1a50" stroke-width="1.4"/>
<circle cx="423.5" cy="126.0" r="6.5" fill="#a3144e" fill-opacity="0.2" stroke="#9e1a50" stroke-width="1.4"/>
<circle cx="431.6" cy="133.6" r="6.5" fill="#a3144e" fill-opacity="0.2" stroke="#9e1a50" stroke-width="1.4"/>
<circle cx="431.8" cy="133.4" r="6.5" fill="#a3144e" fill-opacity="0.2" stroke="#9e1a50" stroke-width="1.4"/>
<circle cx="434.1" cy="116.5" r="6.5" fill="#a3144e" fill-opacity="0.2" stroke="#9e1a50" stroke-width="1.4"/>
<circle cx="437.2" cy="120.6" r="6.5" fill="#a3144e" fill-opacity="0.2" stroke="#9e1a50" stroke-width="1.4"/>
<circle cx="438.4" cy="125.2" r="6.5" fill="#a3144e" fill-opacity="0.2" stroke="#9e1a50" stroke-width="1.4"/>
</svg>
<div class="a" style="left:327.2px;top:134.2px;width:18.7px;height:36.6px;background:#fff;border:1.2px solid #b4b4b4;border-radius:2.4px"></div>
<div class="a" style="left:328.4px;top:152.2px;width:16.3px;height:0.8px;background:#ccc"></div>
<svg class="a" style="left:327.2px;top:134.2px" width="18.7" height="36.6" viewBox="0 0 18.7 36.6"><path d="M5.7 10.200h7.400M9.400 6.500v7.400M6.400 28h6" stroke="#000" stroke-width="1.500" fill="none"/></svg>
<div class="a" style="left:855.4px;top:424.8px;width:138.2px;height:9.8px;background:rgba(255,255,255,0.8)"></div>
<svg class="a" style="left:858.2px;top:427.6px" width="7.2" height="4.8" viewBox="0 0 12 8"><rect width="12" height="4" fill="#4c7be1"/><rect y="4" width="12" height="4" fill="#ffd500"/></svg>
<div class="t " style="left:867.2px;top:426.92px;font-size:7.3px;color:#0078a8;transform:scaleX(0.958);transform-origin:0 0;">Leaflet</div>
<div class="t " style="left:890.2px;top:426.72px;font-size:7.3px;color:#777;">|</div>
<div class="t " style="left:894.3px;top:426.92px;font-size:7.3px;color:#333;">&copy;</div>
<div class="t " style="left:901.6px;top:426.92px;font-size:7.3px;color:#0078a8;transform:scaleX(0.963);transform-origin:0 0;">OpenStreetMap</div>
<div class="t " style="left:953.6px;top:426.92px;font-size:7.3px;color:#333;transform:scaleX(0.970);transform-origin:0 0;">contributors</div>
</body></html>
